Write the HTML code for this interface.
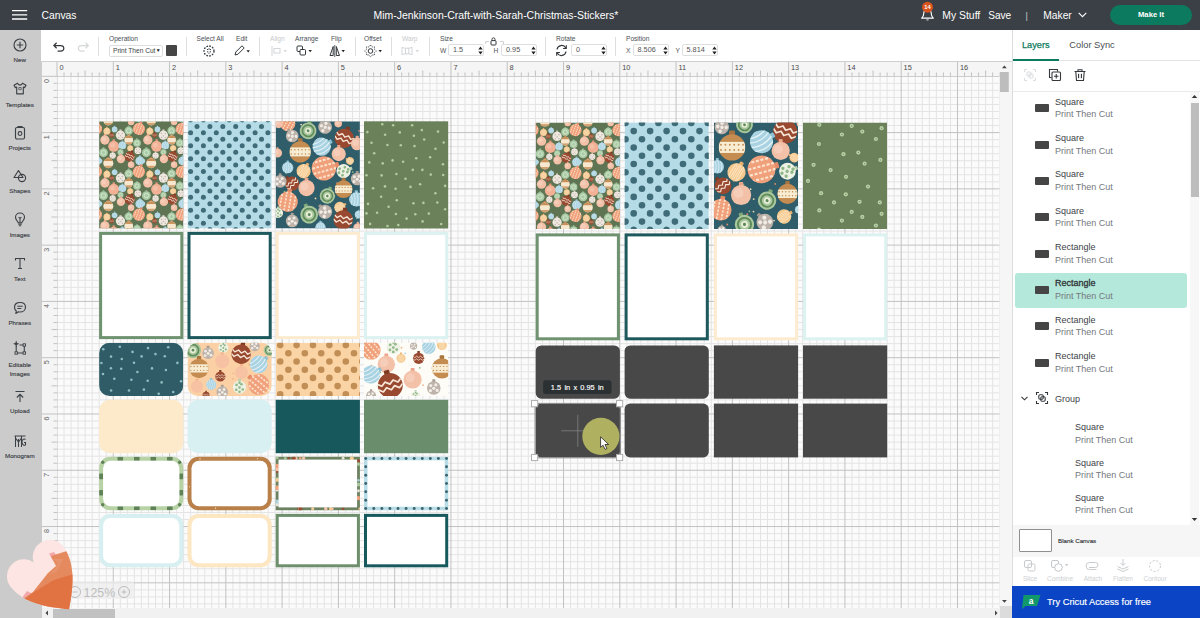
<!DOCTYPE html>
<html><head><meta charset="utf-8"><title>Canvas</title>
<style>
*{box-sizing:border-box;margin:0;padding:0}
html,body{width:1200px;height:618px;overflow:hidden;background:#fff;font-family:"Liberation Sans",sans-serif;}
body{position:relative}
.abs{position:absolute}
#hdr{left:0;top:0;width:1200px;height:30px;background:#3a4045;color:#fff}
#hdr span{position:absolute;white-space:nowrap;font-size:11px;line-height:30px;top:.7px}
#side{left:0;top:30px;width:41.5px;height:588px;background:#cbcbcb}
.sb{position:absolute;left:0;width:39.6px;text-align:center;font-size:6.2px;color:#3c4146;-webkit-text-stroke:.15px #3c4146}
.sb svg{display:block;margin:0 auto 3px}
#tool{left:41px;top:30px;width:971px;height:31.8px;background:#fff;border-bottom:1px solid #cfcfcf}
.tl{position:absolute;font-size:6.6px;color:#4a4f54;white-space:nowrap;top:35.3px;line-height:7px}
.tl.dim{color:#c6c8ca}
.sep{position:absolute;top:37px;width:1px;height:19px;background:#dedede}
.inp{position:absolute;top:44px;height:12px;border:1px solid #dedede;border-radius:2px;font-size:7.3px;line-height:10px;color:#555;padding-left:4px;background:#fff}
.lbl{position:absolute;top:46.8px;font-size:6.7px;color:#555;line-height:7px}
#panel{left:1011.5px;top:30px;width:188.5px;height:588px;background:#fff;border-left:1px solid #dcdcdc}
.ly{position:absolute;left:0;width:188px;font-size:9px;line-height:12.7px;white-space:nowrap}
.ly b{font-weight:normal;color:#3d4247;display:block}
.ly i{font-style:normal;color:#74797e;display:block}
.sw{position:absolute;left:1035px;width:14px;height:8px;background:#454545;border-radius:1px}
</style></head><body>
<svg class="abs" style="left:0;top:0" width="1200" height="618" viewBox="0 0 1200 618" font-family="Liberation Sans, sans-serif">
<rect x="41" y="62" width="971" height="556" fill="#fbfbfb"/>
<path d="M64.03 76V608M71.07 76V608M78.11 76V608M85.14 76V608M92.17 76V608M99.21 76V608M106.25 76V608M120.31 76V608M127.35 76V608M134.38 76V608M141.42 76V608M148.45 76V608M155.49 76V608M162.53 76V608M176.59 76V608M183.63 76V608M190.66 76V608M197.70 76V608M204.74 76V608M211.77 76V608M218.81 76V608M232.88 76V608M239.91 76V608M246.94 76V608M253.98 76V608M261.01 76V608M268.05 76V608M275.09 76V608M289.15 76V608M296.19 76V608M303.23 76V608M310.26 76V608M317.30 76V608M324.33 76V608M331.37 76V608M345.44 76V608M352.47 76V608M359.50 76V608M366.54 76V608M373.57 76V608M380.61 76V608M387.64 76V608M401.72 76V608M408.75 76V608M415.79 76V608M422.82 76V608M429.86 76V608M436.89 76V608M443.93 76V608M458.00 76V608M465.03 76V608M472.06 76V608M479.10 76V608M486.13 76V608M493.17 76V608M500.20 76V608M514.28 76V608M521.31 76V608M528.35 76V608M535.38 76V608M542.41 76V608M549.45 76V608M556.49 76V608M570.56 76V608M577.59 76V608M584.62 76V608M591.66 76V608M598.70 76V608M605.73 76V608M612.76 76V608M626.84 76V608M633.87 76V608M640.90 76V608M647.94 76V608M654.98 76V608M662.01 76V608M669.04 76V608M683.12 76V608M690.15 76V608M697.19 76V608M704.22 76V608M711.25 76V608M718.29 76V608M725.33 76V608M739.39 76V608M746.43 76V608M753.47 76V608M760.50 76V608M767.53 76V608M774.57 76V608M781.61 76V608M795.68 76V608M802.71 76V608M809.75 76V608M816.78 76V608M823.82 76V608M830.85 76V608M837.88 76V608M851.96 76V608M858.99 76V608M866.02 76V608M873.06 76V608M880.10 76V608M887.13 76V608M894.16 76V608M908.24 76V608M915.27 76V608M922.31 76V608M929.34 76V608M936.38 76V608M943.41 76V608M950.45 76V608M964.51 76V608M971.55 76V608M978.59 76V608M985.62 76V608M992.65 76V608M999.69 76V608M57 83.33H1000M57 90.37H1000M57 97.41H1000M57 104.44H1000M57 111.47H1000M57 118.51H1000M57 125.55H1000M57 139.62H1000M57 146.65H1000M57 153.69H1000M57 160.72H1000M57 167.75H1000M57 174.79H1000M57 181.82H1000M57 195.89H1000M57 202.93H1000M57 209.96H1000M57 217.00H1000M57 224.04H1000M57 231.07H1000M57 238.11H1000M57 252.18H1000M57 259.21H1000M57 266.25H1000M57 273.28H1000M57 280.31H1000M57 287.35H1000M57 294.38H1000M57 308.45H1000M57 315.49H1000M57 322.52H1000M57 329.56H1000M57 336.60H1000M57 343.63H1000M57 350.67H1000M57 364.74H1000M57 371.77H1000M57 378.81H1000M57 385.84H1000M57 392.88H1000M57 399.91H1000M57 406.94H1000M57 421.02H1000M57 428.05H1000M57 435.09H1000M57 442.12H1000M57 449.16H1000M57 456.19H1000M57 463.23H1000M57 477.30H1000M57 484.33H1000M57 491.37H1000M57 498.40H1000M57 505.44H1000M57 512.47H1000M57 519.50H1000M57 533.58H1000M57 540.61H1000M57 547.64H1000M57 554.68H1000M57 561.72H1000M57 568.75H1000M57 575.78H1000M57 589.86H1000M57 596.89H1000M57 603.92H1000" stroke="#e4e4e4" stroke-width="1" fill="none"/>
<path d="M57.00 76V608M113.28 76V608M169.56 76V608M225.84 76V608M282.12 76V608M338.40 76V608M394.68 76V608M450.96 76V608M507.24 76V608M563.52 76V608M619.80 76V608M676.08 76V608M732.36 76V608M788.64 76V608M844.92 76V608M901.20 76V608M957.48 76V608M57 76.30H1000M57 132.58H1000M57 188.86H1000M57 245.14H1000M57 301.42H1000M57 357.70H1000M57 413.98H1000M57 470.26H1000M57 526.54H1000M57 582.82H1000" stroke="#c2c2c2" stroke-width="1" fill="none"/>
<clipPath id="c1"><rect x="99.1" y="121.3" width="84.2" height="107.2" rx="0"/></clipPath><g clip-path="url(#c1)"><rect x="99.1" y="121.3" width="84.2" height="107.2" fill="#5f7453"/><g transform="translate(97.0 118.0) rotate(0)"><rect x="-0.97" y="-5.67" width="1.95" height="1.86" rx="0.35" fill="#8fc0d2"/><clipPath id="o1"><circle r="4.43"/></clipPath><circle r="4.43" fill="#a9d3e2"/><g clip-path="url(#o1)"><path d="M-5.58 -4.43Q-3.36 0 -5.58 4.43" fill="none" stroke="#e6f3f6" stroke-width="0.49"/><path d="M-3.72 -4.43Q-1.51 0 -3.72 4.43" fill="none" stroke="#e6f3f6" stroke-width="0.49"/><path d="M-1.86 -4.43Q0.35 0 -1.86 4.43" fill="none" stroke="#e6f3f6" stroke-width="0.49"/><path d="M0.00 -4.43Q2.21 0 0.00 4.43" fill="none" stroke="#e6f3f6" stroke-width="0.49"/><path d="M1.86 -4.43Q4.07 0 1.86 4.43" fill="none" stroke="#e6f3f6" stroke-width="0.49"/><path d="M3.72 -4.43Q5.93 0 3.72 4.43" fill="none" stroke="#e6f3f6" stroke-width="0.49"/><path d="M5.58 -4.43Q7.79 0 5.58 4.43" fill="none" stroke="#e6f3f6" stroke-width="0.49"/></g></g><g transform="translate(139.9 118.0) rotate(0)"><rect x="-0.97" y="-5.67" width="1.95" height="1.86" rx="0.35" fill="#8fc0d2"/><clipPath id="o2"><circle r="4.43"/></clipPath><circle r="4.43" fill="#a9d3e2"/><g clip-path="url(#o2)"><path d="M-5.58 -4.43Q-3.36 0 -5.58 4.43" fill="none" stroke="#e6f3f6" stroke-width="0.49"/><path d="M-3.72 -4.43Q-1.51 0 -3.72 4.43" fill="none" stroke="#e6f3f6" stroke-width="0.49"/><path d="M-1.86 -4.43Q0.35 0 -1.86 4.43" fill="none" stroke="#e6f3f6" stroke-width="0.49"/><path d="M0.00 -4.43Q2.21 0 0.00 4.43" fill="none" stroke="#e6f3f6" stroke-width="0.49"/><path d="M1.86 -4.43Q4.07 0 1.86 4.43" fill="none" stroke="#e6f3f6" stroke-width="0.49"/><path d="M3.72 -4.43Q5.93 0 3.72 4.43" fill="none" stroke="#e6f3f6" stroke-width="0.49"/><path d="M5.58 -4.43Q7.79 0 5.58 4.43" fill="none" stroke="#e6f3f6" stroke-width="0.49"/></g></g><g transform="translate(108.3 120.4) rotate(0)"><rect x="-1.10" y="-6.41" width="2.20" height="2.10" rx="0.40" fill="#b97b45"/><clipPath id="o3"><circle r="5.01"/></clipPath><circle r="5.01" fill="#f7e7cf"/><g clip-path="url(#o3)"><rect x="-5.01" y="-5.01" width="10.02" height="2.76" fill="#c98f58"/><rect x="-5.01" y="2.50" width="10.02" height="2.50" fill="#c98f58" opacity=".8"/></g></g><g transform="translate(131.1 121.9) rotate(0)"><rect x="-0.72" y="-4.18" width="1.44" height="1.37" rx="0.26" fill="#eaa58c"/><clipPath id="o4"><circle r="3.26"/></clipPath><circle r="3.26" fill="#f3c0a8"/><g clip-path="url(#o4)"><circle cx="-0.82" cy="-0.65" r="1.63" fill="#f8d5c4" opacity=".6"/></g></g><g transform="translate(182.8 118.0) rotate(0)"><rect x="-0.97" y="-5.67" width="1.95" height="1.86" rx="0.35" fill="#8fc0d2"/><clipPath id="o5"><circle r="4.43"/></clipPath><circle r="4.43" fill="#a9d3e2"/><g clip-path="url(#o5)"><path d="M-5.58 -4.43Q-3.36 0 -5.58 4.43" fill="none" stroke="#e6f3f6" stroke-width="0.49"/><path d="M-3.72 -4.43Q-1.51 0 -3.72 4.43" fill="none" stroke="#e6f3f6" stroke-width="0.49"/><path d="M-1.86 -4.43Q0.35 0 -1.86 4.43" fill="none" stroke="#e6f3f6" stroke-width="0.49"/><path d="M0.00 -4.43Q2.21 0 0.00 4.43" fill="none" stroke="#e6f3f6" stroke-width="0.49"/><path d="M1.86 -4.43Q4.07 0 1.86 4.43" fill="none" stroke="#e6f3f6" stroke-width="0.49"/><path d="M3.72 -4.43Q5.93 0 3.72 4.43" fill="none" stroke="#e6f3f6" stroke-width="0.49"/><path d="M5.58 -4.43Q7.79 0 5.58 4.43" fill="none" stroke="#e6f3f6" stroke-width="0.49"/></g></g><g transform="translate(151.2 120.4) rotate(0)"><rect x="-1.10" y="-6.41" width="2.20" height="2.10" rx="0.40" fill="#b97b45"/><clipPath id="o6"><circle r="5.01"/></clipPath><circle r="5.01" fill="#f7e7cf"/><g clip-path="url(#o6)"><rect x="-5.01" y="-5.01" width="10.02" height="2.76" fill="#c98f58"/><rect x="-5.01" y="2.50" width="10.02" height="2.50" fill="#c98f58" opacity=".8"/></g></g><g transform="translate(174.1 121.9) rotate(0)"><rect x="-0.72" y="-4.18" width="1.44" height="1.37" rx="0.26" fill="#eaa58c"/><clipPath id="o7"><circle r="3.26"/></clipPath><circle r="3.26" fill="#f3c0a8"/><g clip-path="url(#o7)"><circle cx="-0.82" cy="-0.65" r="1.63" fill="#f8d5c4" opacity=".6"/></g></g><g transform="translate(96.0 128.9) rotate(20)"><rect x="-1.33" y="-7.75" width="2.67" height="2.54" rx="0.48" fill="#e58d68"/><clipPath id="o8"><circle r="6.06"/></clipPath><circle r="6.06" fill="#f1a07c"/><g clip-path="url(#o8)"><path d="M-4.04 -6.06V6.06" stroke="#fbe3cc" stroke-width="0.97" stroke-dasharray="1.33 0.73"/><path d="M-1.35 -6.06V6.06" stroke="#fbe3cc" stroke-width="0.97" stroke-dasharray="1.33 0.73"/><path d="M1.35 -6.06V6.06" stroke="#fbe3cc" stroke-width="0.97" stroke-dasharray="1.33 0.73"/><path d="M4.04 -6.06V6.06" stroke="#fbe3cc" stroke-width="0.97" stroke-dasharray="1.33 0.73"/></g></g><g transform="translate(95.0 150.7) rotate(0)"><rect x="-0.74" y="-4.32" width="1.49" height="1.42" rx="0.27" fill="#c9bfb6"/><clipPath id="o9"><circle r="3.38"/></clipPath><circle r="3.38" fill="#efe8e0"/><g clip-path="url(#o9)"><circle cx="-1.35" cy="-1.18" r="0.57" fill="#c4b9b0"/><circle cx="1.35" cy="-1.18" r="0.57" fill="#c4b9b0"/><circle cx="0.00" cy="0.34" r="0.57" fill="#c4b9b0"/><circle cx="-1.35" cy="1.69" r="0.57" fill="#c4b9b0"/><circle cx="1.35" cy="1.69" r="0.57" fill="#c4b9b0"/></g></g><g transform="translate(97.0 160.9) rotate(0)"><rect x="-0.97" y="-5.67" width="1.95" height="1.86" rx="0.35" fill="#8fc0d2"/><clipPath id="o10"><circle r="4.43"/></clipPath><circle r="4.43" fill="#a9d3e2"/><g clip-path="url(#o10)"><path d="M-5.58 -4.43Q-3.36 0 -5.58 4.43" fill="none" stroke="#e6f3f6" stroke-width="0.49"/><path d="M-3.72 -4.43Q-1.51 0 -3.72 4.43" fill="none" stroke="#e6f3f6" stroke-width="0.49"/><path d="M-1.86 -4.43Q0.35 0 -1.86 4.43" fill="none" stroke="#e6f3f6" stroke-width="0.49"/><path d="M0.00 -4.43Q2.21 0 0.00 4.43" fill="none" stroke="#e6f3f6" stroke-width="0.49"/><path d="M1.86 -4.43Q4.07 0 1.86 4.43" fill="none" stroke="#e6f3f6" stroke-width="0.49"/><path d="M3.72 -4.43Q5.93 0 3.72 4.43" fill="none" stroke="#e6f3f6" stroke-width="0.49"/><path d="M5.58 -4.43Q7.79 0 5.58 4.43" fill="none" stroke="#e6f3f6" stroke-width="0.49"/></g></g><g transform="translate(106.9 131.3) rotate(0)"><rect x="-0.77" y="-4.47" width="1.54" height="1.47" rx="0.28" fill="#e9b070"/><clipPath id="o11"><circle r="3.50"/></clipPath><circle r="3.50" fill="#f6c98f"/><g clip-path="url(#o11)"><ellipse cx="-1.47" cy="0" rx="0.42" ry="2.97" fill="none" stroke="#fbe6c5" stroke-width="0.35"/><ellipse cx="0.00" cy="0" rx="0.42" ry="2.97" fill="none" stroke="#fbe6c5" stroke-width="0.35"/><ellipse cx="1.47" cy="0" rx="0.42" ry="2.97" fill="none" stroke="#fbe6c5" stroke-width="0.35"/></g></g><g transform="translate(114.6 129.4) rotate(0)"><rect x="-0.62" y="-3.58" width="1.23" height="1.17" rx="0.22" fill="#8fc0d2"/><clipPath id="o12"><circle r="2.80"/></clipPath><circle r="2.80" fill="#a9d3e2"/><g clip-path="url(#o12)"><path d="M-3.52 -2.80Q-2.13 0 -3.52 2.80" fill="none" stroke="#e6f3f6" stroke-width="0.31"/><path d="M-2.35 -2.80Q-0.95 0 -2.35 2.80" fill="none" stroke="#e6f3f6" stroke-width="0.31"/><path d="M-1.17 -2.80Q0.22 0 -1.17 2.80" fill="none" stroke="#e6f3f6" stroke-width="0.31"/><path d="M0.00 -2.80Q1.40 0 0.00 2.80" fill="none" stroke="#e6f3f6" stroke-width="0.31"/><path d="M1.17 -2.80Q2.57 0 1.17 2.80" fill="none" stroke="#e6f3f6" stroke-width="0.31"/><path d="M2.35 -2.80Q3.75 0 2.35 2.80" fill="none" stroke="#e6f3f6" stroke-width="0.31"/><path d="M3.52 -2.80Q4.92 0 3.52 2.80" fill="none" stroke="#e6f3f6" stroke-width="0.31"/></g></g><g transform="translate(120.5 135.2) rotate(0)"><rect x="-1.03" y="-5.97" width="2.05" height="1.96" rx="0.37" fill="#c9bfb6"/><clipPath id="o13"><circle r="4.66"/></clipPath><circle r="4.66" fill="#efe8e0"/><g clip-path="url(#o13)"><circle cx="-1.86" cy="-1.63" r="0.79" fill="#c4b9b0"/><circle cx="1.86" cy="-1.63" r="0.79" fill="#c4b9b0"/><circle cx="0.00" cy="0.47" r="0.79" fill="#c4b9b0"/><circle cx="-1.86" cy="2.33" r="0.79" fill="#c4b9b0"/><circle cx="1.86" cy="2.33" r="0.79" fill="#c4b9b0"/></g></g><g transform="translate(128.7 130.8) rotate(0)"><rect x="-0.92" y="-5.37" width="1.85" height="1.76" rx="0.34" fill="#86ad84"/><clipPath id="o14"><circle r="4.19"/></clipPath><circle r="4.19" fill="#a9cba6"/><g clip-path="url(#o14)"><circle r="2.10" fill="none" stroke="#d4e6cc" stroke-width="0.92"/></g></g><g transform="translate(138.9 128.9) rotate(20)"><rect x="-1.33" y="-7.75" width="2.67" height="2.54" rx="0.48" fill="#e58d68"/><clipPath id="o15"><circle r="6.06"/></clipPath><circle r="6.06" fill="#f1a07c"/><g clip-path="url(#o15)"><path d="M-4.04 -6.06V6.06" stroke="#fbe3cc" stroke-width="0.97" stroke-dasharray="1.33 0.73"/><path d="M-1.35 -6.06V6.06" stroke="#fbe3cc" stroke-width="0.97" stroke-dasharray="1.33 0.73"/><path d="M1.35 -6.06V6.06" stroke="#fbe3cc" stroke-width="0.97" stroke-dasharray="1.33 0.73"/><path d="M4.04 -6.06V6.06" stroke="#fbe3cc" stroke-width="0.97" stroke-dasharray="1.33 0.73"/></g></g><g transform="translate(104.9 140.0) rotate(0)"><rect x="-1.03" y="-5.97" width="2.05" height="1.96" rx="0.37" fill="#eaa58c"/><clipPath id="o16"><circle r="4.66"/></clipPath><circle r="4.66" fill="#f3c0a8"/><g clip-path="url(#o16)"><circle cx="-1.17" cy="-0.93" r="2.33" fill="#f8d5c4" opacity=".6"/></g></g><g transform="translate(111.7 135.2) rotate(0)"><rect x="-0.54" y="-3.13" width="1.08" height="1.03" rx="0.20" fill="#7d3a25"/><clipPath id="o17"><circle r="2.45"/></clipPath><circle r="2.45" fill="#98492f"/><g clip-path="url(#o17)"><path d="M-2.45 -0.93 L-1.63 -0.29 L-0.82 -0.93 L0.00 -0.29 L0.82 -0.93 L1.63 -0.29 L2.45 -0.93" fill="none" stroke="#f7e6d8" stroke-width="0.34" stroke-linejoin="round"/><path d="M-2.45 0.22 L-1.63 0.86 L-0.82 0.22 L0.00 0.86 L0.82 0.22 L1.63 0.86 L2.45 0.22" fill="none" stroke="#f7e6d8" stroke-width="0.34" stroke-linejoin="round"/></g></g><g transform="translate(128.7 140.0) rotate(0)"><rect x="-0.97" y="-5.67" width="1.95" height="1.86" rx="0.35" fill="#b97b45"/><clipPath id="o18"><circle r="4.43"/></clipPath><circle r="4.43" fill="#f7e7cf"/><g clip-path="url(#o18)"><rect x="-4.43" y="-4.43" width="8.85" height="2.43" fill="#c98f58"/><rect x="-4.43" y="2.21" width="8.85" height="2.21" fill="#c98f58" opacity=".8"/></g></g><g transform="translate(113.7 146.3) rotate(0)"><rect x="-1.20" y="-7.01" width="2.41" height="2.30" rx="0.44" fill="#e0957a"/><clipPath id="o19"><circle r="5.48"/></clipPath><circle r="5.48" fill="#f2b094"/><g clip-path="url(#o19)"><circle cx="-1.10" cy="-1.10" r="2.46" fill="#f8d0bc" opacity=".5"/></g></g><g transform="translate(122.4 145.4) rotate(0)"><rect x="-0.85" y="-4.92" width="1.69" height="1.61" rx="0.31" fill="#8fc0d2"/><clipPath id="o20"><circle r="3.84"/></clipPath><circle r="3.84" fill="#a9d3e2"/><g clip-path="url(#o20)"><path d="M-4.84 -3.84Q-2.92 0 -4.84 3.84" fill="none" stroke="#e6f3f6" stroke-width="0.42"/><path d="M-3.23 -3.84Q-1.31 0 -3.23 3.84" fill="none" stroke="#e6f3f6" stroke-width="0.42"/><path d="M-1.61 -3.84Q0.31 0 -1.61 3.84" fill="none" stroke="#e6f3f6" stroke-width="0.42"/><path d="M0.00 -3.84Q1.92 0 0.00 3.84" fill="none" stroke="#e6f3f6" stroke-width="0.42"/><path d="M1.61 -3.84Q3.54 0 1.61 3.84" fill="none" stroke="#e6f3f6" stroke-width="0.42"/><path d="M3.23 -3.84Q5.15 0 3.23 3.84" fill="none" stroke="#e6f3f6" stroke-width="0.42"/><path d="M4.84 -3.84Q6.77 0 4.84 3.84" fill="none" stroke="#e6f3f6" stroke-width="0.42"/></g></g><g transform="translate(137.0 143.0) rotate(0)"><rect x="-0.85" y="-4.92" width="1.69" height="1.61" rx="0.31" fill="#86ad84"/><clipPath id="o21"><circle r="3.84"/></clipPath><circle r="3.84" fill="#a9cba6"/><g clip-path="url(#o21)"><circle r="1.92" fill="none" stroke="#d4e6cc" stroke-width="0.85"/></g></g><g transform="translate(130.2 148.3) rotate(0)"><rect x="-0.67" y="-3.88" width="1.33" height="1.27" rx="0.24" fill="#e9b070"/><clipPath id="o22"><circle r="3.03"/></clipPath><circle r="3.03" fill="#f6c98f"/><g clip-path="url(#o22)"><ellipse cx="-1.27" cy="0" rx="0.36" ry="2.57" fill="none" stroke="#fbe6c5" stroke-width="0.30"/><ellipse cx="0.00" cy="0" rx="0.36" ry="2.57" fill="none" stroke="#fbe6c5" stroke-width="0.30"/><ellipse cx="1.27" cy="0" rx="0.36" ry="2.57" fill="none" stroke="#fbe6c5" stroke-width="0.30"/></g></g><g transform="translate(103.5 152.7) rotate(0)"><rect x="-0.97" y="-5.67" width="1.95" height="1.86" rx="0.35" fill="#86ad84"/><clipPath id="o23"><circle r="4.43"/></clipPath><circle r="4.43" fill="#a9cba6"/><g clip-path="url(#o23)"><circle r="2.21" fill="none" stroke="#d4e6cc" stroke-width="0.97"/></g></g><g transform="translate(112.7 155.6) rotate(0)"><rect x="-0.69" y="-4.03" width="1.38" height="1.32" rx="0.25" fill="#c9bfb6"/><clipPath id="o24"><circle r="3.15"/></clipPath><circle r="3.15" fill="#efe8e0"/><g clip-path="url(#o24)"><circle cx="-1.26" cy="-1.10" r="0.53" fill="#c4b9b0"/><circle cx="1.26" cy="-1.10" r="0.53" fill="#c4b9b0"/><circle cx="0.00" cy="0.31" r="0.53" fill="#c4b9b0"/><circle cx="-1.26" cy="1.57" r="0.53" fill="#c4b9b0"/><circle cx="1.26" cy="1.57" r="0.53" fill="#c4b9b0"/></g></g><g transform="translate(120.5 152.2) rotate(0)"><rect x="-0.67" y="-3.88" width="1.33" height="1.27" rx="0.24" fill="#86ad84"/><clipPath id="o25"><circle r="3.03"/></clipPath><circle r="3.03" fill="#a9cba6"/><g clip-path="url(#o25)"><circle r="1.51" fill="none" stroke="#d4e6cc" stroke-width="0.67"/></g></g><g transform="translate(137.9 150.7) rotate(0)"><rect x="-0.74" y="-4.32" width="1.49" height="1.42" rx="0.27" fill="#c9bfb6"/><clipPath id="o26"><circle r="3.38"/></clipPath><circle r="3.38" fill="#efe8e0"/><g clip-path="url(#o26)"><circle cx="-1.35" cy="-1.18" r="0.57" fill="#c4b9b0"/><circle cx="1.35" cy="-1.18" r="0.57" fill="#c4b9b0"/><circle cx="0.00" cy="0.34" r="0.57" fill="#c4b9b0"/><circle cx="-1.35" cy="1.69" r="0.57" fill="#c4b9b0"/><circle cx="1.35" cy="1.69" r="0.57" fill="#c4b9b0"/></g></g><g transform="translate(129.7 156.5) rotate(25)"><rect x="-1.10" y="-6.41" width="2.20" height="2.10" rx="0.40" fill="#7d3a25"/><clipPath id="o27"><circle r="5.01"/></clipPath><circle r="5.01" fill="#98492f"/><g clip-path="url(#o27)"><path d="M-5.01 -1.90 L-3.34 -0.60 L-1.67 -1.90 L0.00 -0.60 L1.67 -1.90 L3.34 -0.60 L5.01 -1.90" fill="none" stroke="#f7e6d8" stroke-width="0.70" stroke-linejoin="round"/><path d="M-5.01 0.45 L-3.34 1.75 L-1.67 0.45 L0.00 1.75 L1.67 0.45 L3.34 1.75 L5.01 0.45" fill="none" stroke="#f7e6d8" stroke-width="0.70" stroke-linejoin="round"/></g></g><g transform="translate(120.9 159.0) rotate(0)"><rect x="-0.92" y="-5.37" width="1.85" height="1.76" rx="0.34" fill="#eaa58c"/><clipPath id="o28"><circle r="4.19"/></clipPath><circle r="4.19" fill="#f3c0a8"/><g clip-path="url(#o28)"><circle cx="-1.05" cy="-0.84" r="2.10" fill="#f8d5c4" opacity=".6"/></g></g><g transform="translate(139.9 160.9) rotate(0)"><rect x="-0.97" y="-5.67" width="1.95" height="1.86" rx="0.35" fill="#8fc0d2"/><clipPath id="o29"><circle r="4.43"/></clipPath><circle r="4.43" fill="#a9d3e2"/><g clip-path="url(#o29)"><path d="M-5.58 -4.43Q-3.36 0 -5.58 4.43" fill="none" stroke="#e6f3f6" stroke-width="0.49"/><path d="M-3.72 -4.43Q-1.51 0 -3.72 4.43" fill="none" stroke="#e6f3f6" stroke-width="0.49"/><path d="M-1.86 -4.43Q0.35 0 -1.86 4.43" fill="none" stroke="#e6f3f6" stroke-width="0.49"/><path d="M0.00 -4.43Q2.21 0 0.00 4.43" fill="none" stroke="#e6f3f6" stroke-width="0.49"/><path d="M1.86 -4.43Q4.07 0 1.86 4.43" fill="none" stroke="#e6f3f6" stroke-width="0.49"/><path d="M3.72 -4.43Q5.93 0 3.72 4.43" fill="none" stroke="#e6f3f6" stroke-width="0.49"/><path d="M5.58 -4.43Q7.79 0 5.58 4.43" fill="none" stroke="#e6f3f6" stroke-width="0.49"/></g></g><g transform="translate(108.3 163.3) rotate(0)"><rect x="-1.10" y="-6.41" width="2.20" height="2.10" rx="0.40" fill="#b97b45"/><clipPath id="o30"><circle r="5.01"/></clipPath><circle r="5.01" fill="#f7e7cf"/><g clip-path="url(#o30)"><rect x="-5.01" y="-5.01" width="10.02" height="2.76" fill="#c98f58"/><rect x="-5.01" y="2.50" width="10.02" height="2.50" fill="#c98f58" opacity=".8"/></g></g><g transform="translate(100.1 160.9) rotate(0)"><rect x="-0.49" y="-2.83" width="0.97" height="0.93" rx="0.18" fill="#8fc0d2"/><clipPath id="o31"><circle r="2.21"/></clipPath><circle r="2.21" fill="#a9d3e2"/><g clip-path="url(#o31)"><path d="M-2.79 -2.21Q-1.68 0 -2.79 2.21" fill="none" stroke="#e6f3f6" stroke-width="0.24"/><path d="M-1.86 -2.21Q-0.75 0 -1.86 2.21" fill="none" stroke="#e6f3f6" stroke-width="0.24"/><path d="M-0.93 -2.21Q0.18 0 -0.93 2.21" fill="none" stroke="#e6f3f6" stroke-width="0.24"/><path d="M0.00 -2.21Q1.11 0 0.00 2.21" fill="none" stroke="#e6f3f6" stroke-width="0.24"/><path d="M0.93 -2.21Q2.04 0 0.93 2.21" fill="none" stroke="#e6f3f6" stroke-width="0.24"/><path d="M1.86 -2.21Q2.97 0 1.86 2.21" fill="none" stroke="#e6f3f6" stroke-width="0.24"/><path d="M2.79 -2.21Q3.90 0 2.79 2.21" fill="none" stroke="#e6f3f6" stroke-width="0.24"/></g></g><g transform="translate(131.1 164.8) rotate(0)"><rect x="-0.72" y="-4.18" width="1.44" height="1.37" rx="0.26" fill="#eaa58c"/><clipPath id="o32"><circle r="3.26"/></clipPath><circle r="3.26" fill="#f3c0a8"/><g clip-path="url(#o32)"><circle cx="-0.82" cy="-0.65" r="1.63" fill="#f8d5c4" opacity=".6"/></g></g><g transform="translate(149.8 131.3) rotate(0)"><rect x="-0.77" y="-4.47" width="1.54" height="1.47" rx="0.28" fill="#e9b070"/><clipPath id="o33"><circle r="3.50"/></clipPath><circle r="3.50" fill="#f6c98f"/><g clip-path="url(#o33)"><ellipse cx="-1.47" cy="0" rx="0.42" ry="2.97" fill="none" stroke="#fbe6c5" stroke-width="0.35"/><ellipse cx="0.00" cy="0" rx="0.42" ry="2.97" fill="none" stroke="#fbe6c5" stroke-width="0.35"/><ellipse cx="1.47" cy="0" rx="0.42" ry="2.97" fill="none" stroke="#fbe6c5" stroke-width="0.35"/></g></g><g transform="translate(157.5 129.4) rotate(0)"><rect x="-0.62" y="-3.58" width="1.23" height="1.17" rx="0.22" fill="#8fc0d2"/><clipPath id="o34"><circle r="2.80"/></clipPath><circle r="2.80" fill="#a9d3e2"/><g clip-path="url(#o34)"><path d="M-3.52 -2.80Q-2.13 0 -3.52 2.80" fill="none" stroke="#e6f3f6" stroke-width="0.31"/><path d="M-2.35 -2.80Q-0.95 0 -2.35 2.80" fill="none" stroke="#e6f3f6" stroke-width="0.31"/><path d="M-1.17 -2.80Q0.22 0 -1.17 2.80" fill="none" stroke="#e6f3f6" stroke-width="0.31"/><path d="M0.00 -2.80Q1.40 0 0.00 2.80" fill="none" stroke="#e6f3f6" stroke-width="0.31"/><path d="M1.17 -2.80Q2.57 0 1.17 2.80" fill="none" stroke="#e6f3f6" stroke-width="0.31"/><path d="M2.35 -2.80Q3.75 0 2.35 2.80" fill="none" stroke="#e6f3f6" stroke-width="0.31"/><path d="M3.52 -2.80Q4.92 0 3.52 2.80" fill="none" stroke="#e6f3f6" stroke-width="0.31"/></g></g><g transform="translate(163.4 135.2) rotate(0)"><rect x="-1.03" y="-5.97" width="2.05" height="1.96" rx="0.37" fill="#c9bfb6"/><clipPath id="o35"><circle r="4.66"/></clipPath><circle r="4.66" fill="#efe8e0"/><g clip-path="url(#o35)"><circle cx="-1.86" cy="-1.63" r="0.79" fill="#c4b9b0"/><circle cx="1.86" cy="-1.63" r="0.79" fill="#c4b9b0"/><circle cx="0.00" cy="0.47" r="0.79" fill="#c4b9b0"/><circle cx="-1.86" cy="2.33" r="0.79" fill="#c4b9b0"/><circle cx="1.86" cy="2.33" r="0.79" fill="#c4b9b0"/></g></g><g transform="translate(171.6 130.8) rotate(0)"><rect x="-0.92" y="-5.37" width="1.85" height="1.76" rx="0.34" fill="#86ad84"/><clipPath id="o36"><circle r="4.19"/></clipPath><circle r="4.19" fill="#a9cba6"/><g clip-path="url(#o36)"><circle r="2.10" fill="none" stroke="#d4e6cc" stroke-width="0.92"/></g></g><g transform="translate(181.8 128.9) rotate(20)"><rect x="-1.33" y="-7.75" width="2.67" height="2.54" rx="0.48" fill="#e58d68"/><clipPath id="o37"><circle r="6.06"/></clipPath><circle r="6.06" fill="#f1a07c"/><g clip-path="url(#o37)"><path d="M-4.04 -6.06V6.06" stroke="#fbe3cc" stroke-width="0.97" stroke-dasharray="1.33 0.73"/><path d="M-1.35 -6.06V6.06" stroke="#fbe3cc" stroke-width="0.97" stroke-dasharray="1.33 0.73"/><path d="M1.35 -6.06V6.06" stroke="#fbe3cc" stroke-width="0.97" stroke-dasharray="1.33 0.73"/><path d="M4.04 -6.06V6.06" stroke="#fbe3cc" stroke-width="0.97" stroke-dasharray="1.33 0.73"/></g></g><g transform="translate(147.8 140.0) rotate(0)"><rect x="-1.03" y="-5.97" width="2.05" height="1.96" rx="0.37" fill="#eaa58c"/><clipPath id="o38"><circle r="4.66"/></clipPath><circle r="4.66" fill="#f3c0a8"/><g clip-path="url(#o38)"><circle cx="-1.17" cy="-0.93" r="2.33" fill="#f8d5c4" opacity=".6"/></g></g><g transform="translate(154.6 135.2) rotate(0)"><rect x="-0.54" y="-3.13" width="1.08" height="1.03" rx="0.20" fill="#7d3a25"/><clipPath id="o39"><circle r="2.45"/></clipPath><circle r="2.45" fill="#98492f"/><g clip-path="url(#o39)"><path d="M-2.45 -0.93 L-1.63 -0.29 L-0.82 -0.93 L0.00 -0.29 L0.82 -0.93 L1.63 -0.29 L2.45 -0.93" fill="none" stroke="#f7e6d8" stroke-width="0.34" stroke-linejoin="round"/><path d="M-2.45 0.22 L-1.63 0.86 L-0.82 0.22 L0.00 0.86 L0.82 0.22 L1.63 0.86 L2.45 0.22" fill="none" stroke="#f7e6d8" stroke-width="0.34" stroke-linejoin="round"/></g></g><g transform="translate(171.6 140.0) rotate(0)"><rect x="-0.97" y="-5.67" width="1.95" height="1.86" rx="0.35" fill="#b97b45"/><clipPath id="o40"><circle r="4.43"/></clipPath><circle r="4.43" fill="#f7e7cf"/><g clip-path="url(#o40)"><rect x="-4.43" y="-4.43" width="8.85" height="2.43" fill="#c98f58"/><rect x="-4.43" y="2.21" width="8.85" height="2.21" fill="#c98f58" opacity=".8"/></g></g><g transform="translate(156.6 146.3) rotate(0)"><rect x="-1.20" y="-7.01" width="2.41" height="2.30" rx="0.44" fill="#e0957a"/><clipPath id="o41"><circle r="5.48"/></clipPath><circle r="5.48" fill="#f2b094"/><g clip-path="url(#o41)"><circle cx="-1.10" cy="-1.10" r="2.46" fill="#f8d0bc" opacity=".5"/></g></g><g transform="translate(165.3 145.4) rotate(0)"><rect x="-0.85" y="-4.92" width="1.69" height="1.61" rx="0.31" fill="#8fc0d2"/><clipPath id="o42"><circle r="3.84"/></clipPath><circle r="3.84" fill="#a9d3e2"/><g clip-path="url(#o42)"><path d="M-4.84 -3.84Q-2.92 0 -4.84 3.84" fill="none" stroke="#e6f3f6" stroke-width="0.42"/><path d="M-3.23 -3.84Q-1.31 0 -3.23 3.84" fill="none" stroke="#e6f3f6" stroke-width="0.42"/><path d="M-1.61 -3.84Q0.31 0 -1.61 3.84" fill="none" stroke="#e6f3f6" stroke-width="0.42"/><path d="M0.00 -3.84Q1.92 0 0.00 3.84" fill="none" stroke="#e6f3f6" stroke-width="0.42"/><path d="M1.61 -3.84Q3.54 0 1.61 3.84" fill="none" stroke="#e6f3f6" stroke-width="0.42"/><path d="M3.23 -3.84Q5.15 0 3.23 3.84" fill="none" stroke="#e6f3f6" stroke-width="0.42"/><path d="M4.84 -3.84Q6.77 0 4.84 3.84" fill="none" stroke="#e6f3f6" stroke-width="0.42"/></g></g><g transform="translate(179.9 143.0) rotate(0)"><rect x="-0.85" y="-4.92" width="1.69" height="1.61" rx="0.31" fill="#86ad84"/><clipPath id="o43"><circle r="3.84"/></clipPath><circle r="3.84" fill="#a9cba6"/><g clip-path="url(#o43)"><circle r="1.92" fill="none" stroke="#d4e6cc" stroke-width="0.85"/></g></g><g transform="translate(173.1 148.3) rotate(0)"><rect x="-0.67" y="-3.88" width="1.33" height="1.27" rx="0.24" fill="#e9b070"/><clipPath id="o44"><circle r="3.03"/></clipPath><circle r="3.03" fill="#f6c98f"/><g clip-path="url(#o44)"><ellipse cx="-1.27" cy="0" rx="0.36" ry="2.57" fill="none" stroke="#fbe6c5" stroke-width="0.30"/><ellipse cx="0.00" cy="0" rx="0.36" ry="2.57" fill="none" stroke="#fbe6c5" stroke-width="0.30"/><ellipse cx="1.27" cy="0" rx="0.36" ry="2.57" fill="none" stroke="#fbe6c5" stroke-width="0.30"/></g></g><g transform="translate(146.4 152.7) rotate(0)"><rect x="-0.97" y="-5.67" width="1.95" height="1.86" rx="0.35" fill="#86ad84"/><clipPath id="o45"><circle r="4.43"/></clipPath><circle r="4.43" fill="#a9cba6"/><g clip-path="url(#o45)"><circle r="2.21" fill="none" stroke="#d4e6cc" stroke-width="0.97"/></g></g><g transform="translate(155.6 155.6) rotate(0)"><rect x="-0.69" y="-4.03" width="1.38" height="1.32" rx="0.25" fill="#c9bfb6"/><clipPath id="o46"><circle r="3.15"/></clipPath><circle r="3.15" fill="#efe8e0"/><g clip-path="url(#o46)"><circle cx="-1.26" cy="-1.10" r="0.53" fill="#c4b9b0"/><circle cx="1.26" cy="-1.10" r="0.53" fill="#c4b9b0"/><circle cx="0.00" cy="0.31" r="0.53" fill="#c4b9b0"/><circle cx="-1.26" cy="1.57" r="0.53" fill="#c4b9b0"/><circle cx="1.26" cy="1.57" r="0.53" fill="#c4b9b0"/></g></g><g transform="translate(163.4 152.2) rotate(0)"><rect x="-0.67" y="-3.88" width="1.33" height="1.27" rx="0.24" fill="#86ad84"/><clipPath id="o47"><circle r="3.03"/></clipPath><circle r="3.03" fill="#a9cba6"/><g clip-path="url(#o47)"><circle r="1.51" fill="none" stroke="#d4e6cc" stroke-width="0.67"/></g></g><g transform="translate(180.8 150.7) rotate(0)"><rect x="-0.74" y="-4.32" width="1.49" height="1.42" rx="0.27" fill="#c9bfb6"/><clipPath id="o48"><circle r="3.38"/></clipPath><circle r="3.38" fill="#efe8e0"/><g clip-path="url(#o48)"><circle cx="-1.35" cy="-1.18" r="0.57" fill="#c4b9b0"/><circle cx="1.35" cy="-1.18" r="0.57" fill="#c4b9b0"/><circle cx="0.00" cy="0.34" r="0.57" fill="#c4b9b0"/><circle cx="-1.35" cy="1.69" r="0.57" fill="#c4b9b0"/><circle cx="1.35" cy="1.69" r="0.57" fill="#c4b9b0"/></g></g><g transform="translate(172.6 156.5) rotate(25)"><rect x="-1.10" y="-6.41" width="2.20" height="2.10" rx="0.40" fill="#7d3a25"/><clipPath id="o49"><circle r="5.01"/></clipPath><circle r="5.01" fill="#98492f"/><g clip-path="url(#o49)"><path d="M-5.01 -1.90 L-3.34 -0.60 L-1.67 -1.90 L0.00 -0.60 L1.67 -1.90 L3.34 -0.60 L5.01 -1.90" fill="none" stroke="#f7e6d8" stroke-width="0.70" stroke-linejoin="round"/><path d="M-5.01 0.45 L-3.34 1.75 L-1.67 0.45 L0.00 1.75 L1.67 0.45 L3.34 1.75 L5.01 0.45" fill="none" stroke="#f7e6d8" stroke-width="0.70" stroke-linejoin="round"/></g></g><g transform="translate(163.9 159.0) rotate(0)"><rect x="-0.92" y="-5.37" width="1.85" height="1.76" rx="0.34" fill="#eaa58c"/><clipPath id="o50"><circle r="4.19"/></clipPath><circle r="4.19" fill="#f3c0a8"/><g clip-path="url(#o50)"><circle cx="-1.05" cy="-0.84" r="2.10" fill="#f8d5c4" opacity=".6"/></g></g><g transform="translate(182.8 160.9) rotate(0)"><rect x="-0.97" y="-5.67" width="1.95" height="1.86" rx="0.35" fill="#8fc0d2"/><clipPath id="o51"><circle r="4.43"/></clipPath><circle r="4.43" fill="#a9d3e2"/><g clip-path="url(#o51)"><path d="M-5.58 -4.43Q-3.36 0 -5.58 4.43" fill="none" stroke="#e6f3f6" stroke-width="0.49"/><path d="M-3.72 -4.43Q-1.51 0 -3.72 4.43" fill="none" stroke="#e6f3f6" stroke-width="0.49"/><path d="M-1.86 -4.43Q0.35 0 -1.86 4.43" fill="none" stroke="#e6f3f6" stroke-width="0.49"/><path d="M0.00 -4.43Q2.21 0 0.00 4.43" fill="none" stroke="#e6f3f6" stroke-width="0.49"/><path d="M1.86 -4.43Q4.07 0 1.86 4.43" fill="none" stroke="#e6f3f6" stroke-width="0.49"/><path d="M3.72 -4.43Q5.93 0 3.72 4.43" fill="none" stroke="#e6f3f6" stroke-width="0.49"/><path d="M5.58 -4.43Q7.79 0 5.58 4.43" fill="none" stroke="#e6f3f6" stroke-width="0.49"/></g></g><g transform="translate(151.2 163.3) rotate(0)"><rect x="-1.10" y="-6.41" width="2.20" height="2.10" rx="0.40" fill="#b97b45"/><clipPath id="o52"><circle r="5.01"/></clipPath><circle r="5.01" fill="#f7e7cf"/><g clip-path="url(#o52)"><rect x="-5.01" y="-5.01" width="10.02" height="2.76" fill="#c98f58"/><rect x="-5.01" y="2.50" width="10.02" height="2.50" fill="#c98f58" opacity=".8"/></g></g><g transform="translate(143.0 160.9) rotate(0)"><rect x="-0.49" y="-2.83" width="0.97" height="0.93" rx="0.18" fill="#8fc0d2"/><clipPath id="o53"><circle r="2.21"/></clipPath><circle r="2.21" fill="#a9d3e2"/><g clip-path="url(#o53)"><path d="M-2.79 -2.21Q-1.68 0 -2.79 2.21" fill="none" stroke="#e6f3f6" stroke-width="0.24"/><path d="M-1.86 -2.21Q-0.75 0 -1.86 2.21" fill="none" stroke="#e6f3f6" stroke-width="0.24"/><path d="M-0.93 -2.21Q0.18 0 -0.93 2.21" fill="none" stroke="#e6f3f6" stroke-width="0.24"/><path d="M0.00 -2.21Q1.11 0 0.00 2.21" fill="none" stroke="#e6f3f6" stroke-width="0.24"/><path d="M0.93 -2.21Q2.04 0 0.93 2.21" fill="none" stroke="#e6f3f6" stroke-width="0.24"/><path d="M1.86 -2.21Q2.97 0 1.86 2.21" fill="none" stroke="#e6f3f6" stroke-width="0.24"/><path d="M2.79 -2.21Q3.90 0 2.79 2.21" fill="none" stroke="#e6f3f6" stroke-width="0.24"/></g></g><g transform="translate(174.1 164.8) rotate(0)"><rect x="-0.72" y="-4.18" width="1.44" height="1.37" rx="0.26" fill="#eaa58c"/><clipPath id="o54"><circle r="3.26"/></clipPath><circle r="3.26" fill="#f3c0a8"/><g clip-path="url(#o54)"><circle cx="-0.82" cy="-0.65" r="1.63" fill="#f8d5c4" opacity=".6"/></g></g><g transform="translate(185.9 160.9) rotate(0)"><rect x="-0.49" y="-2.83" width="0.97" height="0.93" rx="0.18" fill="#8fc0d2"/><clipPath id="o55"><circle r="2.21"/></clipPath><circle r="2.21" fill="#a9d3e2"/><g clip-path="url(#o55)"><path d="M-2.79 -2.21Q-1.68 0 -2.79 2.21" fill="none" stroke="#e6f3f6" stroke-width="0.24"/><path d="M-1.86 -2.21Q-0.75 0 -1.86 2.21" fill="none" stroke="#e6f3f6" stroke-width="0.24"/><path d="M-0.93 -2.21Q0.18 0 -0.93 2.21" fill="none" stroke="#e6f3f6" stroke-width="0.24"/><path d="M0.00 -2.21Q1.11 0 0.00 2.21" fill="none" stroke="#e6f3f6" stroke-width="0.24"/><path d="M0.93 -2.21Q2.04 0 0.93 2.21" fill="none" stroke="#e6f3f6" stroke-width="0.24"/><path d="M1.86 -2.21Q2.97 0 1.86 2.21" fill="none" stroke="#e6f3f6" stroke-width="0.24"/><path d="M2.79 -2.21Q3.90 0 2.79 2.21" fill="none" stroke="#e6f3f6" stroke-width="0.24"/></g></g><g transform="translate(96.0 171.8) rotate(20)"><rect x="-1.33" y="-7.75" width="2.67" height="2.54" rx="0.48" fill="#e58d68"/><clipPath id="o56"><circle r="6.06"/></clipPath><circle r="6.06" fill="#f1a07c"/><g clip-path="url(#o56)"><path d="M-4.04 -6.06V6.06" stroke="#fbe3cc" stroke-width="0.97" stroke-dasharray="1.33 0.73"/><path d="M-1.35 -6.06V6.06" stroke="#fbe3cc" stroke-width="0.97" stroke-dasharray="1.33 0.73"/><path d="M1.35 -6.06V6.06" stroke="#fbe3cc" stroke-width="0.97" stroke-dasharray="1.33 0.73"/><path d="M4.04 -6.06V6.06" stroke="#fbe3cc" stroke-width="0.97" stroke-dasharray="1.33 0.73"/></g></g><g transform="translate(95.0 193.6) rotate(0)"><rect x="-0.74" y="-4.32" width="1.49" height="1.42" rx="0.27" fill="#c9bfb6"/><clipPath id="o57"><circle r="3.38"/></clipPath><circle r="3.38" fill="#efe8e0"/><g clip-path="url(#o57)"><circle cx="-1.35" cy="-1.18" r="0.57" fill="#c4b9b0"/><circle cx="1.35" cy="-1.18" r="0.57" fill="#c4b9b0"/><circle cx="0.00" cy="0.34" r="0.57" fill="#c4b9b0"/><circle cx="-1.35" cy="1.69" r="0.57" fill="#c4b9b0"/><circle cx="1.35" cy="1.69" r="0.57" fill="#c4b9b0"/></g></g><g transform="translate(97.0 203.8) rotate(0)"><rect x="-0.97" y="-5.67" width="1.95" height="1.86" rx="0.35" fill="#8fc0d2"/><clipPath id="o58"><circle r="4.43"/></clipPath><circle r="4.43" fill="#a9d3e2"/><g clip-path="url(#o58)"><path d="M-5.58 -4.43Q-3.36 0 -5.58 4.43" fill="none" stroke="#e6f3f6" stroke-width="0.49"/><path d="M-3.72 -4.43Q-1.51 0 -3.72 4.43" fill="none" stroke="#e6f3f6" stroke-width="0.49"/><path d="M-1.86 -4.43Q0.35 0 -1.86 4.43" fill="none" stroke="#e6f3f6" stroke-width="0.49"/><path d="M0.00 -4.43Q2.21 0 0.00 4.43" fill="none" stroke="#e6f3f6" stroke-width="0.49"/><path d="M1.86 -4.43Q4.07 0 1.86 4.43" fill="none" stroke="#e6f3f6" stroke-width="0.49"/><path d="M3.72 -4.43Q5.93 0 3.72 4.43" fill="none" stroke="#e6f3f6" stroke-width="0.49"/><path d="M5.58 -4.43Q7.79 0 5.58 4.43" fill="none" stroke="#e6f3f6" stroke-width="0.49"/></g></g><g transform="translate(106.9 174.2) rotate(0)"><rect x="-0.77" y="-4.47" width="1.54" height="1.47" rx="0.28" fill="#e9b070"/><clipPath id="o59"><circle r="3.50"/></clipPath><circle r="3.50" fill="#f6c98f"/><g clip-path="url(#o59)"><ellipse cx="-1.47" cy="0" rx="0.42" ry="2.97" fill="none" stroke="#fbe6c5" stroke-width="0.35"/><ellipse cx="0.00" cy="0" rx="0.42" ry="2.97" fill="none" stroke="#fbe6c5" stroke-width="0.35"/><ellipse cx="1.47" cy="0" rx="0.42" ry="2.97" fill="none" stroke="#fbe6c5" stroke-width="0.35"/></g></g><g transform="translate(114.6 172.3) rotate(0)"><rect x="-0.62" y="-3.58" width="1.23" height="1.17" rx="0.22" fill="#8fc0d2"/><clipPath id="o60"><circle r="2.80"/></clipPath><circle r="2.80" fill="#a9d3e2"/><g clip-path="url(#o60)"><path d="M-3.52 -2.80Q-2.13 0 -3.52 2.80" fill="none" stroke="#e6f3f6" stroke-width="0.31"/><path d="M-2.35 -2.80Q-0.95 0 -2.35 2.80" fill="none" stroke="#e6f3f6" stroke-width="0.31"/><path d="M-1.17 -2.80Q0.22 0 -1.17 2.80" fill="none" stroke="#e6f3f6" stroke-width="0.31"/><path d="M0.00 -2.80Q1.40 0 0.00 2.80" fill="none" stroke="#e6f3f6" stroke-width="0.31"/><path d="M1.17 -2.80Q2.57 0 1.17 2.80" fill="none" stroke="#e6f3f6" stroke-width="0.31"/><path d="M2.35 -2.80Q3.75 0 2.35 2.80" fill="none" stroke="#e6f3f6" stroke-width="0.31"/><path d="M3.52 -2.80Q4.92 0 3.52 2.80" fill="none" stroke="#e6f3f6" stroke-width="0.31"/></g></g><g transform="translate(120.5 178.1) rotate(0)"><rect x="-1.03" y="-5.97" width="2.05" height="1.96" rx="0.37" fill="#c9bfb6"/><clipPath id="o61"><circle r="4.66"/></clipPath><circle r="4.66" fill="#efe8e0"/><g clip-path="url(#o61)"><circle cx="-1.86" cy="-1.63" r="0.79" fill="#c4b9b0"/><circle cx="1.86" cy="-1.63" r="0.79" fill="#c4b9b0"/><circle cx="0.00" cy="0.47" r="0.79" fill="#c4b9b0"/><circle cx="-1.86" cy="2.33" r="0.79" fill="#c4b9b0"/><circle cx="1.86" cy="2.33" r="0.79" fill="#c4b9b0"/></g></g><g transform="translate(128.7 173.7) rotate(0)"><rect x="-0.92" y="-5.37" width="1.85" height="1.76" rx="0.34" fill="#86ad84"/><clipPath id="o62"><circle r="4.19"/></clipPath><circle r="4.19" fill="#a9cba6"/><g clip-path="url(#o62)"><circle r="2.10" fill="none" stroke="#d4e6cc" stroke-width="0.92"/></g></g><g transform="translate(138.9 171.8) rotate(20)"><rect x="-1.33" y="-7.75" width="2.67" height="2.54" rx="0.48" fill="#e58d68"/><clipPath id="o63"><circle r="6.06"/></clipPath><circle r="6.06" fill="#f1a07c"/><g clip-path="url(#o63)"><path d="M-4.04 -6.06V6.06" stroke="#fbe3cc" stroke-width="0.97" stroke-dasharray="1.33 0.73"/><path d="M-1.35 -6.06V6.06" stroke="#fbe3cc" stroke-width="0.97" stroke-dasharray="1.33 0.73"/><path d="M1.35 -6.06V6.06" stroke="#fbe3cc" stroke-width="0.97" stroke-dasharray="1.33 0.73"/><path d="M4.04 -6.06V6.06" stroke="#fbe3cc" stroke-width="0.97" stroke-dasharray="1.33 0.73"/></g></g><g transform="translate(104.9 183.0) rotate(0)"><rect x="-1.03" y="-5.97" width="2.05" height="1.96" rx="0.37" fill="#eaa58c"/><clipPath id="o64"><circle r="4.66"/></clipPath><circle r="4.66" fill="#f3c0a8"/><g clip-path="url(#o64)"><circle cx="-1.17" cy="-0.93" r="2.33" fill="#f8d5c4" opacity=".6"/></g></g><g transform="translate(111.7 178.1) rotate(0)"><rect x="-0.54" y="-3.13" width="1.08" height="1.03" rx="0.20" fill="#7d3a25"/><clipPath id="o65"><circle r="2.45"/></clipPath><circle r="2.45" fill="#98492f"/><g clip-path="url(#o65)"><path d="M-2.45 -0.93 L-1.63 -0.29 L-0.82 -0.93 L0.00 -0.29 L0.82 -0.93 L1.63 -0.29 L2.45 -0.93" fill="none" stroke="#f7e6d8" stroke-width="0.34" stroke-linejoin="round"/><path d="M-2.45 0.22 L-1.63 0.86 L-0.82 0.22 L0.00 0.86 L0.82 0.22 L1.63 0.86 L2.45 0.22" fill="none" stroke="#f7e6d8" stroke-width="0.34" stroke-linejoin="round"/></g></g><g transform="translate(128.7 183.0) rotate(0)"><rect x="-0.97" y="-5.67" width="1.95" height="1.86" rx="0.35" fill="#b97b45"/><clipPath id="o66"><circle r="4.43"/></clipPath><circle r="4.43" fill="#f7e7cf"/><g clip-path="url(#o66)"><rect x="-4.43" y="-4.43" width="8.85" height="2.43" fill="#c98f58"/><rect x="-4.43" y="2.21" width="8.85" height="2.21" fill="#c98f58" opacity=".8"/></g></g><g transform="translate(113.7 189.3) rotate(0)"><rect x="-1.20" y="-7.01" width="2.41" height="2.30" rx="0.44" fill="#e0957a"/><clipPath id="o67"><circle r="5.48"/></clipPath><circle r="5.48" fill="#f2b094"/><g clip-path="url(#o67)"><circle cx="-1.10" cy="-1.10" r="2.46" fill="#f8d0bc" opacity=".5"/></g></g><g transform="translate(122.4 188.3) rotate(0)"><rect x="-0.85" y="-4.92" width="1.69" height="1.61" rx="0.31" fill="#8fc0d2"/><clipPath id="o68"><circle r="3.84"/></clipPath><circle r="3.84" fill="#a9d3e2"/><g clip-path="url(#o68)"><path d="M-4.84 -3.84Q-2.92 0 -4.84 3.84" fill="none" stroke="#e6f3f6" stroke-width="0.42"/><path d="M-3.23 -3.84Q-1.31 0 -3.23 3.84" fill="none" stroke="#e6f3f6" stroke-width="0.42"/><path d="M-1.61 -3.84Q0.31 0 -1.61 3.84" fill="none" stroke="#e6f3f6" stroke-width="0.42"/><path d="M0.00 -3.84Q1.92 0 0.00 3.84" fill="none" stroke="#e6f3f6" stroke-width="0.42"/><path d="M1.61 -3.84Q3.54 0 1.61 3.84" fill="none" stroke="#e6f3f6" stroke-width="0.42"/><path d="M3.23 -3.84Q5.15 0 3.23 3.84" fill="none" stroke="#e6f3f6" stroke-width="0.42"/><path d="M4.84 -3.84Q6.77 0 4.84 3.84" fill="none" stroke="#e6f3f6" stroke-width="0.42"/></g></g><g transform="translate(137.0 185.9) rotate(0)"><rect x="-0.85" y="-4.92" width="1.69" height="1.61" rx="0.31" fill="#86ad84"/><clipPath id="o69"><circle r="3.84"/></clipPath><circle r="3.84" fill="#a9cba6"/><g clip-path="url(#o69)"><circle r="1.92" fill="none" stroke="#d4e6cc" stroke-width="0.85"/></g></g><g transform="translate(130.2 191.2) rotate(0)"><rect x="-0.67" y="-3.88" width="1.33" height="1.27" rx="0.24" fill="#e9b070"/><clipPath id="o70"><circle r="3.03"/></clipPath><circle r="3.03" fill="#f6c98f"/><g clip-path="url(#o70)"><ellipse cx="-1.27" cy="0" rx="0.36" ry="2.57" fill="none" stroke="#fbe6c5" stroke-width="0.30"/><ellipse cx="0.00" cy="0" rx="0.36" ry="2.57" fill="none" stroke="#fbe6c5" stroke-width="0.30"/><ellipse cx="1.27" cy="0" rx="0.36" ry="2.57" fill="none" stroke="#fbe6c5" stroke-width="0.30"/></g></g><g transform="translate(103.5 195.6) rotate(0)"><rect x="-0.97" y="-5.67" width="1.95" height="1.86" rx="0.35" fill="#86ad84"/><clipPath id="o71"><circle r="4.43"/></clipPath><circle r="4.43" fill="#a9cba6"/><g clip-path="url(#o71)"><circle r="2.21" fill="none" stroke="#d4e6cc" stroke-width="0.97"/></g></g><g transform="translate(112.7 198.5) rotate(0)"><rect x="-0.69" y="-4.03" width="1.38" height="1.32" rx="0.25" fill="#c9bfb6"/><clipPath id="o72"><circle r="3.15"/></clipPath><circle r="3.15" fill="#efe8e0"/><g clip-path="url(#o72)"><circle cx="-1.26" cy="-1.10" r="0.53" fill="#c4b9b0"/><circle cx="1.26" cy="-1.10" r="0.53" fill="#c4b9b0"/><circle cx="0.00" cy="0.31" r="0.53" fill="#c4b9b0"/><circle cx="-1.26" cy="1.57" r="0.53" fill="#c4b9b0"/><circle cx="1.26" cy="1.57" r="0.53" fill="#c4b9b0"/></g></g><g transform="translate(120.5 195.1) rotate(0)"><rect x="-0.67" y="-3.88" width="1.33" height="1.27" rx="0.24" fill="#86ad84"/><clipPath id="o73"><circle r="3.03"/></clipPath><circle r="3.03" fill="#a9cba6"/><g clip-path="url(#o73)"><circle r="1.51" fill="none" stroke="#d4e6cc" stroke-width="0.67"/></g></g><g transform="translate(137.9 193.6) rotate(0)"><rect x="-0.74" y="-4.32" width="1.49" height="1.42" rx="0.27" fill="#c9bfb6"/><clipPath id="o74"><circle r="3.38"/></clipPath><circle r="3.38" fill="#efe8e0"/><g clip-path="url(#o74)"><circle cx="-1.35" cy="-1.18" r="0.57" fill="#c4b9b0"/><circle cx="1.35" cy="-1.18" r="0.57" fill="#c4b9b0"/><circle cx="0.00" cy="0.34" r="0.57" fill="#c4b9b0"/><circle cx="-1.35" cy="1.69" r="0.57" fill="#c4b9b0"/><circle cx="1.35" cy="1.69" r="0.57" fill="#c4b9b0"/></g></g><g transform="translate(129.7 199.5) rotate(25)"><rect x="-1.10" y="-6.41" width="2.20" height="2.10" rx="0.40" fill="#7d3a25"/><clipPath id="o75"><circle r="5.01"/></clipPath><circle r="5.01" fill="#98492f"/><g clip-path="url(#o75)"><path d="M-5.01 -1.90 L-3.34 -0.60 L-1.67 -1.90 L0.00 -0.60 L1.67 -1.90 L3.34 -0.60 L5.01 -1.90" fill="none" stroke="#f7e6d8" stroke-width="0.70" stroke-linejoin="round"/><path d="M-5.01 0.45 L-3.34 1.75 L-1.67 0.45 L0.00 1.75 L1.67 0.45 L3.34 1.75 L5.01 0.45" fill="none" stroke="#f7e6d8" stroke-width="0.70" stroke-linejoin="round"/></g></g><g transform="translate(120.9 201.9) rotate(0)"><rect x="-0.92" y="-5.37" width="1.85" height="1.76" rx="0.34" fill="#eaa58c"/><clipPath id="o76"><circle r="4.19"/></clipPath><circle r="4.19" fill="#f3c0a8"/><g clip-path="url(#o76)"><circle cx="-1.05" cy="-0.84" r="2.10" fill="#f8d5c4" opacity=".6"/></g></g><g transform="translate(139.9 203.8) rotate(0)"><rect x="-0.97" y="-5.67" width="1.95" height="1.86" rx="0.35" fill="#8fc0d2"/><clipPath id="o77"><circle r="4.43"/></clipPath><circle r="4.43" fill="#a9d3e2"/><g clip-path="url(#o77)"><path d="M-5.58 -4.43Q-3.36 0 -5.58 4.43" fill="none" stroke="#e6f3f6" stroke-width="0.49"/><path d="M-3.72 -4.43Q-1.51 0 -3.72 4.43" fill="none" stroke="#e6f3f6" stroke-width="0.49"/><path d="M-1.86 -4.43Q0.35 0 -1.86 4.43" fill="none" stroke="#e6f3f6" stroke-width="0.49"/><path d="M0.00 -4.43Q2.21 0 0.00 4.43" fill="none" stroke="#e6f3f6" stroke-width="0.49"/><path d="M1.86 -4.43Q4.07 0 1.86 4.43" fill="none" stroke="#e6f3f6" stroke-width="0.49"/><path d="M3.72 -4.43Q5.93 0 3.72 4.43" fill="none" stroke="#e6f3f6" stroke-width="0.49"/><path d="M5.58 -4.43Q7.79 0 5.58 4.43" fill="none" stroke="#e6f3f6" stroke-width="0.49"/></g></g><g transform="translate(108.3 206.3) rotate(0)"><rect x="-1.10" y="-6.41" width="2.20" height="2.10" rx="0.40" fill="#b97b45"/><clipPath id="o78"><circle r="5.01"/></clipPath><circle r="5.01" fill="#f7e7cf"/><g clip-path="url(#o78)"><rect x="-5.01" y="-5.01" width="10.02" height="2.76" fill="#c98f58"/><rect x="-5.01" y="2.50" width="10.02" height="2.50" fill="#c98f58" opacity=".8"/></g></g><g transform="translate(100.1 203.8) rotate(0)"><rect x="-0.49" y="-2.83" width="0.97" height="0.93" rx="0.18" fill="#8fc0d2"/><clipPath id="o79"><circle r="2.21"/></clipPath><circle r="2.21" fill="#a9d3e2"/><g clip-path="url(#o79)"><path d="M-2.79 -2.21Q-1.68 0 -2.79 2.21" fill="none" stroke="#e6f3f6" stroke-width="0.24"/><path d="M-1.86 -2.21Q-0.75 0 -1.86 2.21" fill="none" stroke="#e6f3f6" stroke-width="0.24"/><path d="M-0.93 -2.21Q0.18 0 -0.93 2.21" fill="none" stroke="#e6f3f6" stroke-width="0.24"/><path d="M0.00 -2.21Q1.11 0 0.00 2.21" fill="none" stroke="#e6f3f6" stroke-width="0.24"/><path d="M0.93 -2.21Q2.04 0 0.93 2.21" fill="none" stroke="#e6f3f6" stroke-width="0.24"/><path d="M1.86 -2.21Q2.97 0 1.86 2.21" fill="none" stroke="#e6f3f6" stroke-width="0.24"/><path d="M2.79 -2.21Q3.90 0 2.79 2.21" fill="none" stroke="#e6f3f6" stroke-width="0.24"/></g></g><g transform="translate(131.1 207.7) rotate(0)"><rect x="-0.72" y="-4.18" width="1.44" height="1.37" rx="0.26" fill="#eaa58c"/><clipPath id="o80"><circle r="3.26"/></clipPath><circle r="3.26" fill="#f3c0a8"/><g clip-path="url(#o80)"><circle cx="-0.82" cy="-0.65" r="1.63" fill="#f8d5c4" opacity=".6"/></g></g><g transform="translate(149.8 174.2) rotate(0)"><rect x="-0.77" y="-4.47" width="1.54" height="1.47" rx="0.28" fill="#e9b070"/><clipPath id="o81"><circle r="3.50"/></clipPath><circle r="3.50" fill="#f6c98f"/><g clip-path="url(#o81)"><ellipse cx="-1.47" cy="0" rx="0.42" ry="2.97" fill="none" stroke="#fbe6c5" stroke-width="0.35"/><ellipse cx="0.00" cy="0" rx="0.42" ry="2.97" fill="none" stroke="#fbe6c5" stroke-width="0.35"/><ellipse cx="1.47" cy="0" rx="0.42" ry="2.97" fill="none" stroke="#fbe6c5" stroke-width="0.35"/></g></g><g transform="translate(157.5 172.3) rotate(0)"><rect x="-0.62" y="-3.58" width="1.23" height="1.17" rx="0.22" fill="#8fc0d2"/><clipPath id="o82"><circle r="2.80"/></clipPath><circle r="2.80" fill="#a9d3e2"/><g clip-path="url(#o82)"><path d="M-3.52 -2.80Q-2.13 0 -3.52 2.80" fill="none" stroke="#e6f3f6" stroke-width="0.31"/><path d="M-2.35 -2.80Q-0.95 0 -2.35 2.80" fill="none" stroke="#e6f3f6" stroke-width="0.31"/><path d="M-1.17 -2.80Q0.22 0 -1.17 2.80" fill="none" stroke="#e6f3f6" stroke-width="0.31"/><path d="M0.00 -2.80Q1.40 0 0.00 2.80" fill="none" stroke="#e6f3f6" stroke-width="0.31"/><path d="M1.17 -2.80Q2.57 0 1.17 2.80" fill="none" stroke="#e6f3f6" stroke-width="0.31"/><path d="M2.35 -2.80Q3.75 0 2.35 2.80" fill="none" stroke="#e6f3f6" stroke-width="0.31"/><path d="M3.52 -2.80Q4.92 0 3.52 2.80" fill="none" stroke="#e6f3f6" stroke-width="0.31"/></g></g><g transform="translate(163.4 178.1) rotate(0)"><rect x="-1.03" y="-5.97" width="2.05" height="1.96" rx="0.37" fill="#c9bfb6"/><clipPath id="o83"><circle r="4.66"/></clipPath><circle r="4.66" fill="#efe8e0"/><g clip-path="url(#o83)"><circle cx="-1.86" cy="-1.63" r="0.79" fill="#c4b9b0"/><circle cx="1.86" cy="-1.63" r="0.79" fill="#c4b9b0"/><circle cx="0.00" cy="0.47" r="0.79" fill="#c4b9b0"/><circle cx="-1.86" cy="2.33" r="0.79" fill="#c4b9b0"/><circle cx="1.86" cy="2.33" r="0.79" fill="#c4b9b0"/></g></g><g transform="translate(171.6 173.7) rotate(0)"><rect x="-0.92" y="-5.37" width="1.85" height="1.76" rx="0.34" fill="#86ad84"/><clipPath id="o84"><circle r="4.19"/></clipPath><circle r="4.19" fill="#a9cba6"/><g clip-path="url(#o84)"><circle r="2.10" fill="none" stroke="#d4e6cc" stroke-width="0.92"/></g></g><g transform="translate(181.8 171.8) rotate(20)"><rect x="-1.33" y="-7.75" width="2.67" height="2.54" rx="0.48" fill="#e58d68"/><clipPath id="o85"><circle r="6.06"/></clipPath><circle r="6.06" fill="#f1a07c"/><g clip-path="url(#o85)"><path d="M-4.04 -6.06V6.06" stroke="#fbe3cc" stroke-width="0.97" stroke-dasharray="1.33 0.73"/><path d="M-1.35 -6.06V6.06" stroke="#fbe3cc" stroke-width="0.97" stroke-dasharray="1.33 0.73"/><path d="M1.35 -6.06V6.06" stroke="#fbe3cc" stroke-width="0.97" stroke-dasharray="1.33 0.73"/><path d="M4.04 -6.06V6.06" stroke="#fbe3cc" stroke-width="0.97" stroke-dasharray="1.33 0.73"/></g></g><g transform="translate(147.8 183.0) rotate(0)"><rect x="-1.03" y="-5.97" width="2.05" height="1.96" rx="0.37" fill="#eaa58c"/><clipPath id="o86"><circle r="4.66"/></clipPath><circle r="4.66" fill="#f3c0a8"/><g clip-path="url(#o86)"><circle cx="-1.17" cy="-0.93" r="2.33" fill="#f8d5c4" opacity=".6"/></g></g><g transform="translate(154.6 178.1) rotate(0)"><rect x="-0.54" y="-3.13" width="1.08" height="1.03" rx="0.20" fill="#7d3a25"/><clipPath id="o87"><circle r="2.45"/></clipPath><circle r="2.45" fill="#98492f"/><g clip-path="url(#o87)"><path d="M-2.45 -0.93 L-1.63 -0.29 L-0.82 -0.93 L0.00 -0.29 L0.82 -0.93 L1.63 -0.29 L2.45 -0.93" fill="none" stroke="#f7e6d8" stroke-width="0.34" stroke-linejoin="round"/><path d="M-2.45 0.22 L-1.63 0.86 L-0.82 0.22 L0.00 0.86 L0.82 0.22 L1.63 0.86 L2.45 0.22" fill="none" stroke="#f7e6d8" stroke-width="0.34" stroke-linejoin="round"/></g></g><g transform="translate(171.6 183.0) rotate(0)"><rect x="-0.97" y="-5.67" width="1.95" height="1.86" rx="0.35" fill="#b97b45"/><clipPath id="o88"><circle r="4.43"/></clipPath><circle r="4.43" fill="#f7e7cf"/><g clip-path="url(#o88)"><rect x="-4.43" y="-4.43" width="8.85" height="2.43" fill="#c98f58"/><rect x="-4.43" y="2.21" width="8.85" height="2.21" fill="#c98f58" opacity=".8"/></g></g><g transform="translate(156.6 189.3) rotate(0)"><rect x="-1.20" y="-7.01" width="2.41" height="2.30" rx="0.44" fill="#e0957a"/><clipPath id="o89"><circle r="5.48"/></clipPath><circle r="5.48" fill="#f2b094"/><g clip-path="url(#o89)"><circle cx="-1.10" cy="-1.10" r="2.46" fill="#f8d0bc" opacity=".5"/></g></g><g transform="translate(165.3 188.3) rotate(0)"><rect x="-0.85" y="-4.92" width="1.69" height="1.61" rx="0.31" fill="#8fc0d2"/><clipPath id="o90"><circle r="3.84"/></clipPath><circle r="3.84" fill="#a9d3e2"/><g clip-path="url(#o90)"><path d="M-4.84 -3.84Q-2.92 0 -4.84 3.84" fill="none" stroke="#e6f3f6" stroke-width="0.42"/><path d="M-3.23 -3.84Q-1.31 0 -3.23 3.84" fill="none" stroke="#e6f3f6" stroke-width="0.42"/><path d="M-1.61 -3.84Q0.31 0 -1.61 3.84" fill="none" stroke="#e6f3f6" stroke-width="0.42"/><path d="M0.00 -3.84Q1.92 0 0.00 3.84" fill="none" stroke="#e6f3f6" stroke-width="0.42"/><path d="M1.61 -3.84Q3.54 0 1.61 3.84" fill="none" stroke="#e6f3f6" stroke-width="0.42"/><path d="M3.23 -3.84Q5.15 0 3.23 3.84" fill="none" stroke="#e6f3f6" stroke-width="0.42"/><path d="M4.84 -3.84Q6.77 0 4.84 3.84" fill="none" stroke="#e6f3f6" stroke-width="0.42"/></g></g><g transform="translate(179.9 185.9) rotate(0)"><rect x="-0.85" y="-4.92" width="1.69" height="1.61" rx="0.31" fill="#86ad84"/><clipPath id="o91"><circle r="3.84"/></clipPath><circle r="3.84" fill="#a9cba6"/><g clip-path="url(#o91)"><circle r="1.92" fill="none" stroke="#d4e6cc" stroke-width="0.85"/></g></g><g transform="translate(173.1 191.2) rotate(0)"><rect x="-0.67" y="-3.88" width="1.33" height="1.27" rx="0.24" fill="#e9b070"/><clipPath id="o92"><circle r="3.03"/></clipPath><circle r="3.03" fill="#f6c98f"/><g clip-path="url(#o92)"><ellipse cx="-1.27" cy="0" rx="0.36" ry="2.57" fill="none" stroke="#fbe6c5" stroke-width="0.30"/><ellipse cx="0.00" cy="0" rx="0.36" ry="2.57" fill="none" stroke="#fbe6c5" stroke-width="0.30"/><ellipse cx="1.27" cy="0" rx="0.36" ry="2.57" fill="none" stroke="#fbe6c5" stroke-width="0.30"/></g></g><g transform="translate(146.4 195.6) rotate(0)"><rect x="-0.97" y="-5.67" width="1.95" height="1.86" rx="0.35" fill="#86ad84"/><clipPath id="o93"><circle r="4.43"/></clipPath><circle r="4.43" fill="#a9cba6"/><g clip-path="url(#o93)"><circle r="2.21" fill="none" stroke="#d4e6cc" stroke-width="0.97"/></g></g><g transform="translate(155.6 198.5) rotate(0)"><rect x="-0.69" y="-4.03" width="1.38" height="1.32" rx="0.25" fill="#c9bfb6"/><clipPath id="o94"><circle r="3.15"/></clipPath><circle r="3.15" fill="#efe8e0"/><g clip-path="url(#o94)"><circle cx="-1.26" cy="-1.10" r="0.53" fill="#c4b9b0"/><circle cx="1.26" cy="-1.10" r="0.53" fill="#c4b9b0"/><circle cx="0.00" cy="0.31" r="0.53" fill="#c4b9b0"/><circle cx="-1.26" cy="1.57" r="0.53" fill="#c4b9b0"/><circle cx="1.26" cy="1.57" r="0.53" fill="#c4b9b0"/></g></g><g transform="translate(163.4 195.1) rotate(0)"><rect x="-0.67" y="-3.88" width="1.33" height="1.27" rx="0.24" fill="#86ad84"/><clipPath id="o95"><circle r="3.03"/></clipPath><circle r="3.03" fill="#a9cba6"/><g clip-path="url(#o95)"><circle r="1.51" fill="none" stroke="#d4e6cc" stroke-width="0.67"/></g></g><g transform="translate(180.8 193.6) rotate(0)"><rect x="-0.74" y="-4.32" width="1.49" height="1.42" rx="0.27" fill="#c9bfb6"/><clipPath id="o96"><circle r="3.38"/></clipPath><circle r="3.38" fill="#efe8e0"/><g clip-path="url(#o96)"><circle cx="-1.35" cy="-1.18" r="0.57" fill="#c4b9b0"/><circle cx="1.35" cy="-1.18" r="0.57" fill="#c4b9b0"/><circle cx="0.00" cy="0.34" r="0.57" fill="#c4b9b0"/><circle cx="-1.35" cy="1.69" r="0.57" fill="#c4b9b0"/><circle cx="1.35" cy="1.69" r="0.57" fill="#c4b9b0"/></g></g><g transform="translate(172.6 199.5) rotate(25)"><rect x="-1.10" y="-6.41" width="2.20" height="2.10" rx="0.40" fill="#7d3a25"/><clipPath id="o97"><circle r="5.01"/></clipPath><circle r="5.01" fill="#98492f"/><g clip-path="url(#o97)"><path d="M-5.01 -1.90 L-3.34 -0.60 L-1.67 -1.90 L0.00 -0.60 L1.67 -1.90 L3.34 -0.60 L5.01 -1.90" fill="none" stroke="#f7e6d8" stroke-width="0.70" stroke-linejoin="round"/><path d="M-5.01 0.45 L-3.34 1.75 L-1.67 0.45 L0.00 1.75 L1.67 0.45 L3.34 1.75 L5.01 0.45" fill="none" stroke="#f7e6d8" stroke-width="0.70" stroke-linejoin="round"/></g></g><g transform="translate(163.9 201.9) rotate(0)"><rect x="-0.92" y="-5.37" width="1.85" height="1.76" rx="0.34" fill="#eaa58c"/><clipPath id="o98"><circle r="4.19"/></clipPath><circle r="4.19" fill="#f3c0a8"/><g clip-path="url(#o98)"><circle cx="-1.05" cy="-0.84" r="2.10" fill="#f8d5c4" opacity=".6"/></g></g><g transform="translate(182.8 203.8) rotate(0)"><rect x="-0.97" y="-5.67" width="1.95" height="1.86" rx="0.35" fill="#8fc0d2"/><clipPath id="o99"><circle r="4.43"/></clipPath><circle r="4.43" fill="#a9d3e2"/><g clip-path="url(#o99)"><path d="M-5.58 -4.43Q-3.36 0 -5.58 4.43" fill="none" stroke="#e6f3f6" stroke-width="0.49"/><path d="M-3.72 -4.43Q-1.51 0 -3.72 4.43" fill="none" stroke="#e6f3f6" stroke-width="0.49"/><path d="M-1.86 -4.43Q0.35 0 -1.86 4.43" fill="none" stroke="#e6f3f6" stroke-width="0.49"/><path d="M0.00 -4.43Q2.21 0 0.00 4.43" fill="none" stroke="#e6f3f6" stroke-width="0.49"/><path d="M1.86 -4.43Q4.07 0 1.86 4.43" fill="none" stroke="#e6f3f6" stroke-width="0.49"/><path d="M3.72 -4.43Q5.93 0 3.72 4.43" fill="none" stroke="#e6f3f6" stroke-width="0.49"/><path d="M5.58 -4.43Q7.79 0 5.58 4.43" fill="none" stroke="#e6f3f6" stroke-width="0.49"/></g></g><g transform="translate(151.2 206.3) rotate(0)"><rect x="-1.10" y="-6.41" width="2.20" height="2.10" rx="0.40" fill="#b97b45"/><clipPath id="o100"><circle r="5.01"/></clipPath><circle r="5.01" fill="#f7e7cf"/><g clip-path="url(#o100)"><rect x="-5.01" y="-5.01" width="10.02" height="2.76" fill="#c98f58"/><rect x="-5.01" y="2.50" width="10.02" height="2.50" fill="#c98f58" opacity=".8"/></g></g><g transform="translate(143.0 203.8) rotate(0)"><rect x="-0.49" y="-2.83" width="0.97" height="0.93" rx="0.18" fill="#8fc0d2"/><clipPath id="o101"><circle r="2.21"/></clipPath><circle r="2.21" fill="#a9d3e2"/><g clip-path="url(#o101)"><path d="M-2.79 -2.21Q-1.68 0 -2.79 2.21" fill="none" stroke="#e6f3f6" stroke-width="0.24"/><path d="M-1.86 -2.21Q-0.75 0 -1.86 2.21" fill="none" stroke="#e6f3f6" stroke-width="0.24"/><path d="M-0.93 -2.21Q0.18 0 -0.93 2.21" fill="none" stroke="#e6f3f6" stroke-width="0.24"/><path d="M0.00 -2.21Q1.11 0 0.00 2.21" fill="none" stroke="#e6f3f6" stroke-width="0.24"/><path d="M0.93 -2.21Q2.04 0 0.93 2.21" fill="none" stroke="#e6f3f6" stroke-width="0.24"/><path d="M1.86 -2.21Q2.97 0 1.86 2.21" fill="none" stroke="#e6f3f6" stroke-width="0.24"/><path d="M2.79 -2.21Q3.90 0 2.79 2.21" fill="none" stroke="#e6f3f6" stroke-width="0.24"/></g></g><g transform="translate(174.1 207.7) rotate(0)"><rect x="-0.72" y="-4.18" width="1.44" height="1.37" rx="0.26" fill="#eaa58c"/><clipPath id="o102"><circle r="3.26"/></clipPath><circle r="3.26" fill="#f3c0a8"/><g clip-path="url(#o102)"><circle cx="-0.82" cy="-0.65" r="1.63" fill="#f8d5c4" opacity=".6"/></g></g><g transform="translate(185.9 203.8) rotate(0)"><rect x="-0.49" y="-2.83" width="0.97" height="0.93" rx="0.18" fill="#8fc0d2"/><clipPath id="o103"><circle r="2.21"/></clipPath><circle r="2.21" fill="#a9d3e2"/><g clip-path="url(#o103)"><path d="M-2.79 -2.21Q-1.68 0 -2.79 2.21" fill="none" stroke="#e6f3f6" stroke-width="0.24"/><path d="M-1.86 -2.21Q-0.75 0 -1.86 2.21" fill="none" stroke="#e6f3f6" stroke-width="0.24"/><path d="M-0.93 -2.21Q0.18 0 -0.93 2.21" fill="none" stroke="#e6f3f6" stroke-width="0.24"/><path d="M0.00 -2.21Q1.11 0 0.00 2.21" fill="none" stroke="#e6f3f6" stroke-width="0.24"/><path d="M0.93 -2.21Q2.04 0 0.93 2.21" fill="none" stroke="#e6f3f6" stroke-width="0.24"/><path d="M1.86 -2.21Q2.97 0 1.86 2.21" fill="none" stroke="#e6f3f6" stroke-width="0.24"/><path d="M2.79 -2.21Q3.90 0 2.79 2.21" fill="none" stroke="#e6f3f6" stroke-width="0.24"/></g></g><g transform="translate(96.0 214.7) rotate(20)"><rect x="-1.33" y="-7.75" width="2.67" height="2.54" rx="0.48" fill="#e58d68"/><clipPath id="o104"><circle r="6.06"/></clipPath><circle r="6.06" fill="#f1a07c"/><g clip-path="url(#o104)"><path d="M-4.04 -6.06V6.06" stroke="#fbe3cc" stroke-width="0.97" stroke-dasharray="1.33 0.73"/><path d="M-1.35 -6.06V6.06" stroke="#fbe3cc" stroke-width="0.97" stroke-dasharray="1.33 0.73"/><path d="M1.35 -6.06V6.06" stroke="#fbe3cc" stroke-width="0.97" stroke-dasharray="1.33 0.73"/><path d="M4.04 -6.06V6.06" stroke="#fbe3cc" stroke-width="0.97" stroke-dasharray="1.33 0.73"/></g></g><g transform="translate(106.9 217.1) rotate(0)"><rect x="-0.77" y="-4.47" width="1.54" height="1.47" rx="0.28" fill="#e9b070"/><clipPath id="o105"><circle r="3.50"/></clipPath><circle r="3.50" fill="#f6c98f"/><g clip-path="url(#o105)"><ellipse cx="-1.47" cy="0" rx="0.42" ry="2.97" fill="none" stroke="#fbe6c5" stroke-width="0.35"/><ellipse cx="0.00" cy="0" rx="0.42" ry="2.97" fill="none" stroke="#fbe6c5" stroke-width="0.35"/><ellipse cx="1.47" cy="0" rx="0.42" ry="2.97" fill="none" stroke="#fbe6c5" stroke-width="0.35"/></g></g><g transform="translate(114.6 215.2) rotate(0)"><rect x="-0.62" y="-3.58" width="1.23" height="1.17" rx="0.22" fill="#8fc0d2"/><clipPath id="o106"><circle r="2.80"/></clipPath><circle r="2.80" fill="#a9d3e2"/><g clip-path="url(#o106)"><path d="M-3.52 -2.80Q-2.13 0 -3.52 2.80" fill="none" stroke="#e6f3f6" stroke-width="0.31"/><path d="M-2.35 -2.80Q-0.95 0 -2.35 2.80" fill="none" stroke="#e6f3f6" stroke-width="0.31"/><path d="M-1.17 -2.80Q0.22 0 -1.17 2.80" fill="none" stroke="#e6f3f6" stroke-width="0.31"/><path d="M0.00 -2.80Q1.40 0 0.00 2.80" fill="none" stroke="#e6f3f6" stroke-width="0.31"/><path d="M1.17 -2.80Q2.57 0 1.17 2.80" fill="none" stroke="#e6f3f6" stroke-width="0.31"/><path d="M2.35 -2.80Q3.75 0 2.35 2.80" fill="none" stroke="#e6f3f6" stroke-width="0.31"/><path d="M3.52 -2.80Q4.92 0 3.52 2.80" fill="none" stroke="#e6f3f6" stroke-width="0.31"/></g></g><g transform="translate(120.5 221.0) rotate(0)"><rect x="-1.03" y="-5.97" width="2.05" height="1.96" rx="0.37" fill="#c9bfb6"/><clipPath id="o107"><circle r="4.66"/></clipPath><circle r="4.66" fill="#efe8e0"/><g clip-path="url(#o107)"><circle cx="-1.86" cy="-1.63" r="0.79" fill="#c4b9b0"/><circle cx="1.86" cy="-1.63" r="0.79" fill="#c4b9b0"/><circle cx="0.00" cy="0.47" r="0.79" fill="#c4b9b0"/><circle cx="-1.86" cy="2.33" r="0.79" fill="#c4b9b0"/><circle cx="1.86" cy="2.33" r="0.79" fill="#c4b9b0"/></g></g><g transform="translate(128.7 216.6) rotate(0)"><rect x="-0.92" y="-5.37" width="1.85" height="1.76" rx="0.34" fill="#86ad84"/><clipPath id="o108"><circle r="4.19"/></clipPath><circle r="4.19" fill="#a9cba6"/><g clip-path="url(#o108)"><circle r="2.10" fill="none" stroke="#d4e6cc" stroke-width="0.92"/></g></g><g transform="translate(138.9 214.7) rotate(20)"><rect x="-1.33" y="-7.75" width="2.67" height="2.54" rx="0.48" fill="#e58d68"/><clipPath id="o109"><circle r="6.06"/></clipPath><circle r="6.06" fill="#f1a07c"/><g clip-path="url(#o109)"><path d="M-4.04 -6.06V6.06" stroke="#fbe3cc" stroke-width="0.97" stroke-dasharray="1.33 0.73"/><path d="M-1.35 -6.06V6.06" stroke="#fbe3cc" stroke-width="0.97" stroke-dasharray="1.33 0.73"/><path d="M1.35 -6.06V6.06" stroke="#fbe3cc" stroke-width="0.97" stroke-dasharray="1.33 0.73"/><path d="M4.04 -6.06V6.06" stroke="#fbe3cc" stroke-width="0.97" stroke-dasharray="1.33 0.73"/></g></g><g transform="translate(104.9 225.9) rotate(0)"><rect x="-1.03" y="-5.97" width="2.05" height="1.96" rx="0.37" fill="#eaa58c"/><clipPath id="o110"><circle r="4.66"/></clipPath><circle r="4.66" fill="#f3c0a8"/><g clip-path="url(#o110)"><circle cx="-1.17" cy="-0.93" r="2.33" fill="#f8d5c4" opacity=".6"/></g></g><g transform="translate(111.7 221.0) rotate(0)"><rect x="-0.54" y="-3.13" width="1.08" height="1.03" rx="0.20" fill="#7d3a25"/><clipPath id="o111"><circle r="2.45"/></clipPath><circle r="2.45" fill="#98492f"/><g clip-path="url(#o111)"><path d="M-2.45 -0.93 L-1.63 -0.29 L-0.82 -0.93 L0.00 -0.29 L0.82 -0.93 L1.63 -0.29 L2.45 -0.93" fill="none" stroke="#f7e6d8" stroke-width="0.34" stroke-linejoin="round"/><path d="M-2.45 0.22 L-1.63 0.86 L-0.82 0.22 L0.00 0.86 L0.82 0.22 L1.63 0.86 L2.45 0.22" fill="none" stroke="#f7e6d8" stroke-width="0.34" stroke-linejoin="round"/></g></g><g transform="translate(128.7 225.9) rotate(0)"><rect x="-0.97" y="-5.67" width="1.95" height="1.86" rx="0.35" fill="#b97b45"/><clipPath id="o112"><circle r="4.43"/></clipPath><circle r="4.43" fill="#f7e7cf"/><g clip-path="url(#o112)"><rect x="-4.43" y="-4.43" width="8.85" height="2.43" fill="#c98f58"/><rect x="-4.43" y="2.21" width="8.85" height="2.21" fill="#c98f58" opacity=".8"/></g></g><g transform="translate(113.7 232.2) rotate(0)"><rect x="-1.20" y="-7.01" width="2.41" height="2.30" rx="0.44" fill="#e0957a"/><clipPath id="o113"><circle r="5.48"/></clipPath><circle r="5.48" fill="#f2b094"/><g clip-path="url(#o113)"><circle cx="-1.10" cy="-1.10" r="2.46" fill="#f8d0bc" opacity=".5"/></g></g><g transform="translate(122.4 231.2) rotate(0)"><rect x="-0.85" y="-4.92" width="1.69" height="1.61" rx="0.31" fill="#8fc0d2"/><clipPath id="o114"><circle r="3.84"/></clipPath><circle r="3.84" fill="#a9d3e2"/><g clip-path="url(#o114)"><path d="M-4.84 -3.84Q-2.92 0 -4.84 3.84" fill="none" stroke="#e6f3f6" stroke-width="0.42"/><path d="M-3.23 -3.84Q-1.31 0 -3.23 3.84" fill="none" stroke="#e6f3f6" stroke-width="0.42"/><path d="M-1.61 -3.84Q0.31 0 -1.61 3.84" fill="none" stroke="#e6f3f6" stroke-width="0.42"/><path d="M0.00 -3.84Q1.92 0 0.00 3.84" fill="none" stroke="#e6f3f6" stroke-width="0.42"/><path d="M1.61 -3.84Q3.54 0 1.61 3.84" fill="none" stroke="#e6f3f6" stroke-width="0.42"/><path d="M3.23 -3.84Q5.15 0 3.23 3.84" fill="none" stroke="#e6f3f6" stroke-width="0.42"/><path d="M4.84 -3.84Q6.77 0 4.84 3.84" fill="none" stroke="#e6f3f6" stroke-width="0.42"/></g></g><g transform="translate(137.0 228.8) rotate(0)"><rect x="-0.85" y="-4.92" width="1.69" height="1.61" rx="0.31" fill="#86ad84"/><clipPath id="o115"><circle r="3.84"/></clipPath><circle r="3.84" fill="#a9cba6"/><g clip-path="url(#o115)"><circle r="1.92" fill="none" stroke="#d4e6cc" stroke-width="0.85"/></g></g><g transform="translate(149.8 217.1) rotate(0)"><rect x="-0.77" y="-4.47" width="1.54" height="1.47" rx="0.28" fill="#e9b070"/><clipPath id="o116"><circle r="3.50"/></clipPath><circle r="3.50" fill="#f6c98f"/><g clip-path="url(#o116)"><ellipse cx="-1.47" cy="0" rx="0.42" ry="2.97" fill="none" stroke="#fbe6c5" stroke-width="0.35"/><ellipse cx="0.00" cy="0" rx="0.42" ry="2.97" fill="none" stroke="#fbe6c5" stroke-width="0.35"/><ellipse cx="1.47" cy="0" rx="0.42" ry="2.97" fill="none" stroke="#fbe6c5" stroke-width="0.35"/></g></g><g transform="translate(157.5 215.2) rotate(0)"><rect x="-0.62" y="-3.58" width="1.23" height="1.17" rx="0.22" fill="#8fc0d2"/><clipPath id="o117"><circle r="2.80"/></clipPath><circle r="2.80" fill="#a9d3e2"/><g clip-path="url(#o117)"><path d="M-3.52 -2.80Q-2.13 0 -3.52 2.80" fill="none" stroke="#e6f3f6" stroke-width="0.31"/><path d="M-2.35 -2.80Q-0.95 0 -2.35 2.80" fill="none" stroke="#e6f3f6" stroke-width="0.31"/><path d="M-1.17 -2.80Q0.22 0 -1.17 2.80" fill="none" stroke="#e6f3f6" stroke-width="0.31"/><path d="M0.00 -2.80Q1.40 0 0.00 2.80" fill="none" stroke="#e6f3f6" stroke-width="0.31"/><path d="M1.17 -2.80Q2.57 0 1.17 2.80" fill="none" stroke="#e6f3f6" stroke-width="0.31"/><path d="M2.35 -2.80Q3.75 0 2.35 2.80" fill="none" stroke="#e6f3f6" stroke-width="0.31"/><path d="M3.52 -2.80Q4.92 0 3.52 2.80" fill="none" stroke="#e6f3f6" stroke-width="0.31"/></g></g><g transform="translate(163.4 221.0) rotate(0)"><rect x="-1.03" y="-5.97" width="2.05" height="1.96" rx="0.37" fill="#c9bfb6"/><clipPath id="o118"><circle r="4.66"/></clipPath><circle r="4.66" fill="#efe8e0"/><g clip-path="url(#o118)"><circle cx="-1.86" cy="-1.63" r="0.79" fill="#c4b9b0"/><circle cx="1.86" cy="-1.63" r="0.79" fill="#c4b9b0"/><circle cx="0.00" cy="0.47" r="0.79" fill="#c4b9b0"/><circle cx="-1.86" cy="2.33" r="0.79" fill="#c4b9b0"/><circle cx="1.86" cy="2.33" r="0.79" fill="#c4b9b0"/></g></g><g transform="translate(171.6 216.6) rotate(0)"><rect x="-0.92" y="-5.37" width="1.85" height="1.76" rx="0.34" fill="#86ad84"/><clipPath id="o119"><circle r="4.19"/></clipPath><circle r="4.19" fill="#a9cba6"/><g clip-path="url(#o119)"><circle r="2.10" fill="none" stroke="#d4e6cc" stroke-width="0.92"/></g></g><g transform="translate(181.8 214.7) rotate(20)"><rect x="-1.33" y="-7.75" width="2.67" height="2.54" rx="0.48" fill="#e58d68"/><clipPath id="o120"><circle r="6.06"/></clipPath><circle r="6.06" fill="#f1a07c"/><g clip-path="url(#o120)"><path d="M-4.04 -6.06V6.06" stroke="#fbe3cc" stroke-width="0.97" stroke-dasharray="1.33 0.73"/><path d="M-1.35 -6.06V6.06" stroke="#fbe3cc" stroke-width="0.97" stroke-dasharray="1.33 0.73"/><path d="M1.35 -6.06V6.06" stroke="#fbe3cc" stroke-width="0.97" stroke-dasharray="1.33 0.73"/><path d="M4.04 -6.06V6.06" stroke="#fbe3cc" stroke-width="0.97" stroke-dasharray="1.33 0.73"/></g></g><g transform="translate(147.8 225.9) rotate(0)"><rect x="-1.03" y="-5.97" width="2.05" height="1.96" rx="0.37" fill="#eaa58c"/><clipPath id="o121"><circle r="4.66"/></clipPath><circle r="4.66" fill="#f3c0a8"/><g clip-path="url(#o121)"><circle cx="-1.17" cy="-0.93" r="2.33" fill="#f8d5c4" opacity=".6"/></g></g><g transform="translate(154.6 221.0) rotate(0)"><rect x="-0.54" y="-3.13" width="1.08" height="1.03" rx="0.20" fill="#7d3a25"/><clipPath id="o122"><circle r="2.45"/></clipPath><circle r="2.45" fill="#98492f"/><g clip-path="url(#o122)"><path d="M-2.45 -0.93 L-1.63 -0.29 L-0.82 -0.93 L0.00 -0.29 L0.82 -0.93 L1.63 -0.29 L2.45 -0.93" fill="none" stroke="#f7e6d8" stroke-width="0.34" stroke-linejoin="round"/><path d="M-2.45 0.22 L-1.63 0.86 L-0.82 0.22 L0.00 0.86 L0.82 0.22 L1.63 0.86 L2.45 0.22" fill="none" stroke="#f7e6d8" stroke-width="0.34" stroke-linejoin="round"/></g></g><g transform="translate(171.6 225.9) rotate(0)"><rect x="-0.97" y="-5.67" width="1.95" height="1.86" rx="0.35" fill="#b97b45"/><clipPath id="o123"><circle r="4.43"/></clipPath><circle r="4.43" fill="#f7e7cf"/><g clip-path="url(#o123)"><rect x="-4.43" y="-4.43" width="8.85" height="2.43" fill="#c98f58"/><rect x="-4.43" y="2.21" width="8.85" height="2.21" fill="#c98f58" opacity=".8"/></g></g><g transform="translate(156.6 232.2) rotate(0)"><rect x="-1.20" y="-7.01" width="2.41" height="2.30" rx="0.44" fill="#e0957a"/><clipPath id="o124"><circle r="5.48"/></clipPath><circle r="5.48" fill="#f2b094"/><g clip-path="url(#o124)"><circle cx="-1.10" cy="-1.10" r="2.46" fill="#f8d0bc" opacity=".5"/></g></g><g transform="translate(165.3 231.2) rotate(0)"><rect x="-0.85" y="-4.92" width="1.69" height="1.61" rx="0.31" fill="#8fc0d2"/><clipPath id="o125"><circle r="3.84"/></clipPath><circle r="3.84" fill="#a9d3e2"/><g clip-path="url(#o125)"><path d="M-4.84 -3.84Q-2.92 0 -4.84 3.84" fill="none" stroke="#e6f3f6" stroke-width="0.42"/><path d="M-3.23 -3.84Q-1.31 0 -3.23 3.84" fill="none" stroke="#e6f3f6" stroke-width="0.42"/><path d="M-1.61 -3.84Q0.31 0 -1.61 3.84" fill="none" stroke="#e6f3f6" stroke-width="0.42"/><path d="M0.00 -3.84Q1.92 0 0.00 3.84" fill="none" stroke="#e6f3f6" stroke-width="0.42"/><path d="M1.61 -3.84Q3.54 0 1.61 3.84" fill="none" stroke="#e6f3f6" stroke-width="0.42"/><path d="M3.23 -3.84Q5.15 0 3.23 3.84" fill="none" stroke="#e6f3f6" stroke-width="0.42"/><path d="M4.84 -3.84Q6.77 0 4.84 3.84" fill="none" stroke="#e6f3f6" stroke-width="0.42"/></g></g><g transform="translate(179.9 228.8) rotate(0)"><rect x="-0.85" y="-4.92" width="1.69" height="1.61" rx="0.31" fill="#86ad84"/><clipPath id="o126"><circle r="3.84"/></clipPath><circle r="3.84" fill="#a9cba6"/><g clip-path="url(#o126)"><circle r="1.92" fill="none" stroke="#d4e6cc" stroke-width="0.85"/></g></g></g>
<clipPath id="c2"><rect x="187.5" y="121.3" width="84.2" height="107.2" rx="0"/></clipPath><g clip-path="url(#c2)"><rect x="187.5" y="121.3" width="84.2" height="107.2" fill="#b5dce6"/><g fill="#3f6c78"><circle cx="197.0" cy="126.4" r="2.5"/><circle cx="209.9" cy="126.4" r="2.5"/><circle cx="222.8" cy="126.4" r="2.5"/><circle cx="235.7" cy="126.4" r="2.5"/><circle cx="248.6" cy="126.4" r="2.5"/><circle cx="261.5" cy="126.4" r="2.5"/><circle cx="197.0" cy="139.3" r="2.5"/><circle cx="209.9" cy="139.3" r="2.5"/><circle cx="222.8" cy="139.3" r="2.5"/><circle cx="235.7" cy="139.3" r="2.5"/><circle cx="248.6" cy="139.3" r="2.5"/><circle cx="261.5" cy="139.3" r="2.5"/><circle cx="197.0" cy="152.2" r="2.5"/><circle cx="209.9" cy="152.2" r="2.5"/><circle cx="222.8" cy="152.2" r="2.5"/><circle cx="235.7" cy="152.2" r="2.5"/><circle cx="248.6" cy="152.2" r="2.5"/><circle cx="261.5" cy="152.2" r="2.5"/><circle cx="197.0" cy="165.1" r="2.5"/><circle cx="209.9" cy="165.1" r="2.5"/><circle cx="222.8" cy="165.1" r="2.5"/><circle cx="235.7" cy="165.1" r="2.5"/><circle cx="248.6" cy="165.1" r="2.5"/><circle cx="261.5" cy="165.1" r="2.5"/><circle cx="197.0" cy="178.0" r="2.5"/><circle cx="209.9" cy="178.0" r="2.5"/><circle cx="222.8" cy="178.0" r="2.5"/><circle cx="235.7" cy="178.0" r="2.5"/><circle cx="248.6" cy="178.0" r="2.5"/><circle cx="261.5" cy="178.0" r="2.5"/><circle cx="197.0" cy="190.9" r="2.5"/><circle cx="209.9" cy="190.9" r="2.5"/><circle cx="222.8" cy="190.9" r="2.5"/><circle cx="235.7" cy="190.9" r="2.5"/><circle cx="248.6" cy="190.9" r="2.5"/><circle cx="261.5" cy="190.9" r="2.5"/><circle cx="197.0" cy="203.8" r="2.5"/><circle cx="209.9" cy="203.8" r="2.5"/><circle cx="222.8" cy="203.8" r="2.5"/><circle cx="235.7" cy="203.8" r="2.5"/><circle cx="248.6" cy="203.8" r="2.5"/><circle cx="261.5" cy="203.8" r="2.5"/><circle cx="197.0" cy="216.7" r="2.5"/><circle cx="209.9" cy="216.7" r="2.5"/><circle cx="222.8" cy="216.7" r="2.5"/><circle cx="235.7" cy="216.7" r="2.5"/><circle cx="248.6" cy="216.7" r="2.5"/><circle cx="261.5" cy="216.7" r="2.5"/><circle cx="197.0" cy="229.6" r="2.5"/><circle cx="209.9" cy="229.6" r="2.5"/><circle cx="222.8" cy="229.6" r="2.5"/><circle cx="235.7" cy="229.6" r="2.5"/><circle cx="248.6" cy="229.6" r="2.5"/><circle cx="261.5" cy="229.6" r="2.5"/><circle cx="190.6" cy="119.9" r="2.5"/><circle cx="203.4" cy="119.9" r="2.5"/><circle cx="216.3" cy="119.9" r="2.5"/><circle cx="229.2" cy="119.9" r="2.5"/><circle cx="242.2" cy="119.9" r="2.5"/><circle cx="255.1" cy="119.9" r="2.5"/><circle cx="267.9" cy="119.9" r="2.5"/><circle cx="190.6" cy="132.8" r="2.5"/><circle cx="203.4" cy="132.8" r="2.5"/><circle cx="216.3" cy="132.8" r="2.5"/><circle cx="229.2" cy="132.8" r="2.5"/><circle cx="242.2" cy="132.8" r="2.5"/><circle cx="255.1" cy="132.8" r="2.5"/><circle cx="267.9" cy="132.8" r="2.5"/><circle cx="190.6" cy="145.8" r="2.5"/><circle cx="203.4" cy="145.8" r="2.5"/><circle cx="216.3" cy="145.8" r="2.5"/><circle cx="229.2" cy="145.8" r="2.5"/><circle cx="242.2" cy="145.8" r="2.5"/><circle cx="255.1" cy="145.8" r="2.5"/><circle cx="267.9" cy="145.8" r="2.5"/><circle cx="190.6" cy="158.7" r="2.5"/><circle cx="203.4" cy="158.7" r="2.5"/><circle cx="216.3" cy="158.7" r="2.5"/><circle cx="229.2" cy="158.7" r="2.5"/><circle cx="242.2" cy="158.7" r="2.5"/><circle cx="255.1" cy="158.7" r="2.5"/><circle cx="267.9" cy="158.7" r="2.5"/><circle cx="190.6" cy="171.6" r="2.5"/><circle cx="203.4" cy="171.6" r="2.5"/><circle cx="216.3" cy="171.6" r="2.5"/><circle cx="229.2" cy="171.6" r="2.5"/><circle cx="242.2" cy="171.6" r="2.5"/><circle cx="255.1" cy="171.6" r="2.5"/><circle cx="267.9" cy="171.6" r="2.5"/><circle cx="190.6" cy="184.4" r="2.5"/><circle cx="203.4" cy="184.4" r="2.5"/><circle cx="216.3" cy="184.4" r="2.5"/><circle cx="229.2" cy="184.4" r="2.5"/><circle cx="242.2" cy="184.4" r="2.5"/><circle cx="255.1" cy="184.4" r="2.5"/><circle cx="267.9" cy="184.4" r="2.5"/><circle cx="190.6" cy="197.3" r="2.5"/><circle cx="203.4" cy="197.3" r="2.5"/><circle cx="216.3" cy="197.3" r="2.5"/><circle cx="229.2" cy="197.3" r="2.5"/><circle cx="242.2" cy="197.3" r="2.5"/><circle cx="255.1" cy="197.3" r="2.5"/><circle cx="267.9" cy="197.3" r="2.5"/><circle cx="190.6" cy="210.2" r="2.5"/><circle cx="203.4" cy="210.2" r="2.5"/><circle cx="216.3" cy="210.2" r="2.5"/><circle cx="229.2" cy="210.2" r="2.5"/><circle cx="242.2" cy="210.2" r="2.5"/><circle cx="255.1" cy="210.2" r="2.5"/><circle cx="267.9" cy="210.2" r="2.5"/><circle cx="190.6" cy="223.2" r="2.5"/><circle cx="203.4" cy="223.2" r="2.5"/><circle cx="216.3" cy="223.2" r="2.5"/><circle cx="229.2" cy="223.2" r="2.5"/><circle cx="242.2" cy="223.2" r="2.5"/><circle cx="255.1" cy="223.2" r="2.5"/><circle cx="267.9" cy="223.2" r="2.5"/></g></g>
<clipPath id="c3"><rect x="275.7" y="121.3" width="84.2" height="107.2" rx="0"/></clipPath><g clip-path="url(#c3)"><rect x="275.7" y="121.3" width="84.2" height="107.2" fill="#2f5d69"/><circle cx="295.7" cy="179.6" r="0.90" fill="#f6d9b0"/><circle cx="352.8" cy="172.1" r="0.90" fill="#8fb787"/><circle cx="281.2" cy="122.7" r="0.90" fill="#f6d9b0"/><circle cx="297.5" cy="146.4" r="0.90" fill="#8fb787"/><circle cx="315.3" cy="211.0" r="0.90" fill="#f6d9b0"/><circle cx="309.1" cy="213.6" r="0.90" fill="#e58d68"/><circle cx="329.2" cy="214.4" r="0.90" fill="#8fb787"/><circle cx="308.5" cy="122.9" r="0.90" fill="#e58d68"/><circle cx="289.1" cy="223.9" r="0.90" fill="#e58d68"/><circle cx="301.1" cy="124.6" r="0.90" fill="#f6d9b0"/><circle cx="315.5" cy="198.4" r="0.90" fill="#f6d9b0"/><circle cx="335.8" cy="220.0" r="0.90" fill="#f6d9b0"/><circle cx="337.0" cy="183.1" r="0.90" fill="#e58d68"/><circle cx="349.7" cy="131.7" r="0.90" fill="#e58d68"/><circle cx="317.4" cy="149.0" r="0.90" fill="#8fb787"/><circle cx="312.4" cy="188.5" r="0.90" fill="#f6d9b0"/><circle cx="311.2" cy="210.6" r="0.90" fill="#8fb787"/><circle cx="305.2" cy="184.0" r="0.90" fill="#8fb787"/><circle cx="295.3" cy="157.4" r="0.90" fill="#e58d68"/><circle cx="347.8" cy="227.5" r="0.90" fill="#8fb787"/><circle cx="334.3" cy="196.2" r="0.90" fill="#f6d9b0"/><circle cx="356.9" cy="218.3" r="0.90" fill="#8fb787"/><circle cx="284.5" cy="191.6" r="0.90" fill="#8fb787"/><circle cx="345.7" cy="182.8" r="0.90" fill="#f6d9b0"/><circle cx="286.2" cy="173.0" r="0.90" fill="#8fb787"/><circle cx="359.0" cy="130.8" r="0.90" fill="#e58d68"/><g transform="translate(287.7 123.6) rotate(30)"><rect x="-1.67" y="-9.74" width="3.35" height="3.20" rx="0.61" fill="#e58d68"/><clipPath id="o127"><circle r="7.61"/></clipPath><circle r="7.61" fill="#f1a07c"/><g clip-path="url(#o127)"><path d="M-5.07 -7.61V7.61" stroke="#fbe3cc" stroke-width="1.22" stroke-dasharray="1.67 0.91"/><path d="M-1.69 -7.61V7.61" stroke="#fbe3cc" stroke-width="1.22" stroke-dasharray="1.67 0.91"/><path d="M1.69 -7.61V7.61" stroke="#fbe3cc" stroke-width="1.22" stroke-dasharray="1.67 0.91"/><path d="M5.07 -7.61V7.61" stroke="#fbe3cc" stroke-width="1.22" stroke-dasharray="1.67 0.91"/></g></g><g transform="translate(308.1 130.8) rotate(10)"><rect x="-1.84" y="-10.71" width="3.68" height="3.52" rx="0.67" fill="#7fa878"/><clipPath id="o128"><circle r="8.37"/></clipPath><circle r="8.37" fill="#a9c79c"/><g clip-path="url(#o128)"><circle r="5.69" fill="none" stroke="#5f8a5c" stroke-width="1.67"/><circle r="3.01" fill="#e9efd9"/><circle r="1.42" fill="#5f8a5c"/></g></g><g transform="translate(325.1 127.0) rotate(-20)"><rect x="-1.51" y="-8.77" width="3.01" height="2.88" rx="0.55" fill="#a59b92"/><clipPath id="o129"><circle r="6.85"/></clipPath><circle r="6.85" fill="#bdb3aa"/><g clip-path="url(#o129)"><circle cx="-3.08" cy="-2.40" r="1.64" fill="#f1ece6"/><circle cx="2.05" cy="-3.08" r="1.64" fill="#f1ece6"/><circle cx="0.00" cy="0.34" r="1.64" fill="#f1ece6"/><circle cx="-3.42" cy="2.74" r="1.64" fill="#f1ece6"/><circle cx="3.42" cy="2.40" r="1.64" fill="#f1ece6"/></g></g><g transform="translate(338.2 123.6) rotate(0)"><rect x="-0.84" y="-4.87" width="1.67" height="1.60" rx="0.30" fill="#eaa58c"/><clipPath id="o130"><circle r="3.80"/></clipPath><circle r="3.80" fill="#f3c0a8"/><g clip-path="url(#o130)"><circle cx="-0.95" cy="-0.76" r="1.90" fill="#f8d5c4" opacity=".6"/></g></g><g transform="translate(344.3 138.3) rotate(20)"><rect x="-2.12" y="-12.34" width="4.24" height="4.05" rx="0.77" fill="#7d3a25"/><clipPath id="o131"><circle r="9.64"/></clipPath><circle r="9.64" fill="#98492f"/><g clip-path="url(#o131)"><path d="M-9.64 -3.66 L-6.43 -1.16 L-3.21 -3.66 L0.00 -1.16 L3.21 -3.66 L6.43 -1.16 L9.64 -3.66" fill="none" stroke="#f7e6d8" stroke-width="1.35" stroke-linejoin="round"/><path d="M-9.64 0.87 L-6.43 3.37 L-3.21 0.87 L0.00 3.37 L3.21 0.87 L6.43 3.37 L9.64 0.87" fill="none" stroke="#f7e6d8" stroke-width="1.35" stroke-linejoin="round"/></g></g><g transform="translate(292.2 136.0) rotate(-30)"><rect x="-1.39" y="-8.12" width="2.79" height="2.66" rx="0.51" fill="#a59b92"/><clipPath id="o132"><circle r="6.34"/></clipPath><circle r="6.34" fill="#bdb3aa"/><g clip-path="url(#o132)"><circle cx="-2.85" cy="-2.22" r="1.52" fill="#f1ece6"/><circle cx="1.90" cy="-2.85" r="1.52" fill="#f1ece6"/><circle cx="0.00" cy="0.32" r="1.52" fill="#f1ece6"/><circle cx="-3.17" cy="2.54" r="1.52" fill="#f1ece6"/><circle cx="3.17" cy="2.22" r="1.52" fill="#f1ece6"/></g></g><g transform="translate(300.2 151.9) rotate(0)"><rect x="-2.34" y="-13.63" width="4.69" height="4.47" rx="0.85" fill="#a87440"/><clipPath id="o133"><circle r="10.65"/></clipPath><circle r="10.65" fill="#c48c50"/><g clip-path="url(#o133)"><rect x="-10.65" y="-4.47" width="21.30" height="8.95" fill="#f8ecd2"/><circle cx="-8.88" cy="-2.13" r="0.75" fill="#c48c50"/><circle cx="-8.88" cy="2.13" r="0.75" fill="#c48c50"/><circle cx="-5.33" cy="-2.13" r="0.75" fill="#c48c50"/><circle cx="-5.33" cy="2.13" r="0.75" fill="#c48c50"/><circle cx="-1.78" cy="-2.13" r="0.75" fill="#c48c50"/><circle cx="-1.78" cy="2.13" r="0.75" fill="#c48c50"/><circle cx="1.78" cy="-2.13" r="0.75" fill="#c48c50"/><circle cx="1.78" cy="2.13" r="0.75" fill="#c48c50"/><circle cx="5.33" cy="-2.13" r="0.75" fill="#c48c50"/><circle cx="5.33" cy="2.13" r="0.75" fill="#c48c50"/><circle cx="8.88" cy="-2.13" r="0.75" fill="#c48c50"/><circle cx="8.88" cy="2.13" r="0.75" fill="#c48c50"/></g></g><g transform="translate(321.7 146.7) rotate(60)"><rect x="-2.01" y="-11.69" width="4.02" height="3.83" rx="0.73" fill="#8fc0d2"/><clipPath id="o134"><circle r="9.13"/></clipPath><circle r="9.13" fill="#a9d3e2"/><g clip-path="url(#o134)"><path d="M-11.50 -9.13Q-6.94 0 -11.50 9.13" fill="none" stroke="#e6f3f6" stroke-width="1.00"/><path d="M-7.67 -9.13Q-3.10 0 -7.67 9.13" fill="none" stroke="#e6f3f6" stroke-width="1.00"/><path d="M-3.83 -9.13Q0.73 0 -3.83 9.13" fill="none" stroke="#e6f3f6" stroke-width="1.00"/><path d="M0.00 -9.13Q4.57 0 0.00 9.13" fill="none" stroke="#e6f3f6" stroke-width="1.00"/><path d="M3.83 -9.13Q8.40 0 3.83 9.13" fill="none" stroke="#e6f3f6" stroke-width="1.00"/><path d="M7.67 -9.13Q12.23 0 7.67 9.13" fill="none" stroke="#e6f3f6" stroke-width="1.00"/><path d="M11.50 -9.13Q16.07 0 11.50 9.13" fill="none" stroke="#e6f3f6" stroke-width="1.00"/></g></g><g transform="translate(338.7 154.1) rotate(0)"><rect x="-1.56" y="-9.09" width="3.12" height="2.98" rx="0.57" fill="#eaa58c"/><clipPath id="o135"><circle r="7.10"/></clipPath><circle r="7.10" fill="#f3c0a8"/><g clip-path="url(#o135)"><circle cx="-1.78" cy="-1.42" r="3.55" fill="#f8d5c4" opacity=".6"/></g></g><g transform="translate(357.2 143.9) rotate(0)"><rect x="-1.39" y="-8.12" width="2.79" height="2.66" rx="0.51" fill="#eaa58c"/><clipPath id="o136"><circle r="6.34"/></clipPath><circle r="6.34" fill="#f3c0a8"/><g clip-path="url(#o136)"><circle cx="-1.59" cy="-1.27" r="3.17" fill="#f8d5c4" opacity=".6"/></g></g><g transform="translate(350.0 160.9) rotate(-60)"><rect x="-0.84" y="-4.87" width="1.67" height="1.60" rx="0.30" fill="#e9b070"/><clipPath id="o137"><circle r="3.80"/></clipPath><circle r="3.80" fill="#f6c98f"/><g clip-path="url(#o137)"><ellipse cx="-1.60" cy="0" rx="0.46" ry="3.23" fill="none" stroke="#fbe6c5" stroke-width="0.38"/><ellipse cx="0.00" cy="0" rx="0.46" ry="3.23" fill="none" stroke="#fbe6c5" stroke-width="0.38"/><ellipse cx="1.60" cy="0" rx="0.46" ry="3.23" fill="none" stroke="#fbe6c5" stroke-width="0.38"/></g></g><g transform="translate(323.9 168.4) rotate(75)"><rect x="-2.68" y="-15.58" width="5.36" height="5.11" rx="0.97" fill="#e58d68"/><clipPath id="o138"><circle r="12.17"/></clipPath><circle r="12.17" fill="#f1a07c"/><g clip-path="url(#o138)"><path d="M-8.12 -12.17V12.17" stroke="#fbe3cc" stroke-width="1.95" stroke-dasharray="2.68 1.46"/><path d="M-2.71 -12.17V12.17" stroke="#fbe3cc" stroke-width="1.95" stroke-dasharray="2.68 1.46"/><path d="M2.71 -12.17V12.17" stroke="#fbe3cc" stroke-width="1.95" stroke-dasharray="2.68 1.46"/><path d="M8.12 -12.17V12.17" stroke="#fbe3cc" stroke-width="1.95" stroke-dasharray="2.68 1.46"/></g></g><g transform="translate(303.6 171.1) rotate(30)"><rect x="-1.56" y="-9.09" width="3.12" height="2.98" rx="0.57" fill="#e9b070"/><clipPath id="o139"><circle r="7.10"/></clipPath><circle r="7.10" fill="#f6c98f"/><g clip-path="url(#o139)"><ellipse cx="-2.98" cy="0" rx="0.85" ry="6.04" fill="none" stroke="#fbe6c5" stroke-width="0.71"/><ellipse cx="0.00" cy="0" rx="0.85" ry="6.04" fill="none" stroke="#fbe6c5" stroke-width="0.71"/><ellipse cx="2.98" cy="0" rx="0.85" ry="6.04" fill="none" stroke="#fbe6c5" stroke-width="0.71"/></g></g><g transform="translate(287.7 167.7) rotate(0)"><rect x="-1.23" y="-7.14" width="2.46" height="2.34" rx="0.45" fill="#8fc0d2"/><clipPath id="o140"><circle r="5.58"/></clipPath><circle r="5.58" fill="#a9d3e2"/><g clip-path="url(#o140)"><path d="M-7.03 -5.58Q-4.24 0 -7.03 5.58" fill="none" stroke="#e6f3f6" stroke-width="0.61"/><path d="M-4.69 -5.58Q-1.90 0 -4.69 5.58" fill="none" stroke="#e6f3f6" stroke-width="0.61"/><path d="M-2.34 -5.58Q0.45 0 -2.34 5.58" fill="none" stroke="#e6f3f6" stroke-width="0.61"/><path d="M0.00 -5.58Q2.79 0 0.00 5.58" fill="none" stroke="#e6f3f6" stroke-width="0.61"/><path d="M2.34 -5.58Q5.13 0 2.34 5.58" fill="none" stroke="#e6f3f6" stroke-width="0.61"/><path d="M4.69 -5.58Q7.48 0 4.69 5.58" fill="none" stroke="#e6f3f6" stroke-width="0.61"/><path d="M7.03 -5.58Q9.82 0 7.03 5.58" fill="none" stroke="#e6f3f6" stroke-width="0.61"/></g></g><g transform="translate(343.6 171.1) rotate(70)"><rect x="-1.56" y="-9.09" width="3.12" height="2.98" rx="0.57" fill="#b8cfae"/><clipPath id="o141"><circle r="7.10"/></clipPath><circle r="7.10" fill="#eef2e4"/><g clip-path="url(#o141)"><circle cx="-3.20" cy="-2.49" r="1.42" fill="#8fb787"/><circle cx="2.13" cy="-3.20" r="1.42" fill="#8fb787"/><circle cx="0.00" cy="0.36" r="1.42" fill="#8fb787"/><circle cx="-3.55" cy="2.84" r="1.42" fill="#8fb787"/><circle cx="3.55" cy="2.49" r="1.42" fill="#8fb787"/><circle cx="0.00" cy="-4.97" r="1.42" fill="#8fb787"/><circle cx="0.00" cy="4.97" r="1.42" fill="#8fb787"/></g></g><g transform="translate(357.2 179.0) rotate(0)"><rect x="-1.39" y="-8.12" width="2.79" height="2.66" rx="0.51" fill="#a59b92"/><clipPath id="o142"><circle r="6.34"/></clipPath><circle r="6.34" fill="#bdb3aa"/><g clip-path="url(#o142)"><circle cx="-2.85" cy="-2.22" r="1.52" fill="#f1ece6"/><circle cx="1.90" cy="-2.85" r="1.52" fill="#f1ece6"/><circle cx="0.00" cy="0.32" r="1.52" fill="#f1ece6"/><circle cx="-3.17" cy="2.54" r="1.52" fill="#f1ece6"/><circle cx="3.17" cy="2.22" r="1.52" fill="#f1ece6"/></g></g><g transform="translate(292.2 183.6) rotate(-40)"><rect x="-1.56" y="-9.09" width="3.12" height="2.98" rx="0.57" fill="#7d3a25"/><clipPath id="o143"><circle r="7.10"/></clipPath><circle r="7.10" fill="#98492f"/><g clip-path="url(#o143)"><path d="M-7.10 -2.70 L-4.73 -0.85 L-2.37 -2.70 L0.00 -0.85 L2.37 -2.70 L4.73 -0.85 L7.10 -2.70" fill="none" stroke="#f7e6d8" stroke-width="0.99" stroke-linejoin="round"/><path d="M-7.10 0.64 L-4.73 2.49 L-2.37 0.64 L0.00 2.49 L2.37 0.64 L4.73 2.49 L7.10 0.64" fill="none" stroke="#f7e6d8" stroke-width="0.99" stroke-linejoin="round"/></g></g><g transform="translate(306.5 188.1) rotate(0)"><rect x="-1.79" y="-10.39" width="3.57" height="3.41" rx="0.65" fill="#eaa58c"/><clipPath id="o144"><circle r="8.12"/></clipPath><circle r="8.12" fill="#f3c0a8"/><g clip-path="url(#o144)"><circle cx="-2.03" cy="-1.62" r="4.06" fill="#f8d5c4" opacity=".6"/></g></g><g transform="translate(280.2 181.3) rotate(0)"><rect x="-1.39" y="-8.12" width="2.79" height="2.66" rx="0.51" fill="#a59b92"/><clipPath id="o145"><circle r="6.34"/></clipPath><circle r="6.34" fill="#bdb3aa"/><g clip-path="url(#o145)"><circle cx="-2.85" cy="-2.22" r="1.52" fill="#f1ece6"/><circle cx="1.90" cy="-2.85" r="1.52" fill="#f1ece6"/><circle cx="0.00" cy="0.32" r="1.52" fill="#f1ece6"/><circle cx="-3.17" cy="2.54" r="1.52" fill="#f1ece6"/><circle cx="3.17" cy="2.22" r="1.52" fill="#f1ece6"/></g></g><g transform="translate(343.6 189.2) rotate(0)"><rect x="-1.95" y="-11.36" width="3.91" height="3.73" rx="0.71" fill="#a87440"/><clipPath id="o146"><circle r="8.88"/></clipPath><circle r="8.88" fill="#c48c50"/><g clip-path="url(#o146)"><rect x="-8.88" y="-3.73" width="17.75" height="7.46" fill="#f8ecd2"/><circle cx="-7.40" cy="-1.78" r="0.62" fill="#c48c50"/><circle cx="-7.40" cy="1.78" r="0.62" fill="#c48c50"/><circle cx="-4.44" cy="-1.78" r="0.62" fill="#c48c50"/><circle cx="-4.44" cy="1.78" r="0.62" fill="#c48c50"/><circle cx="-1.48" cy="-1.78" r="0.62" fill="#c48c50"/><circle cx="-1.48" cy="1.78" r="0.62" fill="#c48c50"/><circle cx="1.48" cy="-1.78" r="0.62" fill="#c48c50"/><circle cx="1.48" cy="1.78" r="0.62" fill="#c48c50"/><circle cx="4.44" cy="-1.78" r="0.62" fill="#c48c50"/><circle cx="4.44" cy="1.78" r="0.62" fill="#c48c50"/><circle cx="7.40" cy="-1.78" r="0.62" fill="#c48c50"/><circle cx="7.40" cy="1.78" r="0.62" fill="#c48c50"/></g></g><g transform="translate(327.3 196.0) rotate(20)"><rect x="-1.67" y="-9.74" width="3.35" height="3.20" rx="0.61" fill="#7fa878"/><clipPath id="o147"><circle r="7.61"/></clipPath><circle r="7.61" fill="#a9c79c"/><g clip-path="url(#o147)"><circle r="5.17" fill="none" stroke="#5f8a5c" stroke-width="1.52"/><circle r="2.74" fill="#e9efd9"/><circle r="1.29" fill="#5f8a5c"/></g></g><g transform="translate(287.7 201.7) rotate(10)"><rect x="-2.23" y="-12.99" width="4.46" height="4.26" rx="0.81" fill="#e58d68"/><clipPath id="o148"><circle r="10.14"/></clipPath><circle r="10.14" fill="#f1a07c"/><g clip-path="url(#o148)"><path d="M-6.76 -10.14V10.14" stroke="#fbe3cc" stroke-width="1.62" stroke-dasharray="2.23 1.22"/><path d="M-2.25 -10.14V10.14" stroke="#fbe3cc" stroke-width="1.62" stroke-dasharray="2.23 1.22"/><path d="M2.25 -10.14V10.14" stroke="#fbe3cc" stroke-width="1.62" stroke-dasharray="2.23 1.22"/><path d="M6.76 -10.14V10.14" stroke="#fbe3cc" stroke-width="1.62" stroke-dasharray="2.23 1.22"/></g></g><g transform="translate(356.3 199.4) rotate(0)"><rect x="-1.56" y="-9.09" width="3.12" height="2.98" rx="0.57" fill="#8fc0d2"/><clipPath id="o149"><circle r="7.10"/></clipPath><circle r="7.10" fill="#a9d3e2"/><g clip-path="url(#o149)"><path d="M-8.95 -7.10Q-5.40 0 -8.95 7.10" fill="none" stroke="#e6f3f6" stroke-width="0.78"/><path d="M-5.97 -7.10Q-2.41 0 -5.97 7.10" fill="none" stroke="#e6f3f6" stroke-width="0.78"/><path d="M-2.98 -7.10Q0.57 0 -2.98 7.10" fill="none" stroke="#e6f3f6" stroke-width="0.78"/><path d="M0.00 -7.10Q3.55 0 0.00 7.10" fill="none" stroke="#e6f3f6" stroke-width="0.78"/><path d="M2.98 -7.10Q6.53 0 2.98 7.10" fill="none" stroke="#e6f3f6" stroke-width="0.78"/><path d="M5.97 -7.10Q9.52 0 5.97 7.10" fill="none" stroke="#e6f3f6" stroke-width="0.78"/><path d="M8.95 -7.10Q12.50 0 8.95 7.10" fill="none" stroke="#e6f3f6" stroke-width="0.78"/></g></g><g transform="translate(339.8 207.4) rotate(60)"><rect x="-1.23" y="-7.14" width="2.46" height="2.34" rx="0.45" fill="#e9b070"/><clipPath id="o150"><circle r="5.58"/></clipPath><circle r="5.58" fill="#f6c98f"/><g clip-path="url(#o150)"><ellipse cx="-2.34" cy="0" rx="0.67" ry="4.74" fill="none" stroke="#fbe6c5" stroke-width="0.56"/><ellipse cx="0.00" cy="0" rx="0.67" ry="4.74" fill="none" stroke="#fbe6c5" stroke-width="0.56"/><ellipse cx="2.34" cy="0" rx="0.67" ry="4.74" fill="none" stroke="#fbe6c5" stroke-width="0.56"/></g></g><g transform="translate(309.2 214.6) rotate(-20)"><rect x="-1.95" y="-11.36" width="3.91" height="3.73" rx="0.71" fill="#7fa878"/><clipPath id="o151"><circle r="8.88"/></clipPath><circle r="8.88" fill="#a9c79c"/><g clip-path="url(#o151)"><circle r="6.04" fill="none" stroke="#5f8a5c" stroke-width="1.78"/><circle r="3.20" fill="#e9efd9"/><circle r="1.51" fill="#5f8a5c"/></g></g><g transform="translate(325.1 211.9) rotate(-40)"><rect x="-1.56" y="-9.09" width="3.12" height="2.98" rx="0.57" fill="#a59b92"/><clipPath id="o152"><circle r="7.10"/></clipPath><circle r="7.10" fill="#bdb3aa"/><g clip-path="url(#o152)"><circle cx="-3.20" cy="-2.49" r="1.70" fill="#f1ece6"/><circle cx="2.13" cy="-3.20" r="1.70" fill="#f1ece6"/><circle cx="0.00" cy="0.36" r="1.70" fill="#f1ece6"/><circle cx="-3.55" cy="2.84" r="1.70" fill="#f1ece6"/><circle cx="3.55" cy="2.49" r="1.70" fill="#f1ece6"/></g></g><g transform="translate(343.2 219.8) rotate(10)"><rect x="-2.12" y="-12.34" width="4.24" height="4.05" rx="0.77" fill="#7d3a25"/><clipPath id="o153"><circle r="9.64"/></clipPath><circle r="9.64" fill="#98492f"/><g clip-path="url(#o153)"><path d="M-9.64 -3.66 L-6.43 -1.16 L-3.21 -3.66 L0.00 -1.16 L3.21 -3.66 L6.43 -1.16 L9.64 -3.66" fill="none" stroke="#f7e6d8" stroke-width="1.35" stroke-linejoin="round"/><path d="M-9.64 0.87 L-6.43 3.37 L-3.21 0.87 L0.00 3.37 L3.21 0.87 L6.43 3.37 L9.64 0.87" fill="none" stroke="#f7e6d8" stroke-width="1.35" stroke-linejoin="round"/></g></g><g transform="translate(292.2 220.9) rotate(0)"><rect x="-1.39" y="-8.12" width="2.79" height="2.66" rx="0.51" fill="#a59b92"/><clipPath id="o154"><circle r="6.34"/></clipPath><circle r="6.34" fill="#bdb3aa"/><g clip-path="url(#o154)"><circle cx="-2.85" cy="-2.22" r="1.52" fill="#f1ece6"/><circle cx="1.90" cy="-2.85" r="1.52" fill="#f1ece6"/><circle cx="0.00" cy="0.32" r="1.52" fill="#f1ece6"/><circle cx="-3.17" cy="2.54" r="1.52" fill="#f1ece6"/><circle cx="3.17" cy="2.22" r="1.52" fill="#f1ece6"/></g></g><g transform="translate(278.0 213.0) rotate(0)"><rect x="-1.12" y="-6.49" width="2.23" height="2.13" rx="0.41" fill="#b8cfae"/><clipPath id="o155"><circle r="5.07"/></clipPath><circle r="5.07" fill="#eef2e4"/><g clip-path="url(#o155)"><circle cx="-2.28" cy="-1.78" r="1.01" fill="#8fb787"/><circle cx="1.52" cy="-2.28" r="1.01" fill="#8fb787"/><circle cx="0.00" cy="0.25" r="1.01" fill="#8fb787"/><circle cx="-2.54" cy="2.03" r="1.01" fill="#8fb787"/><circle cx="2.54" cy="1.78" r="1.01" fill="#8fb787"/><circle cx="0.00" cy="-3.55" r="1.01" fill="#8fb787"/><circle cx="0.00" cy="3.55" r="1.01" fill="#8fb787"/></g></g><g transform="translate(320.5 227.3) rotate(0)"><rect x="-1.12" y="-6.49" width="2.23" height="2.13" rx="0.41" fill="#8fc0d2"/><clipPath id="o156"><circle r="5.07"/></clipPath><circle r="5.07" fill="#a9d3e2"/><g clip-path="url(#o156)"><path d="M-6.39 -5.07Q-3.86 0 -6.39 5.07" fill="none" stroke="#e6f3f6" stroke-width="0.56"/><path d="M-4.26 -5.07Q-1.72 0 -4.26 5.07" fill="none" stroke="#e6f3f6" stroke-width="0.56"/><path d="M-2.13 -5.07Q0.41 0 -2.13 5.07" fill="none" stroke="#e6f3f6" stroke-width="0.56"/><path d="M0.00 -5.07Q2.54 0 0.00 5.07" fill="none" stroke="#e6f3f6" stroke-width="0.56"/><path d="M2.13 -5.07Q4.67 0 2.13 5.07" fill="none" stroke="#e6f3f6" stroke-width="0.56"/><path d="M4.26 -5.07Q6.80 0 4.26 5.07" fill="none" stroke="#e6f3f6" stroke-width="0.56"/><path d="M6.39 -5.07Q8.93 0 6.39 5.07" fill="none" stroke="#e6f3f6" stroke-width="0.56"/></g></g><g transform="translate(358.6 214.6) rotate(0)"><rect x="-0.84" y="-4.87" width="1.67" height="1.60" rx="0.30" fill="#8fc0d2"/><clipPath id="o157"><circle r="3.80"/></clipPath><circle r="3.80" fill="#a9d3e2"/><g clip-path="url(#o157)"><path d="M-4.79 -3.80Q-2.89 0 -4.79 3.80" fill="none" stroke="#e6f3f6" stroke-width="0.42"/><path d="M-3.20 -3.80Q-1.29 0 -3.20 3.80" fill="none" stroke="#e6f3f6" stroke-width="0.42"/><path d="M-1.60 -3.80Q0.30 0 -1.60 3.80" fill="none" stroke="#e6f3f6" stroke-width="0.42"/><path d="M0.00 -3.80Q1.90 0 0.00 3.80" fill="none" stroke="#e6f3f6" stroke-width="0.42"/><path d="M1.60 -3.80Q3.50 0 1.60 3.80" fill="none" stroke="#e6f3f6" stroke-width="0.42"/><path d="M3.20 -3.80Q5.10 0 3.20 3.80" fill="none" stroke="#e6f3f6" stroke-width="0.42"/><path d="M4.79 -3.80Q6.70 0 4.79 3.80" fill="none" stroke="#e6f3f6" stroke-width="0.42"/></g></g><g transform="translate(278.6 123.6) rotate(0)"><rect x="-1.00" y="-5.84" width="2.01" height="1.92" rx="0.37" fill="#eaa58c"/><clipPath id="o158"><circle r="4.57"/></clipPath><circle r="4.57" fill="#f3c0a8"/><g clip-path="url(#o158)"><circle cx="-1.14" cy="-0.91" r="2.28" fill="#f8d5c4" opacity=".6"/></g></g><g transform="translate(277.5 153.0) rotate(0)"><rect x="-1.00" y="-5.84" width="2.01" height="1.92" rx="0.37" fill="#eaa58c"/><clipPath id="o159"><circle r="4.57"/></clipPath><circle r="4.57" fill="#f3c0a8"/><g clip-path="url(#o159)"><circle cx="-1.14" cy="-0.91" r="2.28" fill="#f8d5c4" opacity=".6"/></g></g><g transform="translate(357.9 227.7) rotate(0)"><rect x="-1.00" y="-5.84" width="2.01" height="1.92" rx="0.37" fill="#eaa58c"/><clipPath id="o160"><circle r="4.57"/></clipPath><circle r="4.57" fill="#f3c0a8"/><g clip-path="url(#o160)"><circle cx="-1.14" cy="-0.91" r="2.28" fill="#f8d5c4" opacity=".6"/></g></g></g>
<rect x="364.0" y="121.3" width="84.2" height="107.2" rx="0" fill="#6b8159"/>
<circle cx="403.1" cy="161.8" r="1.3" fill="#b2cba1"/>
<circle cx="377.1" cy="212.7" r="1.3" fill="#b2cba1"/>
<circle cx="366.5" cy="175.2" r="1.3" fill="#b2cba1"/>
<circle cx="438.0" cy="131.6" r="1.3" fill="#b2cba1"/>
<circle cx="410.5" cy="186.9" r="1.3" fill="#b2cba1"/>
<circle cx="369.3" cy="162.4" r="1.3" fill="#b2cba1"/>
<circle cx="422.4" cy="169.9" r="1.3" fill="#b2cba1"/>
<circle cx="424.2" cy="139.5" r="1.3" fill="#b2cba1"/>
<circle cx="385.1" cy="134.7" r="1.3" fill="#b2cba1"/>
<circle cx="406.6" cy="218.6" r="1.3" fill="#b2cba1"/>
<circle cx="413.4" cy="203.2" r="1.3" fill="#b2cba1"/>
<circle cx="396.8" cy="200.3" r="1.3" fill="#b2cba1"/>
<circle cx="374.2" cy="153.3" r="1.3" fill="#b2cba1"/>
<circle cx="399.8" cy="132.4" r="1.3" fill="#b2cba1"/>
<circle cx="387.4" cy="145.0" r="1.3" fill="#b2cba1"/>
<circle cx="388.6" cy="206.8" r="1.3" fill="#b2cba1"/>
<circle cx="396.4" cy="174.0" r="1.3" fill="#b2cba1"/>
<circle cx="413.9" cy="135.8" r="1.3" fill="#b2cba1"/>
<circle cx="382.3" cy="124.2" r="1.3" fill="#b2cba1"/>
<circle cx="367.4" cy="132.1" r="1.3" fill="#b2cba1"/>
<circle cx="387.5" cy="226.0" r="1.3" fill="#b2cba1"/>
<circle cx="422.6" cy="221.4" r="1.3" fill="#b2cba1"/>
<circle cx="385.0" cy="186.4" r="1.3" fill="#b2cba1"/>
<circle cx="420.1" cy="184.2" r="1.3" fill="#b2cba1"/>
<circle cx="412.8" cy="169.9" r="1.3" fill="#b2cba1"/>
<circle cx="398.3" cy="225.1" r="1.3" fill="#b2cba1"/>
<circle cx="412.1" cy="125.2" r="1.3" fill="#b2cba1"/>
<circle cx="430.1" cy="157.2" r="1.3" fill="#b2cba1"/>
<circle cx="400.8" cy="145.3" r="1.3" fill="#b2cba1"/>
<circle cx="373.1" cy="188.3" r="1.3" fill="#b2cba1"/>
<circle cx="368.0" cy="203.9" r="1.3" fill="#b2cba1"/>
<circle cx="430.8" cy="174.6" r="1.3" fill="#b2cba1"/>
<circle cx="370.1" cy="223.9" r="1.3" fill="#b2cba1"/>
<circle cx="445.1" cy="185.9" r="1.3" fill="#b2cba1"/>
<circle cx="382.7" cy="163.4" r="1.3" fill="#b2cba1"/>
<circle cx="421.8" cy="130.1" r="1.3" fill="#b2cba1"/>
<circle cx="423.4" cy="202.9" r="1.3" fill="#b2cba1"/>
<circle cx="395.9" cy="214.0" r="1.3" fill="#b2cba1"/>
<circle cx="371.5" cy="142.8" r="1.3" fill="#b2cba1"/>
<circle cx="445.1" cy="209.2" r="1.3" fill="#b2cba1"/>
<circle cx="441.2" cy="224.0" r="1.3" fill="#b2cba1"/>
<circle cx="395.6" cy="188.8" r="1.3" fill="#b2cba1"/>
<circle cx="414.5" cy="146.1" r="1.3" fill="#b2cba1"/>
<circle cx="381.1" cy="196.7" r="1.3" fill="#b2cba1"/>
<circle cx="416.2" cy="158.2" r="1.3" fill="#b2cba1"/>
<circle cx="435.4" cy="193.2" r="1.3" fill="#b2cba1"/>
<circle cx="437.3" cy="202.5" r="1.3" fill="#b2cba1"/>
<circle cx="443.7" cy="142.5" r="1.3" fill="#b2cba1"/>
<circle cx="443.0" cy="164.3" r="1.3" fill="#b2cba1"/>
<circle cx="366.5" cy="213.4" r="1.3" fill="#b2cba1"/>
<circle cx="405.5" cy="178.8" r="1.3" fill="#b2cba1"/>
<circle cx="428.8" cy="213.6" r="1.3" fill="#b2cba1"/>
<circle cx="393.1" cy="125.2" r="1.3" fill="#b2cba1"/>
<circle cx="443.2" cy="175.0" r="1.3" fill="#b2cba1"/>
<circle cx="435.5" cy="148.8" r="1.3" fill="#b2cba1"/>
<circle cx="392.6" cy="160.4" r="1.3" fill="#b2cba1"/>
<circle cx="415.3" cy="214.3" r="1.3" fill="#b2cba1"/>
<circle cx="381.6" cy="175.4" r="1.3" fill="#b2cba1"/>
<rect x="99.1" y="231.9" width="84.2" height="107.2" rx="0" fill="#6f9270"/><rect x="102.1" y="234.9" width="78.2" height="101.2" rx="0" fill="#fff"/>
<rect x="187.5" y="231.9" width="84.2" height="107.2" rx="0" fill="#1d585d"/><rect x="190.5" y="234.9" width="78.2" height="101.2" rx="0" fill="#fff"/>
<rect x="275.7" y="231.9" width="84.2" height="107.2" rx="0" fill="#fdebcf"/><rect x="278.7" y="234.9" width="78.2" height="101.2" rx="0" fill="#fff"/>
<rect x="364.0" y="231.9" width="84.2" height="107.2" rx="0" fill="#dcf2f1"/><rect x="367.0" y="234.9" width="78.2" height="101.2" rx="0" fill="#fff"/>
<clipPath id="c5"><rect x="99.1" y="342.7" width="84.2" height="53.4" rx="10.5"/></clipPath><g clip-path="url(#c5)"><rect x="99.1" y="342.7" width="84.2" height="53.4" rx="0" fill="#2f5c66"/>
<circle cx="114.3" cy="378.8" r="1.3" fill="#8fbcc0"/>
<circle cx="152.0" cy="368.4" r="1.3" fill="#8fbcc0"/>
<circle cx="165.9" cy="370.0" r="1.3" fill="#8fbcc0"/>
<circle cx="141.6" cy="356.4" r="1.3" fill="#8fbcc0"/>
<circle cx="101.4" cy="363.0" r="1.3" fill="#8fbcc0"/>
<circle cx="148.0" cy="348.1" r="1.3" fill="#8fbcc0"/>
<circle cx="164.8" cy="356.2" r="1.3" fill="#8fbcc0"/>
<circle cx="119.8" cy="346.8" r="1.3" fill="#8fbcc0"/>
<circle cx="181.1" cy="381.2" r="1.3" fill="#8fbcc0"/>
<circle cx="177.4" cy="362.9" r="1.3" fill="#8fbcc0"/>
<circle cx="111.1" cy="390.5" r="1.3" fill="#8fbcc0"/>
<circle cx="137.4" cy="372.0" r="1.3" fill="#8fbcc0"/>
<circle cx="161.6" cy="382.4" r="1.3" fill="#8fbcc0"/>
<circle cx="147.7" cy="380.8" r="1.3" fill="#8fbcc0"/>
<circle cx="110.9" cy="368.2" r="1.3" fill="#8fbcc0"/>
<circle cx="134.0" cy="362.7" r="1.3" fill="#8fbcc0"/>
<circle cx="103.3" cy="349.3" r="1.3" fill="#8fbcc0"/>
<circle cx="158.7" cy="393.7" r="1.3" fill="#8fbcc0"/>
<circle cx="129.0" cy="390.5" r="1.3" fill="#8fbcc0"/>
<circle cx="173.2" cy="392.0" r="1.3" fill="#8fbcc0"/>
<circle cx="168.2" cy="347.3" r="1.3" fill="#8fbcc0"/>
<circle cx="121.8" cy="359.0" r="1.3" fill="#8fbcc0"/>
<circle cx="103.0" cy="374.0" r="1.3" fill="#8fbcc0"/>
<circle cx="131.4" cy="379.8" r="1.3" fill="#8fbcc0"/>
<circle cx="180.4" cy="345.0" r="1.3" fill="#8fbcc0"/>
<circle cx="132.5" cy="351.9" r="1.3" fill="#8fbcc0"/>
<circle cx="155.5" cy="354.1" r="1.3" fill="#8fbcc0"/>
<circle cx="143.9" cy="389.6" r="1.3" fill="#8fbcc0"/>
<circle cx="111.0" cy="356.6" r="1.3" fill="#8fbcc0"/>
<circle cx="121.2" cy="368.7" r="1.3" fill="#8fbcc0"/></g>
<clipPath id="c6"><rect x="187.5" y="342.7" width="84.2" height="53.4" rx="10.5"/></clipPath><g clip-path="url(#c6)"><rect x="187.5" y="342.7" width="84.2" height="53.4" fill="#fbd0a4"/><circle cx="239.9" cy="382.3" r="0.90" fill="#f3b48e"/><circle cx="258.3" cy="384.1" r="0.90" fill="#f3b48e"/><circle cx="242.1" cy="390.8" r="0.90" fill="#f3b48e"/><circle cx="218.8" cy="389.1" r="0.90" fill="#fff2e0"/><circle cx="233.3" cy="373.3" r="0.90" fill="#f3b48e"/><circle cx="249.1" cy="364.5" r="0.90" fill="#f3b48e"/><circle cx="264.7" cy="383.6" r="0.90" fill="#f3b48e"/><circle cx="251.7" cy="346.5" r="0.90" fill="#fff2e0"/><circle cx="198.2" cy="342.8" r="0.90" fill="#f3b48e"/><circle cx="205.1" cy="354.2" r="0.90" fill="#f3b48e"/><circle cx="261.0" cy="358.1" r="0.90" fill="#f3b48e"/><circle cx="232.9" cy="378.9" r="0.90" fill="#f3b48e"/><circle cx="202.8" cy="394.4" r="0.90" fill="#f3b48e"/><circle cx="268.9" cy="390.4" r="0.90" fill="#fff2e0"/><g transform="translate(193.0 350.2) rotate(0)"><rect x="-1.79" y="-10.42" width="3.58" height="3.42" rx="0.65" fill="#7fa878"/><clipPath id="o161"><circle r="8.14"/></clipPath><circle r="8.14" fill="#a9c79c"/><g clip-path="url(#o161)"><circle r="5.54" fill="none" stroke="#5f8a5c" stroke-width="1.63"/><circle r="2.93" fill="#e9efd9"/><circle r="1.38" fill="#5f8a5c"/></g></g><g transform="translate(208.1 353.2) rotate(0)"><rect x="-1.28" y="-7.45" width="2.56" height="2.44" rx="0.47" fill="#a59b92"/><clipPath id="o162"><circle r="5.82"/></clipPath><circle r="5.82" fill="#bdb3aa"/><g clip-path="url(#o162)"><circle cx="-2.62" cy="-2.04" r="1.40" fill="#f1ece6"/><circle cx="1.75" cy="-2.62" r="1.40" fill="#f1ece6"/><circle cx="0.00" cy="0.29" r="1.40" fill="#f1ece6"/><circle cx="-2.91" cy="2.33" r="1.40" fill="#f1ece6"/><circle cx="2.91" cy="2.04" r="1.40" fill="#f1ece6"/></g></g><g transform="translate(223.3 347.6) rotate(0)"><rect x="-1.13" y="-6.55" width="2.25" height="2.15" rx="0.41" fill="#b8cfae"/><clipPath id="o163"><circle r="5.12"/></clipPath><circle r="5.12" fill="#eef2e4"/><g clip-path="url(#o163)"><circle cx="-2.30" cy="-1.79" r="1.02" fill="#8fb787"/><circle cx="1.54" cy="-2.30" r="1.02" fill="#8fb787"/><circle cx="0.00" cy="0.26" r="1.02" fill="#8fb787"/><circle cx="-2.56" cy="2.05" r="1.02" fill="#8fb787"/><circle cx="2.56" cy="1.79" r="1.02" fill="#8fb787"/><circle cx="0.00" cy="-3.58" r="1.02" fill="#8fb787"/><circle cx="0.00" cy="3.58" r="1.02" fill="#8fb787"/></g></g><g transform="translate(241.1 354.2) rotate(10)"><rect x="-2.15" y="-12.51" width="4.30" height="4.10" rx="0.78" fill="#7d3a25"/><clipPath id="o164"><circle r="9.77"/></clipPath><circle r="9.77" fill="#98492f"/><g clip-path="url(#o164)"><path d="M-9.77 -3.71 L-6.52 -1.17 L-3.26 -3.71 L0.00 -1.17 L3.26 -3.71 L6.52 -1.17 L9.77 -3.71" fill="none" stroke="#f7e6d8" stroke-width="1.37" stroke-linejoin="round"/><path d="M-9.77 0.88 L-6.52 3.42 L-3.26 0.88 L0.00 3.42 L3.26 0.88 L6.52 3.42 L9.77 0.88" fill="none" stroke="#f7e6d8" stroke-width="1.37" stroke-linejoin="round"/></g></g><g transform="translate(254.7 346.1) rotate(0)"><rect x="-1.13" y="-6.55" width="2.25" height="2.15" rx="0.41" fill="#a59b92"/><clipPath id="o165"><circle r="5.12"/></clipPath><circle r="5.12" fill="#bdb3aa"/><g clip-path="url(#o165)"><circle cx="-2.30" cy="-1.79" r="1.23" fill="#f1ece6"/><circle cx="1.54" cy="-2.30" r="1.23" fill="#f1ece6"/><circle cx="0.00" cy="0.26" r="1.23" fill="#f1ece6"/><circle cx="-2.56" cy="2.05" r="1.23" fill="#f1ece6"/><circle cx="2.56" cy="1.79" r="1.23" fill="#f1ece6"/></g></g><g transform="translate(269.5 350.2) rotate(0)"><rect x="-1.28" y="-7.45" width="2.56" height="2.44" rx="0.47" fill="#7fa878"/><clipPath id="o166"><circle r="5.82"/></clipPath><circle r="5.82" fill="#a9c79c"/><g clip-path="url(#o166)"><circle r="3.96" fill="none" stroke="#5f8a5c" stroke-width="1.16"/><circle r="2.09" fill="#e9efd9"/><circle r="0.99" fill="#5f8a5c"/></g></g><g transform="translate(199.0 368.4) rotate(0)"><rect x="-2.15" y="-12.51" width="4.30" height="4.10" rx="0.78" fill="#a87440"/><clipPath id="o167"><circle r="9.77"/></clipPath><circle r="9.77" fill="#c48c50"/><g clip-path="url(#o167)"><rect x="-9.77" y="-4.10" width="19.55" height="8.21" fill="#f8ecd2"/><circle cx="-8.14" cy="-1.95" r="0.68" fill="#c48c50"/><circle cx="-8.14" cy="1.95" r="0.68" fill="#c48c50"/><circle cx="-4.89" cy="-1.95" r="0.68" fill="#c48c50"/><circle cx="-4.89" cy="1.95" r="0.68" fill="#c48c50"/><circle cx="-1.63" cy="-1.95" r="0.68" fill="#c48c50"/><circle cx="-1.63" cy="1.95" r="0.68" fill="#c48c50"/><circle cx="1.63" cy="-1.95" r="0.68" fill="#c48c50"/><circle cx="1.63" cy="1.95" r="0.68" fill="#c48c50"/><circle cx="4.89" cy="-1.95" r="0.68" fill="#c48c50"/><circle cx="4.89" cy="1.95" r="0.68" fill="#c48c50"/><circle cx="8.14" cy="-1.95" r="0.68" fill="#c48c50"/><circle cx="8.14" cy="1.95" r="0.68" fill="#c48c50"/></g></g><g transform="translate(258.7 364.4) rotate(50)"><rect x="-1.95" y="-11.32" width="3.89" height="3.71" rx="0.71" fill="#8fc0d2"/><clipPath id="o168"><circle r="8.84"/></clipPath><circle r="8.84" fill="#a9d3e2"/><g clip-path="url(#o168)"><path d="M-11.14 -8.84Q-6.72 0 -11.14 8.84" fill="none" stroke="#e6f3f6" stroke-width="0.97"/><path d="M-7.43 -8.84Q-3.01 0 -7.43 8.84" fill="none" stroke="#e6f3f6" stroke-width="0.97"/><path d="M-3.71 -8.84Q0.71 0 -3.71 8.84" fill="none" stroke="#e6f3f6" stroke-width="0.97"/><path d="M0.00 -8.84Q4.42 0 0.00 8.84" fill="none" stroke="#e6f3f6" stroke-width="0.97"/><path d="M3.71 -8.84Q8.14 0 3.71 8.84" fill="none" stroke="#e6f3f6" stroke-width="0.97"/><path d="M7.43 -8.84Q11.85 0 7.43 8.84" fill="none" stroke="#e6f3f6" stroke-width="0.97"/><path d="M11.14 -8.84Q15.56 0 11.14 8.84" fill="none" stroke="#e6f3f6" stroke-width="0.97"/></g></g><g transform="translate(220.3 376.5) rotate(0)"><rect x="-1.13" y="-6.55" width="2.25" height="2.15" rx="0.41" fill="#7d3a25"/><clipPath id="o169"><circle r="5.12"/></clipPath><circle r="5.12" fill="#98492f"/><g clip-path="url(#o169)"><path d="M-5.12 -1.95 L-3.41 -0.61 L-1.71 -1.95 L0.00 -0.61 L1.71 -1.95 L3.41 -0.61 L5.12 -1.95" fill="none" stroke="#f7e6d8" stroke-width="0.72" stroke-linejoin="round"/><path d="M-5.12 0.46 L-3.41 1.79 L-1.71 0.46 L0.00 1.79 L1.71 0.46 L3.41 1.79 L5.12 0.46" fill="none" stroke="#f7e6d8" stroke-width="0.72" stroke-linejoin="round"/></g></g><g transform="translate(258.7 384.6) rotate(-50)"><rect x="-2.30" y="-13.40" width="4.61" height="4.40" rx="0.84" fill="#e58d68"/><clipPath id="o170"><circle r="10.47"/></clipPath><circle r="10.47" fill="#f1a07c"/><g clip-path="url(#o170)"><path d="M-6.98 -10.47V10.47" stroke="#fbe3cc" stroke-width="1.68" stroke-dasharray="2.30 1.26"/><path d="M-2.33 -10.47V10.47" stroke="#fbe3cc" stroke-width="1.68" stroke-dasharray="2.30 1.26"/><path d="M2.33 -10.47V10.47" stroke="#fbe3cc" stroke-width="1.68" stroke-dasharray="2.30 1.26"/><path d="M6.98 -10.47V10.47" stroke="#fbe3cc" stroke-width="1.68" stroke-dasharray="2.30 1.26"/></g></g><g transform="translate(239.5 387.2) rotate(0)"><rect x="-1.43" y="-8.34" width="2.87" height="2.74" rx="0.52" fill="#b8cfae"/><clipPath id="o171"><circle r="6.52"/></clipPath><circle r="6.52" fill="#eef2e4"/><g clip-path="url(#o171)"><circle cx="-2.93" cy="-2.28" r="1.30" fill="#8fb787"/><circle cx="1.95" cy="-2.93" r="1.30" fill="#8fb787"/><circle cx="0.00" cy="0.33" r="1.30" fill="#8fb787"/><circle cx="-3.26" cy="2.61" r="1.30" fill="#8fb787"/><circle cx="3.26" cy="2.28" r="1.30" fill="#8fb787"/><circle cx="0.00" cy="-4.56" r="1.30" fill="#8fb787"/><circle cx="0.00" cy="4.56" r="1.30" fill="#8fb787"/></g></g><g transform="translate(211.2 384.6) rotate(0)"><rect x="-1.13" y="-6.55" width="2.25" height="2.15" rx="0.41" fill="#8fc0d2"/><clipPath id="o172"><circle r="5.12"/></clipPath><circle r="5.12" fill="#a9d3e2"/><g clip-path="url(#o172)"><path d="M-6.45 -5.12Q-3.89 0 -6.45 5.12" fill="none" stroke="#e6f3f6" stroke-width="0.56"/><path d="M-4.30 -5.12Q-1.74 0 -4.30 5.12" fill="none" stroke="#e6f3f6" stroke-width="0.56"/><path d="M-2.15 -5.12Q0.41 0 -2.15 5.12" fill="none" stroke="#e6f3f6" stroke-width="0.56"/><path d="M0.00 -5.12Q2.56 0 0.00 5.12" fill="none" stroke="#e6f3f6" stroke-width="0.56"/><path d="M2.15 -5.12Q4.71 0 2.15 5.12" fill="none" stroke="#e6f3f6" stroke-width="0.56"/><path d="M4.30 -5.12Q6.86 0 4.30 5.12" fill="none" stroke="#e6f3f6" stroke-width="0.56"/><path d="M6.45 -5.12Q9.01 0 6.45 5.12" fill="none" stroke="#e6f3f6" stroke-width="0.56"/></g></g><g transform="translate(222.3 392.1) rotate(0)"><rect x="-1.28" y="-7.45" width="2.56" height="2.44" rx="0.47" fill="#a59b92"/><clipPath id="o173"><circle r="5.82"/></clipPath><circle r="5.82" fill="#bdb3aa"/><g clip-path="url(#o173)"><circle cx="-2.62" cy="-2.04" r="1.40" fill="#f1ece6"/><circle cx="1.75" cy="-2.62" r="1.40" fill="#f1ece6"/><circle cx="0.00" cy="0.29" r="1.40" fill="#f1ece6"/><circle cx="-2.91" cy="2.33" r="1.40" fill="#f1ece6"/><circle cx="2.91" cy="2.04" r="1.40" fill="#f1ece6"/></g></g><g transform="translate(206.1 395.3) rotate(0)"><rect x="-0.77" y="-4.47" width="1.54" height="1.47" rx="0.28" fill="#7d3a25"/><clipPath id="o174"><circle r="3.49"/></clipPath><circle r="3.49" fill="#98492f"/><g clip-path="url(#o174)"><path d="M-3.49 -1.33 L-2.33 -0.42 L-1.16 -1.33 L0.00 -0.42 L1.16 -1.33 L2.33 -0.42 L3.49 -1.33" fill="none" stroke="#f7e6d8" stroke-width="0.49" stroke-linejoin="round"/><path d="M-3.49 0.31 L-2.33 1.22 L-1.16 0.31 L0.00 1.22 L1.16 0.31 L2.33 1.22 L3.49 0.31" fill="none" stroke="#f7e6d8" stroke-width="0.49" stroke-linejoin="round"/></g></g><g transform="translate(222.3 361.3) rotate(0)"><rect x="-1.54" y="-8.94" width="3.07" height="2.93" rx="0.56" fill="#f2b590"/><clipPath id="o175"><circle r="6.98"/></clipPath><circle r="6.98" fill="#f7c2a3"/><g clip-path="url(#o175)"></g></g><g transform="translate(241.5 372.4) rotate(0)"><rect x="-1.43" y="-8.34" width="2.87" height="2.74" rx="0.52" fill="#f2b590"/><clipPath id="o176"><circle r="6.52"/></clipPath><circle r="6.52" fill="#f7c2a3"/><g clip-path="url(#o176)"></g></g><g transform="translate(197.0 386.6) rotate(0)"><rect x="-1.33" y="-7.74" width="2.66" height="2.54" rx="0.48" fill="#f2b590"/><clipPath id="o177"><circle r="6.05"/></clipPath><circle r="6.05" fill="#f7c2a3"/><g clip-path="url(#o177)"></g></g></g>
<clipPath id="c7"><rect x="275.7" y="342.7" width="84.2" height="53.4" rx="0"/></clipPath><g clip-path="url(#c7)"><rect x="275.7" y="342.7" width="84.2" height="53.4" fill="#fbd4a6"/><g fill="#c18e55"><circle cx="280.2" cy="345.1" r="3.3"/><circle cx="296.6" cy="345.1" r="3.3"/><circle cx="313.0" cy="345.1" r="3.3"/><circle cx="329.4" cy="345.1" r="3.3"/><circle cx="345.8" cy="345.1" r="3.3"/><circle cx="362.2" cy="345.1" r="3.3"/><circle cx="280.2" cy="361.5" r="3.3"/><circle cx="296.6" cy="361.5" r="3.3"/><circle cx="313.0" cy="361.5" r="3.3"/><circle cx="329.4" cy="361.5" r="3.3"/><circle cx="345.8" cy="361.5" r="3.3"/><circle cx="362.2" cy="361.5" r="3.3"/><circle cx="280.2" cy="377.9" r="3.3"/><circle cx="296.6" cy="377.9" r="3.3"/><circle cx="313.0" cy="377.9" r="3.3"/><circle cx="329.4" cy="377.9" r="3.3"/><circle cx="345.8" cy="377.9" r="3.3"/><circle cx="362.2" cy="377.9" r="3.3"/><circle cx="280.2" cy="394.3" r="3.3"/><circle cx="296.6" cy="394.3" r="3.3"/><circle cx="313.0" cy="394.3" r="3.3"/><circle cx="329.4" cy="394.3" r="3.3"/><circle cx="345.8" cy="394.3" r="3.3"/><circle cx="362.2" cy="394.3" r="3.3"/><circle cx="288.4" cy="353.3" r="3.3"/><circle cx="304.8" cy="353.3" r="3.3"/><circle cx="321.2" cy="353.3" r="3.3"/><circle cx="337.6" cy="353.3" r="3.3"/><circle cx="354.0" cy="353.3" r="3.3"/><circle cx="288.4" cy="369.7" r="3.3"/><circle cx="304.8" cy="369.7" r="3.3"/><circle cx="321.2" cy="369.7" r="3.3"/><circle cx="337.6" cy="369.7" r="3.3"/><circle cx="354.0" cy="369.7" r="3.3"/><circle cx="288.4" cy="386.1" r="3.3"/><circle cx="304.8" cy="386.1" r="3.3"/><circle cx="321.2" cy="386.1" r="3.3"/><circle cx="337.6" cy="386.1" r="3.3"/><circle cx="354.0" cy="386.1" r="3.3"/></g></g>
<clipPath id="c8"><rect x="364.0" y="342.7" width="84.2" height="53.4" rx="0"/></clipPath><g clip-path="url(#c8)"><rect x="364.0" y="342.7" width="84.2" height="53.4" fill="#fefcf7"/><circle cx="430.8" cy="386.6" r="0.90" fill="#a9d3e2"/><circle cx="428.2" cy="344.7" r="0.90" fill="#f3b48e"/><circle cx="419.8" cy="367.8" r="0.90" fill="#8fb787"/><circle cx="395.4" cy="383.8" r="0.90" fill="#a9d3e2"/><circle cx="405.2" cy="353.3" r="0.90" fill="#a9d3e2"/><circle cx="440.7" cy="371.5" r="0.90" fill="#f3b48e"/><circle cx="380.2" cy="372.3" r="0.90" fill="#8fb787"/><circle cx="386.4" cy="385.6" r="0.90" fill="#8fb787"/><circle cx="371.4" cy="365.4" r="0.90" fill="#f3b48e"/><circle cx="394.5" cy="364.6" r="0.90" fill="#a9d3e2"/><circle cx="401.5" cy="347.7" r="0.90" fill="#f3b48e"/><circle cx="423.0" cy="385.2" r="0.90" fill="#f3b48e"/><g transform="translate(371.1 350.2) rotate(-40)"><rect x="-2.09" y="-12.18" width="4.19" height="4.00" rx="0.76" fill="#e58d68"/><clipPath id="o178"><circle r="9.52"/></clipPath><circle r="9.52" fill="#f1a07c"/><g clip-path="url(#o178)"><path d="M-6.35 -9.52V9.52" stroke="#fbe3cc" stroke-width="1.52" stroke-dasharray="2.09 1.14"/><path d="M-2.12 -9.52V9.52" stroke="#fbe3cc" stroke-width="1.52" stroke-dasharray="2.09 1.14"/><path d="M2.12 -9.52V9.52" stroke="#fbe3cc" stroke-width="1.52" stroke-dasharray="2.09 1.14"/><path d="M6.35 -9.52V9.52" stroke="#fbe3cc" stroke-width="1.52" stroke-dasharray="2.09 1.14"/></g></g><g transform="translate(393.3 347.2) rotate(0)"><rect x="-1.50" y="-8.70" width="2.99" height="2.86" rx="0.54" fill="#b8cfae"/><clipPath id="o179"><circle r="6.80"/></clipPath><circle r="6.80" fill="#eef2e4"/><g clip-path="url(#o179)"><circle cx="-3.06" cy="-2.38" r="1.36" fill="#8fb787"/><circle cx="2.04" cy="-3.06" r="1.36" fill="#8fb787"/><circle cx="0.00" cy="0.34" r="1.36" fill="#8fb787"/><circle cx="-3.40" cy="2.72" r="1.36" fill="#8fb787"/><circle cx="3.40" cy="2.38" r="1.36" fill="#8fb787"/><circle cx="0.00" cy="-4.76" r="1.36" fill="#8fb787"/><circle cx="0.00" cy="4.76" r="1.36" fill="#8fb787"/></g></g><g transform="translate(428.8 347.2) rotate(40)"><rect x="-1.50" y="-8.70" width="2.99" height="2.86" rx="0.54" fill="#8fc0d2"/><clipPath id="o180"><circle r="6.80"/></clipPath><circle r="6.80" fill="#a9d3e2"/><g clip-path="url(#o180)"><path d="M-8.57 -6.80Q-5.17 0 -8.57 6.80" fill="none" stroke="#e6f3f6" stroke-width="0.75"/><path d="M-5.71 -6.80Q-2.31 0 -5.71 6.80" fill="none" stroke="#e6f3f6" stroke-width="0.75"/><path d="M-2.86 -6.80Q0.54 0 -2.86 6.80" fill="none" stroke="#e6f3f6" stroke-width="0.75"/><path d="M0.00 -6.80Q3.40 0 0.00 6.80" fill="none" stroke="#e6f3f6" stroke-width="0.75"/><path d="M2.86 -6.80Q6.25 0 2.86 6.80" fill="none" stroke="#e6f3f6" stroke-width="0.75"/><path d="M5.71 -6.80Q9.11 0 5.71 6.80" fill="none" stroke="#e6f3f6" stroke-width="0.75"/><path d="M8.57 -6.80Q11.97 0 8.57 6.80" fill="none" stroke="#e6f3f6" stroke-width="0.75"/></g></g><g transform="translate(386.3 364.4) rotate(0)"><rect x="-1.89" y="-11.02" width="3.79" height="3.62" rx="0.69" fill="#eaa58c"/><clipPath id="o181"><circle r="8.61"/></clipPath><circle r="8.61" fill="#f3c0a8"/><g clip-path="url(#o181)"><circle cx="-2.15" cy="-1.72" r="4.31" fill="#f8d5c4" opacity=".6"/></g></g><g transform="translate(401.0 358.3) rotate(0)"><rect x="-1.00" y="-5.80" width="1.99" height="1.90" rx="0.36" fill="#e9b070"/><clipPath id="o182"><circle r="4.53"/></clipPath><circle r="4.53" fill="#f6c98f"/><g clip-path="url(#o182)"><ellipse cx="-1.90" cy="0" rx="0.54" ry="3.85" fill="none" stroke="#fbe6c5" stroke-width="0.45"/><ellipse cx="0.00" cy="0" rx="0.54" ry="3.85" fill="none" stroke="#fbe6c5" stroke-width="0.45"/><ellipse cx="1.90" cy="0" rx="0.54" ry="3.85" fill="none" stroke="#fbe6c5" stroke-width="0.45"/></g></g><g transform="translate(418.6 358.3) rotate(0)"><rect x="-1.25" y="-7.25" width="2.49" height="2.38" rx="0.45" fill="#7d3a25"/><clipPath id="o183"><circle r="5.67"/></clipPath><circle r="5.67" fill="#98492f"/><g clip-path="url(#o183)"><path d="M-5.67 -2.15 L-3.78 -0.68 L-1.89 -2.15 L-0.00 -0.68 L1.89 -2.15 L3.78 -0.68 L5.67 -2.15" fill="none" stroke="#f7e6d8" stroke-width="0.79" stroke-linejoin="round"/><path d="M-5.67 0.51 L-3.78 1.98 L-1.89 0.51 L-0.00 1.98 L1.89 0.51 L3.78 1.98 L5.67 0.51" fill="none" stroke="#f7e6d8" stroke-width="0.79" stroke-linejoin="round"/></g></g><g transform="translate(441.9 368.4) rotate(0)"><rect x="-2.24" y="-13.05" width="4.49" height="4.28" rx="0.82" fill="#a87440"/><clipPath id="o184"><circle r="10.20"/></clipPath><circle r="10.20" fill="#c48c50"/><g clip-path="url(#o184)"><rect x="-10.20" y="-4.28" width="20.40" height="8.57" fill="#f8ecd2"/><circle cx="-8.50" cy="-2.04" r="0.71" fill="#c48c50"/><circle cx="-8.50" cy="2.04" r="0.71" fill="#c48c50"/><circle cx="-5.10" cy="-2.04" r="0.71" fill="#c48c50"/><circle cx="-5.10" cy="2.04" r="0.71" fill="#c48c50"/><circle cx="-1.70" cy="-2.04" r="0.71" fill="#c48c50"/><circle cx="-1.70" cy="2.04" r="0.71" fill="#c48c50"/><circle cx="1.70" cy="-2.04" r="0.71" fill="#c48c50"/><circle cx="1.70" cy="2.04" r="0.71" fill="#c48c50"/><circle cx="5.10" cy="-2.04" r="0.71" fill="#c48c50"/><circle cx="5.10" cy="2.04" r="0.71" fill="#c48c50"/><circle cx="8.50" cy="-2.04" r="0.71" fill="#c48c50"/><circle cx="8.50" cy="2.04" r="0.71" fill="#c48c50"/></g></g><g transform="translate(371.1 374.5) rotate(60)"><rect x="-1.99" y="-11.60" width="3.99" height="3.81" rx="0.73" fill="#8fc0d2"/><clipPath id="o185"><circle r="9.07"/></clipPath><circle r="9.07" fill="#a9d3e2"/><g clip-path="url(#o185)"><path d="M-11.42 -9.07Q-6.89 0 -11.42 9.07" fill="none" stroke="#e6f3f6" stroke-width="1.00"/><path d="M-7.61 -9.07Q-3.08 0 -7.61 9.07" fill="none" stroke="#e6f3f6" stroke-width="1.00"/><path d="M-3.81 -9.07Q0.73 0 -3.81 9.07" fill="none" stroke="#e6f3f6" stroke-width="1.00"/><path d="M0.00 -9.07Q4.53 0 0.00 9.07" fill="none" stroke="#e6f3f6" stroke-width="1.00"/><path d="M3.81 -9.07Q8.34 0 3.81 9.07" fill="none" stroke="#e6f3f6" stroke-width="1.00"/><path d="M7.61 -9.07Q12.15 0 7.61 9.07" fill="none" stroke="#e6f3f6" stroke-width="1.00"/><path d="M11.42 -9.07Q15.95 0 11.42 9.07" fill="none" stroke="#e6f3f6" stroke-width="1.00"/></g></g><g transform="translate(390.3 385.6) rotate(-15)"><rect x="-2.74" y="-15.95" width="5.48" height="5.24" rx="1.00" fill="#7d3a25"/><clipPath id="o186"><circle r="12.46"/></clipPath><circle r="12.46" fill="#98492f"/><g clip-path="url(#o186)"><path d="M-12.46 -4.74 L-8.31 -1.50 L-4.15 -4.74 L0.00 -1.50 L4.15 -4.74 L8.31 -1.50 L12.46 -4.74" fill="none" stroke="#f7e6d8" stroke-width="1.75" stroke-linejoin="round"/><path d="M-12.46 1.12 L-8.31 4.36 L-4.15 1.12 L0.00 4.36 L4.15 1.12 L8.31 4.36 L12.46 1.12" fill="none" stroke="#f7e6d8" stroke-width="1.75" stroke-linejoin="round"/></g></g><g transform="translate(412.6 379.5) rotate(0)"><rect x="-1.99" y="-11.60" width="3.99" height="3.81" rx="0.73" fill="#eaa58c"/><clipPath id="o187"><circle r="9.07"/></clipPath><circle r="9.07" fill="#f3c0a8"/><g clip-path="url(#o187)"><circle cx="-2.27" cy="-1.81" r="4.53" fill="#f8d5c4" opacity=".6"/></g></g><g transform="translate(433.8 388.0) rotate(0)"><rect x="-1.50" y="-8.70" width="2.99" height="2.86" rx="0.54" fill="#a59b92"/><clipPath id="o188"><circle r="6.80"/></clipPath><circle r="6.80" fill="#bdb3aa"/><g clip-path="url(#o188)"><circle cx="-3.06" cy="-2.38" r="1.63" fill="#f1ece6"/><circle cx="2.04" cy="-3.06" r="1.63" fill="#f1ece6"/><circle cx="0.00" cy="0.34" r="1.63" fill="#f1ece6"/><circle cx="-3.40" cy="2.72" r="1.63" fill="#f1ece6"/><circle cx="3.40" cy="2.38" r="1.63" fill="#f1ece6"/></g></g><g transform="translate(441.9 345.1) rotate(0)"><rect x="-1.10" y="-6.38" width="2.19" height="2.09" rx="0.40" fill="#e9b070"/><clipPath id="o189"><circle r="4.99"/></clipPath><circle r="4.99" fill="#f6c98f"/><g clip-path="url(#o189)"><ellipse cx="-2.09" cy="0" rx="0.60" ry="4.24" fill="none" stroke="#fbe6c5" stroke-width="0.50"/><ellipse cx="0.00" cy="0" rx="0.60" ry="4.24" fill="none" stroke="#fbe6c5" stroke-width="0.50"/><ellipse cx="2.09" cy="0" rx="0.60" ry="4.24" fill="none" stroke="#fbe6c5" stroke-width="0.50"/></g></g><g transform="translate(413.6 346.1) rotate(0)"><rect x="-0.80" y="-4.64" width="1.60" height="1.52" rx="0.29" fill="#a59b92"/><clipPath id="o190"><circle r="3.63"/></clipPath><circle r="3.63" fill="#bdb3aa"/><g clip-path="url(#o190)"><circle cx="-1.63" cy="-1.27" r="0.87" fill="#f1ece6"/><circle cx="1.09" cy="-1.63" r="0.87" fill="#f1ece6"/><circle cx="0.00" cy="0.18" r="0.87" fill="#f1ece6"/><circle cx="-1.81" cy="1.45" r="0.87" fill="#f1ece6"/><circle cx="1.81" cy="1.27" r="0.87" fill="#f1ece6"/></g></g><g transform="translate(371.1 395.7) rotate(0)"><rect x="-1.10" y="-6.38" width="2.19" height="2.09" rx="0.40" fill="#a59b92"/><clipPath id="o191"><circle r="4.99"/></clipPath><circle r="4.99" fill="#bdb3aa"/><g clip-path="url(#o191)"><circle cx="-2.24" cy="-1.75" r="1.20" fill="#f1ece6"/><circle cx="1.50" cy="-2.24" r="1.20" fill="#f1ece6"/><circle cx="0.00" cy="0.25" r="1.20" fill="#f1ece6"/><circle cx="-2.49" cy="1.99" r="1.20" fill="#f1ece6"/><circle cx="2.49" cy="1.75" r="1.20" fill="#f1ece6"/></g></g><g transform="translate(415.6 395.7) rotate(0)"><rect x="-1.00" y="-5.80" width="1.99" height="1.90" rx="0.36" fill="#b8cfae"/><clipPath id="o192"><circle r="4.53"/></clipPath><circle r="4.53" fill="#eef2e4"/><g clip-path="url(#o192)"><circle cx="-2.04" cy="-1.59" r="0.91" fill="#8fb787"/><circle cx="1.36" cy="-2.04" r="0.91" fill="#8fb787"/><circle cx="0.00" cy="0.23" r="0.91" fill="#8fb787"/><circle cx="-2.27" cy="1.81" r="0.91" fill="#8fb787"/><circle cx="2.27" cy="1.59" r="0.91" fill="#8fb787"/><circle cx="0.00" cy="-3.17" r="0.91" fill="#8fb787"/><circle cx="0.00" cy="3.17" r="0.91" fill="#8fb787"/></g></g></g>
<rect x="99.1" y="399.8" width="84.2" height="53.4" rx="10.5" fill="#fdeacb"/>
<rect x="187.5" y="399.8" width="84.2" height="53.4" rx="10.5" fill="#d9f0f3"/>
<rect x="275.7" y="399.8" width="84.2" height="53.4" fill="#17585d"/>
<rect x="364.0" y="399.8" width="84.2" height="53.4" fill="#6a8e6c"/>
<rect x="99.1" y="456.8" width="84.2" height="53.4" rx="11" fill="#b7d3a6"/>
<clipPath id="c9"><rect x="99.1" y="456.8" width="84.2" height="53.4" rx="11"/></clipPath><g clip-path="url(#c9)"><g fill="#5f8258"><rect x="117.5" y="456.8" width="5.6" height="4" rx=".8"/><rect x="117.5" y="506.2" width="5.6" height="4" rx=".8"/><rect x="134.0" y="456.8" width="5.6" height="4" rx=".8"/><rect x="134.0" y="506.2" width="5.6" height="4" rx=".8"/><rect x="150.5" y="456.8" width="5.6" height="4" rx=".8"/><rect x="150.5" y="506.2" width="5.6" height="4" rx=".8"/><rect x="167.0" y="456.8" width="5.6" height="4" rx=".8"/><rect x="167.0" y="506.2" width="5.6" height="4" rx=".8"/><rect x="99.1" y="473.6" width="4" height="5.6" rx=".8"/><rect x="179.3" y="473.6" width="4" height="5.6" rx=".8"/><rect x="99.1" y="489.9" width="4" height="5.6" rx=".8"/><rect x="179.3" y="489.9" width="4" height="5.6" rx=".8"/><circle cx="102.7" cy="462.2" r="1.7"/><circle cx="179.7" cy="462.2" r="1.7"/><circle cx="102.7" cy="504.8" r="1.7"/><circle cx="179.7" cy="504.8" r="1.7"/></g></g>
<rect x="103.1" y="460.8" width="76.2" height="45.4" rx="7.5" fill="#fff"/>
<rect x="187.5" y="456.8" width="84.2" height="53.4" rx="11" fill="#b9804a"/><rect x="191.5" y="460.8" width="76.2" height="45.4" rx="7.5" fill="#fff"/>
<g fill="#f6d9b0"><circle cx="200.0" cy="458.8" r=".7"/><circle cx="257.5" cy="458.6" r=".7"/><circle cx="215.5" cy="508.2" r=".7"/><circle cx="189.5" cy="486.8" r=".6"/></g>
<rect x="275.7" y="456.8" width="84.2" height="53.4" fill="#6b8160"/>
<clipPath id="c10"><rect x="275.7" y="456.8" width="84.2" height="53.4" rx="0"/></clipPath><g clip-path="url(#c10)"><circle cx="295.6" cy="458.2" r="1.9" fill="#f3c0a8"/><circle cx="288.7" cy="458.2" r="1.2" fill="#98492f"/><circle cx="343.1" cy="458.2" r="1.4" fill="#e9e2d8"/><circle cx="299.0" cy="508.8" r="2.0" fill="#98492f"/><circle cx="293.8" cy="458.2" r="2.0" fill="#98492f"/><circle cx="343.1" cy="508.8" r="1.4" fill="#98492f"/><circle cx="277.1" cy="490.3" r="1.3" fill="#e9e2d8"/><circle cx="332.3" cy="508.8" r="1.4" fill="#f3c0a8"/><circle cx="277.1" cy="471.8" r="1.2" fill="#98492f"/><circle cx="277.1" cy="487.4" r="2.0" fill="#f6c98f"/><circle cx="277.1" cy="478.9" r="1.6" fill="#a9c79c"/><circle cx="277.1" cy="469.3" r="2.0" fill="#f3c0a8"/><circle cx="358.5" cy="461.1" r="1.8" fill="#98492f"/><circle cx="358.5" cy="484.5" r="1.9" fill="#a9c79c"/><circle cx="359.7" cy="508.8" r="1.3" fill="#f6c98f"/><circle cx="358.5" cy="490.7" r="1.5" fill="#e9e2d8"/><circle cx="277.1" cy="480.1" r="1.8" fill="#f6c98f"/><circle cx="351.8" cy="458.2" r="2.0" fill="#f6c98f"/><circle cx="299.1" cy="508.8" r="1.3" fill="#a9c79c"/><circle cx="300.2" cy="458.2" r="1.2" fill="#f1a07c"/><circle cx="277.1" cy="504.6" r="1.9" fill="#e9e2d8"/><circle cx="277.1" cy="457.8" r="1.5" fill="#a9c79c"/><circle cx="358.5" cy="498.2" r="2.1" fill="#f1a07c"/><circle cx="300.4" cy="508.8" r="2.1" fill="#98492f"/><circle cx="358.5" cy="464.1" r="1.8" fill="#a9c79c"/><circle cx="303.6" cy="458.2" r="1.6" fill="#f3c0a8"/><circle cx="277.1" cy="465.9" r="2.2" fill="#f1a07c"/><circle cx="312.7" cy="508.8" r="1.6" fill="#f6c98f"/><circle cx="285.3" cy="458.2" r="1.3" fill="#a9c79c"/><circle cx="325.8" cy="508.8" r="1.8" fill="#f3c0a8"/><circle cx="277.1" cy="487.9" r="2.2" fill="#f1a07c"/><circle cx="277.1" cy="501.4" r="2.0" fill="#a9d3e2"/><circle cx="330.6" cy="508.8" r="1.7" fill="#f6c98f"/><circle cx="358.5" cy="480.2" r="1.2" fill="#a9d3e2"/></g>
<rect x="278.5" y="459.6" width="78.60000000000001" height="47.8" fill="#fff"/>
<rect x="364.0" y="456.8" width="84.2" height="53.4" rx="0" fill="#b8dde7"/><rect x="367.5" y="460.3" width="77.2" height="46.4" rx="0" fill="#fff"/>
<clipPath id="c11"><rect x="364.0" y="456.8" width="84.2" height="53.4" rx="0"/></clipPath><g clip-path="url(#c11)"><g fill="#3a6470"><circle cx="365.7" cy="458.5" r="1.45"/><circle cx="365.7" cy="508.5" r="1.45"/><circle cx="373.8" cy="458.5" r="1.45"/><circle cx="373.8" cy="508.5" r="1.45"/><circle cx="381.9" cy="458.5" r="1.45"/><circle cx="381.9" cy="508.5" r="1.45"/><circle cx="389.9" cy="458.5" r="1.45"/><circle cx="389.9" cy="508.5" r="1.45"/><circle cx="398.0" cy="458.5" r="1.45"/><circle cx="398.0" cy="508.5" r="1.45"/><circle cx="406.1" cy="458.5" r="1.45"/><circle cx="406.1" cy="508.5" r="1.45"/><circle cx="414.2" cy="458.5" r="1.45"/><circle cx="414.2" cy="508.5" r="1.45"/><circle cx="422.3" cy="458.5" r="1.45"/><circle cx="422.3" cy="508.5" r="1.45"/><circle cx="430.3" cy="458.5" r="1.45"/><circle cx="430.3" cy="508.5" r="1.45"/><circle cx="438.4" cy="458.5" r="1.45"/><circle cx="438.4" cy="508.5" r="1.45"/><circle cx="446.5" cy="458.5" r="1.45"/><circle cx="446.5" cy="508.5" r="1.45"/><circle cx="365.7" cy="466.8" r="1.45"/><circle cx="446.5" cy="466.8" r="1.45"/><circle cx="365.7" cy="475.2" r="1.45"/><circle cx="446.5" cy="475.2" r="1.45"/><circle cx="365.7" cy="483.5" r="1.45"/><circle cx="446.5" cy="483.5" r="1.45"/><circle cx="365.7" cy="491.8" r="1.45"/><circle cx="446.5" cy="491.8" r="1.45"/><circle cx="365.7" cy="500.2" r="1.45"/><circle cx="446.5" cy="500.2" r="1.45"/></g></g>
<rect x="99.1" y="513.9" width="84.2" height="53.4" rx="11" fill="#d7eff0"/><rect x="103.1" y="517.9" width="76.2" height="45.4" rx="7.5" fill="#fff"/>
<rect x="187.5" y="513.9" width="84.2" height="53.4" rx="11" fill="#fde6c2"/><rect x="191.5" y="517.9" width="76.2" height="45.4" rx="7.5" fill="#fff"/>
<rect x="275.7" y="513.9" width="84.2" height="53.4" rx="0" fill="#6d8f6c"/><rect x="278.7" y="516.9" width="78.2" height="47.4" rx="0" fill="#fff"/>
<rect x="364.0" y="513.9" width="84.2" height="53.4" rx="0" fill="#175a5e"/><rect x="367.0" y="516.9" width="78.2" height="47.4" rx="0" fill="#fff"/>
<clipPath id="d1"><rect x="535.7" y="122.5" width="84.2" height="106.5" rx="0"/></clipPath><g clip-path="url(#d1)"><rect x="535.7" y="122.5" width="84.2" height="106.5" fill="#5f7453"/><g transform="translate(533.6 119.2) rotate(0)"><rect x="-0.97" y="-5.67" width="1.95" height="1.86" rx="0.35" fill="#8fc0d2"/><clipPath id="o193"><circle r="4.43"/></clipPath><circle r="4.43" fill="#a9d3e2"/><g clip-path="url(#o193)"><path d="M-5.58 -4.43Q-3.36 0 -5.58 4.43" fill="none" stroke="#e6f3f6" stroke-width="0.49"/><path d="M-3.72 -4.43Q-1.51 0 -3.72 4.43" fill="none" stroke="#e6f3f6" stroke-width="0.49"/><path d="M-1.86 -4.43Q0.35 0 -1.86 4.43" fill="none" stroke="#e6f3f6" stroke-width="0.49"/><path d="M0.00 -4.43Q2.21 0 0.00 4.43" fill="none" stroke="#e6f3f6" stroke-width="0.49"/><path d="M1.86 -4.43Q4.07 0 1.86 4.43" fill="none" stroke="#e6f3f6" stroke-width="0.49"/><path d="M3.72 -4.43Q5.93 0 3.72 4.43" fill="none" stroke="#e6f3f6" stroke-width="0.49"/><path d="M5.58 -4.43Q7.79 0 5.58 4.43" fill="none" stroke="#e6f3f6" stroke-width="0.49"/></g></g><g transform="translate(576.5 119.2) rotate(0)"><rect x="-0.97" y="-5.67" width="1.95" height="1.86" rx="0.35" fill="#8fc0d2"/><clipPath id="o194"><circle r="4.43"/></clipPath><circle r="4.43" fill="#a9d3e2"/><g clip-path="url(#o194)"><path d="M-5.58 -4.43Q-3.36 0 -5.58 4.43" fill="none" stroke="#e6f3f6" stroke-width="0.49"/><path d="M-3.72 -4.43Q-1.51 0 -3.72 4.43" fill="none" stroke="#e6f3f6" stroke-width="0.49"/><path d="M-1.86 -4.43Q0.35 0 -1.86 4.43" fill="none" stroke="#e6f3f6" stroke-width="0.49"/><path d="M0.00 -4.43Q2.21 0 0.00 4.43" fill="none" stroke="#e6f3f6" stroke-width="0.49"/><path d="M1.86 -4.43Q4.07 0 1.86 4.43" fill="none" stroke="#e6f3f6" stroke-width="0.49"/><path d="M3.72 -4.43Q5.93 0 3.72 4.43" fill="none" stroke="#e6f3f6" stroke-width="0.49"/><path d="M5.58 -4.43Q7.79 0 5.58 4.43" fill="none" stroke="#e6f3f6" stroke-width="0.49"/></g></g><g transform="translate(544.9 121.6) rotate(0)"><rect x="-1.10" y="-6.41" width="2.20" height="2.10" rx="0.40" fill="#b97b45"/><clipPath id="o195"><circle r="5.01"/></clipPath><circle r="5.01" fill="#f7e7cf"/><g clip-path="url(#o195)"><rect x="-5.01" y="-5.01" width="10.02" height="2.76" fill="#c98f58"/><rect x="-5.01" y="2.50" width="10.02" height="2.50" fill="#c98f58" opacity=".8"/></g></g><g transform="translate(567.7 123.1) rotate(0)"><rect x="-0.72" y="-4.18" width="1.44" height="1.37" rx="0.26" fill="#eaa58c"/><clipPath id="o196"><circle r="3.26"/></clipPath><circle r="3.26" fill="#f3c0a8"/><g clip-path="url(#o196)"><circle cx="-0.82" cy="-0.65" r="1.63" fill="#f8d5c4" opacity=".6"/></g></g><g transform="translate(619.4 119.2) rotate(0)"><rect x="-0.97" y="-5.67" width="1.95" height="1.86" rx="0.35" fill="#8fc0d2"/><clipPath id="o197"><circle r="4.43"/></clipPath><circle r="4.43" fill="#a9d3e2"/><g clip-path="url(#o197)"><path d="M-5.58 -4.43Q-3.36 0 -5.58 4.43" fill="none" stroke="#e6f3f6" stroke-width="0.49"/><path d="M-3.72 -4.43Q-1.51 0 -3.72 4.43" fill="none" stroke="#e6f3f6" stroke-width="0.49"/><path d="M-1.86 -4.43Q0.35 0 -1.86 4.43" fill="none" stroke="#e6f3f6" stroke-width="0.49"/><path d="M0.00 -4.43Q2.21 0 0.00 4.43" fill="none" stroke="#e6f3f6" stroke-width="0.49"/><path d="M1.86 -4.43Q4.07 0 1.86 4.43" fill="none" stroke="#e6f3f6" stroke-width="0.49"/><path d="M3.72 -4.43Q5.93 0 3.72 4.43" fill="none" stroke="#e6f3f6" stroke-width="0.49"/><path d="M5.58 -4.43Q7.79 0 5.58 4.43" fill="none" stroke="#e6f3f6" stroke-width="0.49"/></g></g><g transform="translate(587.8 121.6) rotate(0)"><rect x="-1.10" y="-6.41" width="2.20" height="2.10" rx="0.40" fill="#b97b45"/><clipPath id="o198"><circle r="5.01"/></clipPath><circle r="5.01" fill="#f7e7cf"/><g clip-path="url(#o198)"><rect x="-5.01" y="-5.01" width="10.02" height="2.76" fill="#c98f58"/><rect x="-5.01" y="2.50" width="10.02" height="2.50" fill="#c98f58" opacity=".8"/></g></g><g transform="translate(610.7 123.1) rotate(0)"><rect x="-0.72" y="-4.18" width="1.44" height="1.37" rx="0.26" fill="#eaa58c"/><clipPath id="o199"><circle r="3.26"/></clipPath><circle r="3.26" fill="#f3c0a8"/><g clip-path="url(#o199)"><circle cx="-0.82" cy="-0.65" r="1.63" fill="#f8d5c4" opacity=".6"/></g></g><g transform="translate(532.6 130.1) rotate(20)"><rect x="-1.33" y="-7.75" width="2.67" height="2.54" rx="0.48" fill="#e58d68"/><clipPath id="o200"><circle r="6.06"/></clipPath><circle r="6.06" fill="#f1a07c"/><g clip-path="url(#o200)"><path d="M-4.04 -6.06V6.06" stroke="#fbe3cc" stroke-width="0.97" stroke-dasharray="1.33 0.73"/><path d="M-1.35 -6.06V6.06" stroke="#fbe3cc" stroke-width="0.97" stroke-dasharray="1.33 0.73"/><path d="M1.35 -6.06V6.06" stroke="#fbe3cc" stroke-width="0.97" stroke-dasharray="1.33 0.73"/><path d="M4.04 -6.06V6.06" stroke="#fbe3cc" stroke-width="0.97" stroke-dasharray="1.33 0.73"/></g></g><g transform="translate(531.6 151.9) rotate(0)"><rect x="-0.74" y="-4.32" width="1.49" height="1.42" rx="0.27" fill="#c9bfb6"/><clipPath id="o201"><circle r="3.38"/></clipPath><circle r="3.38" fill="#efe8e0"/><g clip-path="url(#o201)"><circle cx="-1.35" cy="-1.18" r="0.57" fill="#c4b9b0"/><circle cx="1.35" cy="-1.18" r="0.57" fill="#c4b9b0"/><circle cx="0.00" cy="0.34" r="0.57" fill="#c4b9b0"/><circle cx="-1.35" cy="1.69" r="0.57" fill="#c4b9b0"/><circle cx="1.35" cy="1.69" r="0.57" fill="#c4b9b0"/></g></g><g transform="translate(533.6 162.1) rotate(0)"><rect x="-0.97" y="-5.67" width="1.95" height="1.86" rx="0.35" fill="#8fc0d2"/><clipPath id="o202"><circle r="4.43"/></clipPath><circle r="4.43" fill="#a9d3e2"/><g clip-path="url(#o202)"><path d="M-5.58 -4.43Q-3.36 0 -5.58 4.43" fill="none" stroke="#e6f3f6" stroke-width="0.49"/><path d="M-3.72 -4.43Q-1.51 0 -3.72 4.43" fill="none" stroke="#e6f3f6" stroke-width="0.49"/><path d="M-1.86 -4.43Q0.35 0 -1.86 4.43" fill="none" stroke="#e6f3f6" stroke-width="0.49"/><path d="M0.00 -4.43Q2.21 0 0.00 4.43" fill="none" stroke="#e6f3f6" stroke-width="0.49"/><path d="M1.86 -4.43Q4.07 0 1.86 4.43" fill="none" stroke="#e6f3f6" stroke-width="0.49"/><path d="M3.72 -4.43Q5.93 0 3.72 4.43" fill="none" stroke="#e6f3f6" stroke-width="0.49"/><path d="M5.58 -4.43Q7.79 0 5.58 4.43" fill="none" stroke="#e6f3f6" stroke-width="0.49"/></g></g><g transform="translate(543.5 132.5) rotate(0)"><rect x="-0.77" y="-4.47" width="1.54" height="1.47" rx="0.28" fill="#e9b070"/><clipPath id="o203"><circle r="3.50"/></clipPath><circle r="3.50" fill="#f6c98f"/><g clip-path="url(#o203)"><ellipse cx="-1.47" cy="0" rx="0.42" ry="2.97" fill="none" stroke="#fbe6c5" stroke-width="0.35"/><ellipse cx="0.00" cy="0" rx="0.42" ry="2.97" fill="none" stroke="#fbe6c5" stroke-width="0.35"/><ellipse cx="1.47" cy="0" rx="0.42" ry="2.97" fill="none" stroke="#fbe6c5" stroke-width="0.35"/></g></g><g transform="translate(551.2 130.6) rotate(0)"><rect x="-0.62" y="-3.58" width="1.23" height="1.17" rx="0.22" fill="#8fc0d2"/><clipPath id="o204"><circle r="2.80"/></clipPath><circle r="2.80" fill="#a9d3e2"/><g clip-path="url(#o204)"><path d="M-3.52 -2.80Q-2.13 0 -3.52 2.80" fill="none" stroke="#e6f3f6" stroke-width="0.31"/><path d="M-2.35 -2.80Q-0.95 0 -2.35 2.80" fill="none" stroke="#e6f3f6" stroke-width="0.31"/><path d="M-1.17 -2.80Q0.22 0 -1.17 2.80" fill="none" stroke="#e6f3f6" stroke-width="0.31"/><path d="M0.00 -2.80Q1.40 0 0.00 2.80" fill="none" stroke="#e6f3f6" stroke-width="0.31"/><path d="M1.17 -2.80Q2.57 0 1.17 2.80" fill="none" stroke="#e6f3f6" stroke-width="0.31"/><path d="M2.35 -2.80Q3.75 0 2.35 2.80" fill="none" stroke="#e6f3f6" stroke-width="0.31"/><path d="M3.52 -2.80Q4.92 0 3.52 2.80" fill="none" stroke="#e6f3f6" stroke-width="0.31"/></g></g><g transform="translate(557.1 136.4) rotate(0)"><rect x="-1.03" y="-5.97" width="2.05" height="1.96" rx="0.37" fill="#c9bfb6"/><clipPath id="o205"><circle r="4.66"/></clipPath><circle r="4.66" fill="#efe8e0"/><g clip-path="url(#o205)"><circle cx="-1.86" cy="-1.63" r="0.79" fill="#c4b9b0"/><circle cx="1.86" cy="-1.63" r="0.79" fill="#c4b9b0"/><circle cx="0.00" cy="0.47" r="0.79" fill="#c4b9b0"/><circle cx="-1.86" cy="2.33" r="0.79" fill="#c4b9b0"/><circle cx="1.86" cy="2.33" r="0.79" fill="#c4b9b0"/></g></g><g transform="translate(565.3 132.0) rotate(0)"><rect x="-0.92" y="-5.37" width="1.85" height="1.76" rx="0.34" fill="#86ad84"/><clipPath id="o206"><circle r="4.19"/></clipPath><circle r="4.19" fill="#a9cba6"/><g clip-path="url(#o206)"><circle r="2.10" fill="none" stroke="#d4e6cc" stroke-width="0.92"/></g></g><g transform="translate(575.5 130.1) rotate(20)"><rect x="-1.33" y="-7.75" width="2.67" height="2.54" rx="0.48" fill="#e58d68"/><clipPath id="o207"><circle r="6.06"/></clipPath><circle r="6.06" fill="#f1a07c"/><g clip-path="url(#o207)"><path d="M-4.04 -6.06V6.06" stroke="#fbe3cc" stroke-width="0.97" stroke-dasharray="1.33 0.73"/><path d="M-1.35 -6.06V6.06" stroke="#fbe3cc" stroke-width="0.97" stroke-dasharray="1.33 0.73"/><path d="M1.35 -6.06V6.06" stroke="#fbe3cc" stroke-width="0.97" stroke-dasharray="1.33 0.73"/><path d="M4.04 -6.06V6.06" stroke="#fbe3cc" stroke-width="0.97" stroke-dasharray="1.33 0.73"/></g></g><g transform="translate(541.5 141.2) rotate(0)"><rect x="-1.03" y="-5.97" width="2.05" height="1.96" rx="0.37" fill="#eaa58c"/><clipPath id="o208"><circle r="4.66"/></clipPath><circle r="4.66" fill="#f3c0a8"/><g clip-path="url(#o208)"><circle cx="-1.17" cy="-0.93" r="2.33" fill="#f8d5c4" opacity=".6"/></g></g><g transform="translate(548.3 136.4) rotate(0)"><rect x="-0.54" y="-3.13" width="1.08" height="1.03" rx="0.20" fill="#7d3a25"/><clipPath id="o209"><circle r="2.45"/></clipPath><circle r="2.45" fill="#98492f"/><g clip-path="url(#o209)"><path d="M-2.45 -0.93 L-1.63 -0.29 L-0.82 -0.93 L0.00 -0.29 L0.82 -0.93 L1.63 -0.29 L2.45 -0.93" fill="none" stroke="#f7e6d8" stroke-width="0.34" stroke-linejoin="round"/><path d="M-2.45 0.22 L-1.63 0.86 L-0.82 0.22 L0.00 0.86 L0.82 0.22 L1.63 0.86 L2.45 0.22" fill="none" stroke="#f7e6d8" stroke-width="0.34" stroke-linejoin="round"/></g></g><g transform="translate(565.3 141.2) rotate(0)"><rect x="-0.97" y="-5.67" width="1.95" height="1.86" rx="0.35" fill="#b97b45"/><clipPath id="o210"><circle r="4.43"/></clipPath><circle r="4.43" fill="#f7e7cf"/><g clip-path="url(#o210)"><rect x="-4.43" y="-4.43" width="8.85" height="2.43" fill="#c98f58"/><rect x="-4.43" y="2.21" width="8.85" height="2.21" fill="#c98f58" opacity=".8"/></g></g><g transform="translate(550.3 147.5) rotate(0)"><rect x="-1.20" y="-7.01" width="2.41" height="2.30" rx="0.44" fill="#e0957a"/><clipPath id="o211"><circle r="5.48"/></clipPath><circle r="5.48" fill="#f2b094"/><g clip-path="url(#o211)"><circle cx="-1.10" cy="-1.10" r="2.46" fill="#f8d0bc" opacity=".5"/></g></g><g transform="translate(559.0 146.6) rotate(0)"><rect x="-0.85" y="-4.92" width="1.69" height="1.61" rx="0.31" fill="#8fc0d2"/><clipPath id="o212"><circle r="3.84"/></clipPath><circle r="3.84" fill="#a9d3e2"/><g clip-path="url(#o212)"><path d="M-4.84 -3.84Q-2.92 0 -4.84 3.84" fill="none" stroke="#e6f3f6" stroke-width="0.42"/><path d="M-3.23 -3.84Q-1.31 0 -3.23 3.84" fill="none" stroke="#e6f3f6" stroke-width="0.42"/><path d="M-1.61 -3.84Q0.31 0 -1.61 3.84" fill="none" stroke="#e6f3f6" stroke-width="0.42"/><path d="M0.00 -3.84Q1.92 0 0.00 3.84" fill="none" stroke="#e6f3f6" stroke-width="0.42"/><path d="M1.61 -3.84Q3.54 0 1.61 3.84" fill="none" stroke="#e6f3f6" stroke-width="0.42"/><path d="M3.23 -3.84Q5.15 0 3.23 3.84" fill="none" stroke="#e6f3f6" stroke-width="0.42"/><path d="M4.84 -3.84Q6.77 0 4.84 3.84" fill="none" stroke="#e6f3f6" stroke-width="0.42"/></g></g><g transform="translate(573.6 144.2) rotate(0)"><rect x="-0.85" y="-4.92" width="1.69" height="1.61" rx="0.31" fill="#86ad84"/><clipPath id="o213"><circle r="3.84"/></clipPath><circle r="3.84" fill="#a9cba6"/><g clip-path="url(#o213)"><circle r="1.92" fill="none" stroke="#d4e6cc" stroke-width="0.85"/></g></g><g transform="translate(566.8 149.5) rotate(0)"><rect x="-0.67" y="-3.88" width="1.33" height="1.27" rx="0.24" fill="#e9b070"/><clipPath id="o214"><circle r="3.03"/></clipPath><circle r="3.03" fill="#f6c98f"/><g clip-path="url(#o214)"><ellipse cx="-1.27" cy="0" rx="0.36" ry="2.57" fill="none" stroke="#fbe6c5" stroke-width="0.30"/><ellipse cx="0.00" cy="0" rx="0.36" ry="2.57" fill="none" stroke="#fbe6c5" stroke-width="0.30"/><ellipse cx="1.27" cy="0" rx="0.36" ry="2.57" fill="none" stroke="#fbe6c5" stroke-width="0.30"/></g></g><g transform="translate(540.1 153.9) rotate(0)"><rect x="-0.97" y="-5.67" width="1.95" height="1.86" rx="0.35" fill="#86ad84"/><clipPath id="o215"><circle r="4.43"/></clipPath><circle r="4.43" fill="#a9cba6"/><g clip-path="url(#o215)"><circle r="2.21" fill="none" stroke="#d4e6cc" stroke-width="0.97"/></g></g><g transform="translate(549.3 156.8) rotate(0)"><rect x="-0.69" y="-4.03" width="1.38" height="1.32" rx="0.25" fill="#c9bfb6"/><clipPath id="o216"><circle r="3.15"/></clipPath><circle r="3.15" fill="#efe8e0"/><g clip-path="url(#o216)"><circle cx="-1.26" cy="-1.10" r="0.53" fill="#c4b9b0"/><circle cx="1.26" cy="-1.10" r="0.53" fill="#c4b9b0"/><circle cx="0.00" cy="0.31" r="0.53" fill="#c4b9b0"/><circle cx="-1.26" cy="1.57" r="0.53" fill="#c4b9b0"/><circle cx="1.26" cy="1.57" r="0.53" fill="#c4b9b0"/></g></g><g transform="translate(557.1 153.4) rotate(0)"><rect x="-0.67" y="-3.88" width="1.33" height="1.27" rx="0.24" fill="#86ad84"/><clipPath id="o217"><circle r="3.03"/></clipPath><circle r="3.03" fill="#a9cba6"/><g clip-path="url(#o217)"><circle r="1.51" fill="none" stroke="#d4e6cc" stroke-width="0.67"/></g></g><g transform="translate(574.5 151.9) rotate(0)"><rect x="-0.74" y="-4.32" width="1.49" height="1.42" rx="0.27" fill="#c9bfb6"/><clipPath id="o218"><circle r="3.38"/></clipPath><circle r="3.38" fill="#efe8e0"/><g clip-path="url(#o218)"><circle cx="-1.35" cy="-1.18" r="0.57" fill="#c4b9b0"/><circle cx="1.35" cy="-1.18" r="0.57" fill="#c4b9b0"/><circle cx="0.00" cy="0.34" r="0.57" fill="#c4b9b0"/><circle cx="-1.35" cy="1.69" r="0.57" fill="#c4b9b0"/><circle cx="1.35" cy="1.69" r="0.57" fill="#c4b9b0"/></g></g><g transform="translate(566.3 157.7) rotate(25)"><rect x="-1.10" y="-6.41" width="2.20" height="2.10" rx="0.40" fill="#7d3a25"/><clipPath id="o219"><circle r="5.01"/></clipPath><circle r="5.01" fill="#98492f"/><g clip-path="url(#o219)"><path d="M-5.01 -1.90 L-3.34 -0.60 L-1.67 -1.90 L0.00 -0.60 L1.67 -1.90 L3.34 -0.60 L5.01 -1.90" fill="none" stroke="#f7e6d8" stroke-width="0.70" stroke-linejoin="round"/><path d="M-5.01 0.45 L-3.34 1.75 L-1.67 0.45 L0.00 1.75 L1.67 0.45 L3.34 1.75 L5.01 0.45" fill="none" stroke="#f7e6d8" stroke-width="0.70" stroke-linejoin="round"/></g></g><g transform="translate(557.5 160.2) rotate(0)"><rect x="-0.92" y="-5.37" width="1.85" height="1.76" rx="0.34" fill="#eaa58c"/><clipPath id="o220"><circle r="4.19"/></clipPath><circle r="4.19" fill="#f3c0a8"/><g clip-path="url(#o220)"><circle cx="-1.05" cy="-0.84" r="2.10" fill="#f8d5c4" opacity=".6"/></g></g><g transform="translate(576.5 162.1) rotate(0)"><rect x="-0.97" y="-5.67" width="1.95" height="1.86" rx="0.35" fill="#8fc0d2"/><clipPath id="o221"><circle r="4.43"/></clipPath><circle r="4.43" fill="#a9d3e2"/><g clip-path="url(#o221)"><path d="M-5.58 -4.43Q-3.36 0 -5.58 4.43" fill="none" stroke="#e6f3f6" stroke-width="0.49"/><path d="M-3.72 -4.43Q-1.51 0 -3.72 4.43" fill="none" stroke="#e6f3f6" stroke-width="0.49"/><path d="M-1.86 -4.43Q0.35 0 -1.86 4.43" fill="none" stroke="#e6f3f6" stroke-width="0.49"/><path d="M0.00 -4.43Q2.21 0 0.00 4.43" fill="none" stroke="#e6f3f6" stroke-width="0.49"/><path d="M1.86 -4.43Q4.07 0 1.86 4.43" fill="none" stroke="#e6f3f6" stroke-width="0.49"/><path d="M3.72 -4.43Q5.93 0 3.72 4.43" fill="none" stroke="#e6f3f6" stroke-width="0.49"/><path d="M5.58 -4.43Q7.79 0 5.58 4.43" fill="none" stroke="#e6f3f6" stroke-width="0.49"/></g></g><g transform="translate(544.9 164.5) rotate(0)"><rect x="-1.10" y="-6.41" width="2.20" height="2.10" rx="0.40" fill="#b97b45"/><clipPath id="o222"><circle r="5.01"/></clipPath><circle r="5.01" fill="#f7e7cf"/><g clip-path="url(#o222)"><rect x="-5.01" y="-5.01" width="10.02" height="2.76" fill="#c98f58"/><rect x="-5.01" y="2.50" width="10.02" height="2.50" fill="#c98f58" opacity=".8"/></g></g><g transform="translate(536.7 162.1) rotate(0)"><rect x="-0.49" y="-2.83" width="0.97" height="0.93" rx="0.18" fill="#8fc0d2"/><clipPath id="o223"><circle r="2.21"/></clipPath><circle r="2.21" fill="#a9d3e2"/><g clip-path="url(#o223)"><path d="M-2.79 -2.21Q-1.68 0 -2.79 2.21" fill="none" stroke="#e6f3f6" stroke-width="0.24"/><path d="M-1.86 -2.21Q-0.75 0 -1.86 2.21" fill="none" stroke="#e6f3f6" stroke-width="0.24"/><path d="M-0.93 -2.21Q0.18 0 -0.93 2.21" fill="none" stroke="#e6f3f6" stroke-width="0.24"/><path d="M0.00 -2.21Q1.11 0 0.00 2.21" fill="none" stroke="#e6f3f6" stroke-width="0.24"/><path d="M0.93 -2.21Q2.04 0 0.93 2.21" fill="none" stroke="#e6f3f6" stroke-width="0.24"/><path d="M1.86 -2.21Q2.97 0 1.86 2.21" fill="none" stroke="#e6f3f6" stroke-width="0.24"/><path d="M2.79 -2.21Q3.90 0 2.79 2.21" fill="none" stroke="#e6f3f6" stroke-width="0.24"/></g></g><g transform="translate(567.7 166.0) rotate(0)"><rect x="-0.72" y="-4.18" width="1.44" height="1.37" rx="0.26" fill="#eaa58c"/><clipPath id="o224"><circle r="3.26"/></clipPath><circle r="3.26" fill="#f3c0a8"/><g clip-path="url(#o224)"><circle cx="-0.82" cy="-0.65" r="1.63" fill="#f8d5c4" opacity=".6"/></g></g><g transform="translate(586.4 132.5) rotate(0)"><rect x="-0.77" y="-4.47" width="1.54" height="1.47" rx="0.28" fill="#e9b070"/><clipPath id="o225"><circle r="3.50"/></clipPath><circle r="3.50" fill="#f6c98f"/><g clip-path="url(#o225)"><ellipse cx="-1.47" cy="0" rx="0.42" ry="2.97" fill="none" stroke="#fbe6c5" stroke-width="0.35"/><ellipse cx="0.00" cy="0" rx="0.42" ry="2.97" fill="none" stroke="#fbe6c5" stroke-width="0.35"/><ellipse cx="1.47" cy="0" rx="0.42" ry="2.97" fill="none" stroke="#fbe6c5" stroke-width="0.35"/></g></g><g transform="translate(594.1 130.6) rotate(0)"><rect x="-0.62" y="-3.58" width="1.23" height="1.17" rx="0.22" fill="#8fc0d2"/><clipPath id="o226"><circle r="2.80"/></clipPath><circle r="2.80" fill="#a9d3e2"/><g clip-path="url(#o226)"><path d="M-3.52 -2.80Q-2.13 0 -3.52 2.80" fill="none" stroke="#e6f3f6" stroke-width="0.31"/><path d="M-2.35 -2.80Q-0.95 0 -2.35 2.80" fill="none" stroke="#e6f3f6" stroke-width="0.31"/><path d="M-1.17 -2.80Q0.22 0 -1.17 2.80" fill="none" stroke="#e6f3f6" stroke-width="0.31"/><path d="M0.00 -2.80Q1.40 0 0.00 2.80" fill="none" stroke="#e6f3f6" stroke-width="0.31"/><path d="M1.17 -2.80Q2.57 0 1.17 2.80" fill="none" stroke="#e6f3f6" stroke-width="0.31"/><path d="M2.35 -2.80Q3.75 0 2.35 2.80" fill="none" stroke="#e6f3f6" stroke-width="0.31"/><path d="M3.52 -2.80Q4.92 0 3.52 2.80" fill="none" stroke="#e6f3f6" stroke-width="0.31"/></g></g><g transform="translate(600.0 136.4) rotate(0)"><rect x="-1.03" y="-5.97" width="2.05" height="1.96" rx="0.37" fill="#c9bfb6"/><clipPath id="o227"><circle r="4.66"/></clipPath><circle r="4.66" fill="#efe8e0"/><g clip-path="url(#o227)"><circle cx="-1.86" cy="-1.63" r="0.79" fill="#c4b9b0"/><circle cx="1.86" cy="-1.63" r="0.79" fill="#c4b9b0"/><circle cx="0.00" cy="0.47" r="0.79" fill="#c4b9b0"/><circle cx="-1.86" cy="2.33" r="0.79" fill="#c4b9b0"/><circle cx="1.86" cy="2.33" r="0.79" fill="#c4b9b0"/></g></g><g transform="translate(608.2 132.0) rotate(0)"><rect x="-0.92" y="-5.37" width="1.85" height="1.76" rx="0.34" fill="#86ad84"/><clipPath id="o228"><circle r="4.19"/></clipPath><circle r="4.19" fill="#a9cba6"/><g clip-path="url(#o228)"><circle r="2.10" fill="none" stroke="#d4e6cc" stroke-width="0.92"/></g></g><g transform="translate(618.4 130.1) rotate(20)"><rect x="-1.33" y="-7.75" width="2.67" height="2.54" rx="0.48" fill="#e58d68"/><clipPath id="o229"><circle r="6.06"/></clipPath><circle r="6.06" fill="#f1a07c"/><g clip-path="url(#o229)"><path d="M-4.04 -6.06V6.06" stroke="#fbe3cc" stroke-width="0.97" stroke-dasharray="1.33 0.73"/><path d="M-1.35 -6.06V6.06" stroke="#fbe3cc" stroke-width="0.97" stroke-dasharray="1.33 0.73"/><path d="M1.35 -6.06V6.06" stroke="#fbe3cc" stroke-width="0.97" stroke-dasharray="1.33 0.73"/><path d="M4.04 -6.06V6.06" stroke="#fbe3cc" stroke-width="0.97" stroke-dasharray="1.33 0.73"/></g></g><g transform="translate(584.4 141.2) rotate(0)"><rect x="-1.03" y="-5.97" width="2.05" height="1.96" rx="0.37" fill="#eaa58c"/><clipPath id="o230"><circle r="4.66"/></clipPath><circle r="4.66" fill="#f3c0a8"/><g clip-path="url(#o230)"><circle cx="-1.17" cy="-0.93" r="2.33" fill="#f8d5c4" opacity=".6"/></g></g><g transform="translate(591.2 136.4) rotate(0)"><rect x="-0.54" y="-3.13" width="1.08" height="1.03" rx="0.20" fill="#7d3a25"/><clipPath id="o231"><circle r="2.45"/></clipPath><circle r="2.45" fill="#98492f"/><g clip-path="url(#o231)"><path d="M-2.45 -0.93 L-1.63 -0.29 L-0.82 -0.93 L0.00 -0.29 L0.82 -0.93 L1.63 -0.29 L2.45 -0.93" fill="none" stroke="#f7e6d8" stroke-width="0.34" stroke-linejoin="round"/><path d="M-2.45 0.22 L-1.63 0.86 L-0.82 0.22 L0.00 0.86 L0.82 0.22 L1.63 0.86 L2.45 0.22" fill="none" stroke="#f7e6d8" stroke-width="0.34" stroke-linejoin="round"/></g></g><g transform="translate(608.2 141.2) rotate(0)"><rect x="-0.97" y="-5.67" width="1.95" height="1.86" rx="0.35" fill="#b97b45"/><clipPath id="o232"><circle r="4.43"/></clipPath><circle r="4.43" fill="#f7e7cf"/><g clip-path="url(#o232)"><rect x="-4.43" y="-4.43" width="8.85" height="2.43" fill="#c98f58"/><rect x="-4.43" y="2.21" width="8.85" height="2.21" fill="#c98f58" opacity=".8"/></g></g><g transform="translate(593.2 147.5) rotate(0)"><rect x="-1.20" y="-7.01" width="2.41" height="2.30" rx="0.44" fill="#e0957a"/><clipPath id="o233"><circle r="5.48"/></clipPath><circle r="5.48" fill="#f2b094"/><g clip-path="url(#o233)"><circle cx="-1.10" cy="-1.10" r="2.46" fill="#f8d0bc" opacity=".5"/></g></g><g transform="translate(601.9 146.6) rotate(0)"><rect x="-0.85" y="-4.92" width="1.69" height="1.61" rx="0.31" fill="#8fc0d2"/><clipPath id="o234"><circle r="3.84"/></clipPath><circle r="3.84" fill="#a9d3e2"/><g clip-path="url(#o234)"><path d="M-4.84 -3.84Q-2.92 0 -4.84 3.84" fill="none" stroke="#e6f3f6" stroke-width="0.42"/><path d="M-3.23 -3.84Q-1.31 0 -3.23 3.84" fill="none" stroke="#e6f3f6" stroke-width="0.42"/><path d="M-1.61 -3.84Q0.31 0 -1.61 3.84" fill="none" stroke="#e6f3f6" stroke-width="0.42"/><path d="M0.00 -3.84Q1.92 0 0.00 3.84" fill="none" stroke="#e6f3f6" stroke-width="0.42"/><path d="M1.61 -3.84Q3.54 0 1.61 3.84" fill="none" stroke="#e6f3f6" stroke-width="0.42"/><path d="M3.23 -3.84Q5.15 0 3.23 3.84" fill="none" stroke="#e6f3f6" stroke-width="0.42"/><path d="M4.84 -3.84Q6.77 0 4.84 3.84" fill="none" stroke="#e6f3f6" stroke-width="0.42"/></g></g><g transform="translate(616.5 144.2) rotate(0)"><rect x="-0.85" y="-4.92" width="1.69" height="1.61" rx="0.31" fill="#86ad84"/><clipPath id="o235"><circle r="3.84"/></clipPath><circle r="3.84" fill="#a9cba6"/><g clip-path="url(#o235)"><circle r="1.92" fill="none" stroke="#d4e6cc" stroke-width="0.85"/></g></g><g transform="translate(609.7 149.5) rotate(0)"><rect x="-0.67" y="-3.88" width="1.33" height="1.27" rx="0.24" fill="#e9b070"/><clipPath id="o236"><circle r="3.03"/></clipPath><circle r="3.03" fill="#f6c98f"/><g clip-path="url(#o236)"><ellipse cx="-1.27" cy="0" rx="0.36" ry="2.57" fill="none" stroke="#fbe6c5" stroke-width="0.30"/><ellipse cx="0.00" cy="0" rx="0.36" ry="2.57" fill="none" stroke="#fbe6c5" stroke-width="0.30"/><ellipse cx="1.27" cy="0" rx="0.36" ry="2.57" fill="none" stroke="#fbe6c5" stroke-width="0.30"/></g></g><g transform="translate(583.0 153.9) rotate(0)"><rect x="-0.97" y="-5.67" width="1.95" height="1.86" rx="0.35" fill="#86ad84"/><clipPath id="o237"><circle r="4.43"/></clipPath><circle r="4.43" fill="#a9cba6"/><g clip-path="url(#o237)"><circle r="2.21" fill="none" stroke="#d4e6cc" stroke-width="0.97"/></g></g><g transform="translate(592.2 156.8) rotate(0)"><rect x="-0.69" y="-4.03" width="1.38" height="1.32" rx="0.25" fill="#c9bfb6"/><clipPath id="o238"><circle r="3.15"/></clipPath><circle r="3.15" fill="#efe8e0"/><g clip-path="url(#o238)"><circle cx="-1.26" cy="-1.10" r="0.53" fill="#c4b9b0"/><circle cx="1.26" cy="-1.10" r="0.53" fill="#c4b9b0"/><circle cx="0.00" cy="0.31" r="0.53" fill="#c4b9b0"/><circle cx="-1.26" cy="1.57" r="0.53" fill="#c4b9b0"/><circle cx="1.26" cy="1.57" r="0.53" fill="#c4b9b0"/></g></g><g transform="translate(600.0 153.4) rotate(0)"><rect x="-0.67" y="-3.88" width="1.33" height="1.27" rx="0.24" fill="#86ad84"/><clipPath id="o239"><circle r="3.03"/></clipPath><circle r="3.03" fill="#a9cba6"/><g clip-path="url(#o239)"><circle r="1.51" fill="none" stroke="#d4e6cc" stroke-width="0.67"/></g></g><g transform="translate(617.4 151.9) rotate(0)"><rect x="-0.74" y="-4.32" width="1.49" height="1.42" rx="0.27" fill="#c9bfb6"/><clipPath id="o240"><circle r="3.38"/></clipPath><circle r="3.38" fill="#efe8e0"/><g clip-path="url(#o240)"><circle cx="-1.35" cy="-1.18" r="0.57" fill="#c4b9b0"/><circle cx="1.35" cy="-1.18" r="0.57" fill="#c4b9b0"/><circle cx="0.00" cy="0.34" r="0.57" fill="#c4b9b0"/><circle cx="-1.35" cy="1.69" r="0.57" fill="#c4b9b0"/><circle cx="1.35" cy="1.69" r="0.57" fill="#c4b9b0"/></g></g><g transform="translate(609.2 157.7) rotate(25)"><rect x="-1.10" y="-6.41" width="2.20" height="2.10" rx="0.40" fill="#7d3a25"/><clipPath id="o241"><circle r="5.01"/></clipPath><circle r="5.01" fill="#98492f"/><g clip-path="url(#o241)"><path d="M-5.01 -1.90 L-3.34 -0.60 L-1.67 -1.90 L0.00 -0.60 L1.67 -1.90 L3.34 -0.60 L5.01 -1.90" fill="none" stroke="#f7e6d8" stroke-width="0.70" stroke-linejoin="round"/><path d="M-5.01 0.45 L-3.34 1.75 L-1.67 0.45 L0.00 1.75 L1.67 0.45 L3.34 1.75 L5.01 0.45" fill="none" stroke="#f7e6d8" stroke-width="0.70" stroke-linejoin="round"/></g></g><g transform="translate(600.5 160.2) rotate(0)"><rect x="-0.92" y="-5.37" width="1.85" height="1.76" rx="0.34" fill="#eaa58c"/><clipPath id="o242"><circle r="4.19"/></clipPath><circle r="4.19" fill="#f3c0a8"/><g clip-path="url(#o242)"><circle cx="-1.05" cy="-0.84" r="2.10" fill="#f8d5c4" opacity=".6"/></g></g><g transform="translate(619.4 162.1) rotate(0)"><rect x="-0.97" y="-5.67" width="1.95" height="1.86" rx="0.35" fill="#8fc0d2"/><clipPath id="o243"><circle r="4.43"/></clipPath><circle r="4.43" fill="#a9d3e2"/><g clip-path="url(#o243)"><path d="M-5.58 -4.43Q-3.36 0 -5.58 4.43" fill="none" stroke="#e6f3f6" stroke-width="0.49"/><path d="M-3.72 -4.43Q-1.51 0 -3.72 4.43" fill="none" stroke="#e6f3f6" stroke-width="0.49"/><path d="M-1.86 -4.43Q0.35 0 -1.86 4.43" fill="none" stroke="#e6f3f6" stroke-width="0.49"/><path d="M0.00 -4.43Q2.21 0 0.00 4.43" fill="none" stroke="#e6f3f6" stroke-width="0.49"/><path d="M1.86 -4.43Q4.07 0 1.86 4.43" fill="none" stroke="#e6f3f6" stroke-width="0.49"/><path d="M3.72 -4.43Q5.93 0 3.72 4.43" fill="none" stroke="#e6f3f6" stroke-width="0.49"/><path d="M5.58 -4.43Q7.79 0 5.58 4.43" fill="none" stroke="#e6f3f6" stroke-width="0.49"/></g></g><g transform="translate(587.8 164.5) rotate(0)"><rect x="-1.10" y="-6.41" width="2.20" height="2.10" rx="0.40" fill="#b97b45"/><clipPath id="o244"><circle r="5.01"/></clipPath><circle r="5.01" fill="#f7e7cf"/><g clip-path="url(#o244)"><rect x="-5.01" y="-5.01" width="10.02" height="2.76" fill="#c98f58"/><rect x="-5.01" y="2.50" width="10.02" height="2.50" fill="#c98f58" opacity=".8"/></g></g><g transform="translate(579.6 162.1) rotate(0)"><rect x="-0.49" y="-2.83" width="0.97" height="0.93" rx="0.18" fill="#8fc0d2"/><clipPath id="o245"><circle r="2.21"/></clipPath><circle r="2.21" fill="#a9d3e2"/><g clip-path="url(#o245)"><path d="M-2.79 -2.21Q-1.68 0 -2.79 2.21" fill="none" stroke="#e6f3f6" stroke-width="0.24"/><path d="M-1.86 -2.21Q-0.75 0 -1.86 2.21" fill="none" stroke="#e6f3f6" stroke-width="0.24"/><path d="M-0.93 -2.21Q0.18 0 -0.93 2.21" fill="none" stroke="#e6f3f6" stroke-width="0.24"/><path d="M0.00 -2.21Q1.11 0 0.00 2.21" fill="none" stroke="#e6f3f6" stroke-width="0.24"/><path d="M0.93 -2.21Q2.04 0 0.93 2.21" fill="none" stroke="#e6f3f6" stroke-width="0.24"/><path d="M1.86 -2.21Q2.97 0 1.86 2.21" fill="none" stroke="#e6f3f6" stroke-width="0.24"/><path d="M2.79 -2.21Q3.90 0 2.79 2.21" fill="none" stroke="#e6f3f6" stroke-width="0.24"/></g></g><g transform="translate(610.7 166.0) rotate(0)"><rect x="-0.72" y="-4.18" width="1.44" height="1.37" rx="0.26" fill="#eaa58c"/><clipPath id="o246"><circle r="3.26"/></clipPath><circle r="3.26" fill="#f3c0a8"/><g clip-path="url(#o246)"><circle cx="-0.82" cy="-0.65" r="1.63" fill="#f8d5c4" opacity=".6"/></g></g><g transform="translate(622.5 162.1) rotate(0)"><rect x="-0.49" y="-2.83" width="0.97" height="0.93" rx="0.18" fill="#8fc0d2"/><clipPath id="o247"><circle r="2.21"/></clipPath><circle r="2.21" fill="#a9d3e2"/><g clip-path="url(#o247)"><path d="M-2.79 -2.21Q-1.68 0 -2.79 2.21" fill="none" stroke="#e6f3f6" stroke-width="0.24"/><path d="M-1.86 -2.21Q-0.75 0 -1.86 2.21" fill="none" stroke="#e6f3f6" stroke-width="0.24"/><path d="M-0.93 -2.21Q0.18 0 -0.93 2.21" fill="none" stroke="#e6f3f6" stroke-width="0.24"/><path d="M0.00 -2.21Q1.11 0 0.00 2.21" fill="none" stroke="#e6f3f6" stroke-width="0.24"/><path d="M0.93 -2.21Q2.04 0 0.93 2.21" fill="none" stroke="#e6f3f6" stroke-width="0.24"/><path d="M1.86 -2.21Q2.97 0 1.86 2.21" fill="none" stroke="#e6f3f6" stroke-width="0.24"/><path d="M2.79 -2.21Q3.90 0 2.79 2.21" fill="none" stroke="#e6f3f6" stroke-width="0.24"/></g></g><g transform="translate(532.6 173.0) rotate(20)"><rect x="-1.33" y="-7.75" width="2.67" height="2.54" rx="0.48" fill="#e58d68"/><clipPath id="o248"><circle r="6.06"/></clipPath><circle r="6.06" fill="#f1a07c"/><g clip-path="url(#o248)"><path d="M-4.04 -6.06V6.06" stroke="#fbe3cc" stroke-width="0.97" stroke-dasharray="1.33 0.73"/><path d="M-1.35 -6.06V6.06" stroke="#fbe3cc" stroke-width="0.97" stroke-dasharray="1.33 0.73"/><path d="M1.35 -6.06V6.06" stroke="#fbe3cc" stroke-width="0.97" stroke-dasharray="1.33 0.73"/><path d="M4.04 -6.06V6.06" stroke="#fbe3cc" stroke-width="0.97" stroke-dasharray="1.33 0.73"/></g></g><g transform="translate(531.6 194.8) rotate(0)"><rect x="-0.74" y="-4.32" width="1.49" height="1.42" rx="0.27" fill="#c9bfb6"/><clipPath id="o249"><circle r="3.38"/></clipPath><circle r="3.38" fill="#efe8e0"/><g clip-path="url(#o249)"><circle cx="-1.35" cy="-1.18" r="0.57" fill="#c4b9b0"/><circle cx="1.35" cy="-1.18" r="0.57" fill="#c4b9b0"/><circle cx="0.00" cy="0.34" r="0.57" fill="#c4b9b0"/><circle cx="-1.35" cy="1.69" r="0.57" fill="#c4b9b0"/><circle cx="1.35" cy="1.69" r="0.57" fill="#c4b9b0"/></g></g><g transform="translate(533.6 205.0) rotate(0)"><rect x="-0.97" y="-5.67" width="1.95" height="1.86" rx="0.35" fill="#8fc0d2"/><clipPath id="o250"><circle r="4.43"/></clipPath><circle r="4.43" fill="#a9d3e2"/><g clip-path="url(#o250)"><path d="M-5.58 -4.43Q-3.36 0 -5.58 4.43" fill="none" stroke="#e6f3f6" stroke-width="0.49"/><path d="M-3.72 -4.43Q-1.51 0 -3.72 4.43" fill="none" stroke="#e6f3f6" stroke-width="0.49"/><path d="M-1.86 -4.43Q0.35 0 -1.86 4.43" fill="none" stroke="#e6f3f6" stroke-width="0.49"/><path d="M0.00 -4.43Q2.21 0 0.00 4.43" fill="none" stroke="#e6f3f6" stroke-width="0.49"/><path d="M1.86 -4.43Q4.07 0 1.86 4.43" fill="none" stroke="#e6f3f6" stroke-width="0.49"/><path d="M3.72 -4.43Q5.93 0 3.72 4.43" fill="none" stroke="#e6f3f6" stroke-width="0.49"/><path d="M5.58 -4.43Q7.79 0 5.58 4.43" fill="none" stroke="#e6f3f6" stroke-width="0.49"/></g></g><g transform="translate(543.5 175.4) rotate(0)"><rect x="-0.77" y="-4.47" width="1.54" height="1.47" rx="0.28" fill="#e9b070"/><clipPath id="o251"><circle r="3.50"/></clipPath><circle r="3.50" fill="#f6c98f"/><g clip-path="url(#o251)"><ellipse cx="-1.47" cy="0" rx="0.42" ry="2.97" fill="none" stroke="#fbe6c5" stroke-width="0.35"/><ellipse cx="0.00" cy="0" rx="0.42" ry="2.97" fill="none" stroke="#fbe6c5" stroke-width="0.35"/><ellipse cx="1.47" cy="0" rx="0.42" ry="2.97" fill="none" stroke="#fbe6c5" stroke-width="0.35"/></g></g><g transform="translate(551.2 173.5) rotate(0)"><rect x="-0.62" y="-3.58" width="1.23" height="1.17" rx="0.22" fill="#8fc0d2"/><clipPath id="o252"><circle r="2.80"/></clipPath><circle r="2.80" fill="#a9d3e2"/><g clip-path="url(#o252)"><path d="M-3.52 -2.80Q-2.13 0 -3.52 2.80" fill="none" stroke="#e6f3f6" stroke-width="0.31"/><path d="M-2.35 -2.80Q-0.95 0 -2.35 2.80" fill="none" stroke="#e6f3f6" stroke-width="0.31"/><path d="M-1.17 -2.80Q0.22 0 -1.17 2.80" fill="none" stroke="#e6f3f6" stroke-width="0.31"/><path d="M0.00 -2.80Q1.40 0 0.00 2.80" fill="none" stroke="#e6f3f6" stroke-width="0.31"/><path d="M1.17 -2.80Q2.57 0 1.17 2.80" fill="none" stroke="#e6f3f6" stroke-width="0.31"/><path d="M2.35 -2.80Q3.75 0 2.35 2.80" fill="none" stroke="#e6f3f6" stroke-width="0.31"/><path d="M3.52 -2.80Q4.92 0 3.52 2.80" fill="none" stroke="#e6f3f6" stroke-width="0.31"/></g></g><g transform="translate(557.1 179.3) rotate(0)"><rect x="-1.03" y="-5.97" width="2.05" height="1.96" rx="0.37" fill="#c9bfb6"/><clipPath id="o253"><circle r="4.66"/></clipPath><circle r="4.66" fill="#efe8e0"/><g clip-path="url(#o253)"><circle cx="-1.86" cy="-1.63" r="0.79" fill="#c4b9b0"/><circle cx="1.86" cy="-1.63" r="0.79" fill="#c4b9b0"/><circle cx="0.00" cy="0.47" r="0.79" fill="#c4b9b0"/><circle cx="-1.86" cy="2.33" r="0.79" fill="#c4b9b0"/><circle cx="1.86" cy="2.33" r="0.79" fill="#c4b9b0"/></g></g><g transform="translate(565.3 174.9) rotate(0)"><rect x="-0.92" y="-5.37" width="1.85" height="1.76" rx="0.34" fill="#86ad84"/><clipPath id="o254"><circle r="4.19"/></clipPath><circle r="4.19" fill="#a9cba6"/><g clip-path="url(#o254)"><circle r="2.10" fill="none" stroke="#d4e6cc" stroke-width="0.92"/></g></g><g transform="translate(575.5 173.0) rotate(20)"><rect x="-1.33" y="-7.75" width="2.67" height="2.54" rx="0.48" fill="#e58d68"/><clipPath id="o255"><circle r="6.06"/></clipPath><circle r="6.06" fill="#f1a07c"/><g clip-path="url(#o255)"><path d="M-4.04 -6.06V6.06" stroke="#fbe3cc" stroke-width="0.97" stroke-dasharray="1.33 0.73"/><path d="M-1.35 -6.06V6.06" stroke="#fbe3cc" stroke-width="0.97" stroke-dasharray="1.33 0.73"/><path d="M1.35 -6.06V6.06" stroke="#fbe3cc" stroke-width="0.97" stroke-dasharray="1.33 0.73"/><path d="M4.04 -6.06V6.06" stroke="#fbe3cc" stroke-width="0.97" stroke-dasharray="1.33 0.73"/></g></g><g transform="translate(541.5 184.2) rotate(0)"><rect x="-1.03" y="-5.97" width="2.05" height="1.96" rx="0.37" fill="#eaa58c"/><clipPath id="o256"><circle r="4.66"/></clipPath><circle r="4.66" fill="#f3c0a8"/><g clip-path="url(#o256)"><circle cx="-1.17" cy="-0.93" r="2.33" fill="#f8d5c4" opacity=".6"/></g></g><g transform="translate(548.3 179.3) rotate(0)"><rect x="-0.54" y="-3.13" width="1.08" height="1.03" rx="0.20" fill="#7d3a25"/><clipPath id="o257"><circle r="2.45"/></clipPath><circle r="2.45" fill="#98492f"/><g clip-path="url(#o257)"><path d="M-2.45 -0.93 L-1.63 -0.29 L-0.82 -0.93 L0.00 -0.29 L0.82 -0.93 L1.63 -0.29 L2.45 -0.93" fill="none" stroke="#f7e6d8" stroke-width="0.34" stroke-linejoin="round"/><path d="M-2.45 0.22 L-1.63 0.86 L-0.82 0.22 L0.00 0.86 L0.82 0.22 L1.63 0.86 L2.45 0.22" fill="none" stroke="#f7e6d8" stroke-width="0.34" stroke-linejoin="round"/></g></g><g transform="translate(565.3 184.2) rotate(0)"><rect x="-0.97" y="-5.67" width="1.95" height="1.86" rx="0.35" fill="#b97b45"/><clipPath id="o258"><circle r="4.43"/></clipPath><circle r="4.43" fill="#f7e7cf"/><g clip-path="url(#o258)"><rect x="-4.43" y="-4.43" width="8.85" height="2.43" fill="#c98f58"/><rect x="-4.43" y="2.21" width="8.85" height="2.21" fill="#c98f58" opacity=".8"/></g></g><g transform="translate(550.3 190.5) rotate(0)"><rect x="-1.20" y="-7.01" width="2.41" height="2.30" rx="0.44" fill="#e0957a"/><clipPath id="o259"><circle r="5.48"/></clipPath><circle r="5.48" fill="#f2b094"/><g clip-path="url(#o259)"><circle cx="-1.10" cy="-1.10" r="2.46" fill="#f8d0bc" opacity=".5"/></g></g><g transform="translate(559.0 189.5) rotate(0)"><rect x="-0.85" y="-4.92" width="1.69" height="1.61" rx="0.31" fill="#8fc0d2"/><clipPath id="o260"><circle r="3.84"/></clipPath><circle r="3.84" fill="#a9d3e2"/><g clip-path="url(#o260)"><path d="M-4.84 -3.84Q-2.92 0 -4.84 3.84" fill="none" stroke="#e6f3f6" stroke-width="0.42"/><path d="M-3.23 -3.84Q-1.31 0 -3.23 3.84" fill="none" stroke="#e6f3f6" stroke-width="0.42"/><path d="M-1.61 -3.84Q0.31 0 -1.61 3.84" fill="none" stroke="#e6f3f6" stroke-width="0.42"/><path d="M0.00 -3.84Q1.92 0 0.00 3.84" fill="none" stroke="#e6f3f6" stroke-width="0.42"/><path d="M1.61 -3.84Q3.54 0 1.61 3.84" fill="none" stroke="#e6f3f6" stroke-width="0.42"/><path d="M3.23 -3.84Q5.15 0 3.23 3.84" fill="none" stroke="#e6f3f6" stroke-width="0.42"/><path d="M4.84 -3.84Q6.77 0 4.84 3.84" fill="none" stroke="#e6f3f6" stroke-width="0.42"/></g></g><g transform="translate(573.6 187.1) rotate(0)"><rect x="-0.85" y="-4.92" width="1.69" height="1.61" rx="0.31" fill="#86ad84"/><clipPath id="o261"><circle r="3.84"/></clipPath><circle r="3.84" fill="#a9cba6"/><g clip-path="url(#o261)"><circle r="1.92" fill="none" stroke="#d4e6cc" stroke-width="0.85"/></g></g><g transform="translate(566.8 192.4) rotate(0)"><rect x="-0.67" y="-3.88" width="1.33" height="1.27" rx="0.24" fill="#e9b070"/><clipPath id="o262"><circle r="3.03"/></clipPath><circle r="3.03" fill="#f6c98f"/><g clip-path="url(#o262)"><ellipse cx="-1.27" cy="0" rx="0.36" ry="2.57" fill="none" stroke="#fbe6c5" stroke-width="0.30"/><ellipse cx="0.00" cy="0" rx="0.36" ry="2.57" fill="none" stroke="#fbe6c5" stroke-width="0.30"/><ellipse cx="1.27" cy="0" rx="0.36" ry="2.57" fill="none" stroke="#fbe6c5" stroke-width="0.30"/></g></g><g transform="translate(540.1 196.8) rotate(0)"><rect x="-0.97" y="-5.67" width="1.95" height="1.86" rx="0.35" fill="#86ad84"/><clipPath id="o263"><circle r="4.43"/></clipPath><circle r="4.43" fill="#a9cba6"/><g clip-path="url(#o263)"><circle r="2.21" fill="none" stroke="#d4e6cc" stroke-width="0.97"/></g></g><g transform="translate(549.3 199.7) rotate(0)"><rect x="-0.69" y="-4.03" width="1.38" height="1.32" rx="0.25" fill="#c9bfb6"/><clipPath id="o264"><circle r="3.15"/></clipPath><circle r="3.15" fill="#efe8e0"/><g clip-path="url(#o264)"><circle cx="-1.26" cy="-1.10" r="0.53" fill="#c4b9b0"/><circle cx="1.26" cy="-1.10" r="0.53" fill="#c4b9b0"/><circle cx="0.00" cy="0.31" r="0.53" fill="#c4b9b0"/><circle cx="-1.26" cy="1.57" r="0.53" fill="#c4b9b0"/><circle cx="1.26" cy="1.57" r="0.53" fill="#c4b9b0"/></g></g><g transform="translate(557.1 196.3) rotate(0)"><rect x="-0.67" y="-3.88" width="1.33" height="1.27" rx="0.24" fill="#86ad84"/><clipPath id="o265"><circle r="3.03"/></clipPath><circle r="3.03" fill="#a9cba6"/><g clip-path="url(#o265)"><circle r="1.51" fill="none" stroke="#d4e6cc" stroke-width="0.67"/></g></g><g transform="translate(574.5 194.8) rotate(0)"><rect x="-0.74" y="-4.32" width="1.49" height="1.42" rx="0.27" fill="#c9bfb6"/><clipPath id="o266"><circle r="3.38"/></clipPath><circle r="3.38" fill="#efe8e0"/><g clip-path="url(#o266)"><circle cx="-1.35" cy="-1.18" r="0.57" fill="#c4b9b0"/><circle cx="1.35" cy="-1.18" r="0.57" fill="#c4b9b0"/><circle cx="0.00" cy="0.34" r="0.57" fill="#c4b9b0"/><circle cx="-1.35" cy="1.69" r="0.57" fill="#c4b9b0"/><circle cx="1.35" cy="1.69" r="0.57" fill="#c4b9b0"/></g></g><g transform="translate(566.3 200.7) rotate(25)"><rect x="-1.10" y="-6.41" width="2.20" height="2.10" rx="0.40" fill="#7d3a25"/><clipPath id="o267"><circle r="5.01"/></clipPath><circle r="5.01" fill="#98492f"/><g clip-path="url(#o267)"><path d="M-5.01 -1.90 L-3.34 -0.60 L-1.67 -1.90 L0.00 -0.60 L1.67 -1.90 L3.34 -0.60 L5.01 -1.90" fill="none" stroke="#f7e6d8" stroke-width="0.70" stroke-linejoin="round"/><path d="M-5.01 0.45 L-3.34 1.75 L-1.67 0.45 L0.00 1.75 L1.67 0.45 L3.34 1.75 L5.01 0.45" fill="none" stroke="#f7e6d8" stroke-width="0.70" stroke-linejoin="round"/></g></g><g transform="translate(557.5 203.1) rotate(0)"><rect x="-0.92" y="-5.37" width="1.85" height="1.76" rx="0.34" fill="#eaa58c"/><clipPath id="o268"><circle r="4.19"/></clipPath><circle r="4.19" fill="#f3c0a8"/><g clip-path="url(#o268)"><circle cx="-1.05" cy="-0.84" r="2.10" fill="#f8d5c4" opacity=".6"/></g></g><g transform="translate(576.5 205.0) rotate(0)"><rect x="-0.97" y="-5.67" width="1.95" height="1.86" rx="0.35" fill="#8fc0d2"/><clipPath id="o269"><circle r="4.43"/></clipPath><circle r="4.43" fill="#a9d3e2"/><g clip-path="url(#o269)"><path d="M-5.58 -4.43Q-3.36 0 -5.58 4.43" fill="none" stroke="#e6f3f6" stroke-width="0.49"/><path d="M-3.72 -4.43Q-1.51 0 -3.72 4.43" fill="none" stroke="#e6f3f6" stroke-width="0.49"/><path d="M-1.86 -4.43Q0.35 0 -1.86 4.43" fill="none" stroke="#e6f3f6" stroke-width="0.49"/><path d="M0.00 -4.43Q2.21 0 0.00 4.43" fill="none" stroke="#e6f3f6" stroke-width="0.49"/><path d="M1.86 -4.43Q4.07 0 1.86 4.43" fill="none" stroke="#e6f3f6" stroke-width="0.49"/><path d="M3.72 -4.43Q5.93 0 3.72 4.43" fill="none" stroke="#e6f3f6" stroke-width="0.49"/><path d="M5.58 -4.43Q7.79 0 5.58 4.43" fill="none" stroke="#e6f3f6" stroke-width="0.49"/></g></g><g transform="translate(544.9 207.5) rotate(0)"><rect x="-1.10" y="-6.41" width="2.20" height="2.10" rx="0.40" fill="#b97b45"/><clipPath id="o270"><circle r="5.01"/></clipPath><circle r="5.01" fill="#f7e7cf"/><g clip-path="url(#o270)"><rect x="-5.01" y="-5.01" width="10.02" height="2.76" fill="#c98f58"/><rect x="-5.01" y="2.50" width="10.02" height="2.50" fill="#c98f58" opacity=".8"/></g></g><g transform="translate(536.7 205.0) rotate(0)"><rect x="-0.49" y="-2.83" width="0.97" height="0.93" rx="0.18" fill="#8fc0d2"/><clipPath id="o271"><circle r="2.21"/></clipPath><circle r="2.21" fill="#a9d3e2"/><g clip-path="url(#o271)"><path d="M-2.79 -2.21Q-1.68 0 -2.79 2.21" fill="none" stroke="#e6f3f6" stroke-width="0.24"/><path d="M-1.86 -2.21Q-0.75 0 -1.86 2.21" fill="none" stroke="#e6f3f6" stroke-width="0.24"/><path d="M-0.93 -2.21Q0.18 0 -0.93 2.21" fill="none" stroke="#e6f3f6" stroke-width="0.24"/><path d="M0.00 -2.21Q1.11 0 0.00 2.21" fill="none" stroke="#e6f3f6" stroke-width="0.24"/><path d="M0.93 -2.21Q2.04 0 0.93 2.21" fill="none" stroke="#e6f3f6" stroke-width="0.24"/><path d="M1.86 -2.21Q2.97 0 1.86 2.21" fill="none" stroke="#e6f3f6" stroke-width="0.24"/><path d="M2.79 -2.21Q3.90 0 2.79 2.21" fill="none" stroke="#e6f3f6" stroke-width="0.24"/></g></g><g transform="translate(567.7 208.9) rotate(0)"><rect x="-0.72" y="-4.18" width="1.44" height="1.37" rx="0.26" fill="#eaa58c"/><clipPath id="o272"><circle r="3.26"/></clipPath><circle r="3.26" fill="#f3c0a8"/><g clip-path="url(#o272)"><circle cx="-0.82" cy="-0.65" r="1.63" fill="#f8d5c4" opacity=".6"/></g></g><g transform="translate(586.4 175.4) rotate(0)"><rect x="-0.77" y="-4.47" width="1.54" height="1.47" rx="0.28" fill="#e9b070"/><clipPath id="o273"><circle r="3.50"/></clipPath><circle r="3.50" fill="#f6c98f"/><g clip-path="url(#o273)"><ellipse cx="-1.47" cy="0" rx="0.42" ry="2.97" fill="none" stroke="#fbe6c5" stroke-width="0.35"/><ellipse cx="0.00" cy="0" rx="0.42" ry="2.97" fill="none" stroke="#fbe6c5" stroke-width="0.35"/><ellipse cx="1.47" cy="0" rx="0.42" ry="2.97" fill="none" stroke="#fbe6c5" stroke-width="0.35"/></g></g><g transform="translate(594.1 173.5) rotate(0)"><rect x="-0.62" y="-3.58" width="1.23" height="1.17" rx="0.22" fill="#8fc0d2"/><clipPath id="o274"><circle r="2.80"/></clipPath><circle r="2.80" fill="#a9d3e2"/><g clip-path="url(#o274)"><path d="M-3.52 -2.80Q-2.13 0 -3.52 2.80" fill="none" stroke="#e6f3f6" stroke-width="0.31"/><path d="M-2.35 -2.80Q-0.95 0 -2.35 2.80" fill="none" stroke="#e6f3f6" stroke-width="0.31"/><path d="M-1.17 -2.80Q0.22 0 -1.17 2.80" fill="none" stroke="#e6f3f6" stroke-width="0.31"/><path d="M0.00 -2.80Q1.40 0 0.00 2.80" fill="none" stroke="#e6f3f6" stroke-width="0.31"/><path d="M1.17 -2.80Q2.57 0 1.17 2.80" fill="none" stroke="#e6f3f6" stroke-width="0.31"/><path d="M2.35 -2.80Q3.75 0 2.35 2.80" fill="none" stroke="#e6f3f6" stroke-width="0.31"/><path d="M3.52 -2.80Q4.92 0 3.52 2.80" fill="none" stroke="#e6f3f6" stroke-width="0.31"/></g></g><g transform="translate(600.0 179.3) rotate(0)"><rect x="-1.03" y="-5.97" width="2.05" height="1.96" rx="0.37" fill="#c9bfb6"/><clipPath id="o275"><circle r="4.66"/></clipPath><circle r="4.66" fill="#efe8e0"/><g clip-path="url(#o275)"><circle cx="-1.86" cy="-1.63" r="0.79" fill="#c4b9b0"/><circle cx="1.86" cy="-1.63" r="0.79" fill="#c4b9b0"/><circle cx="0.00" cy="0.47" r="0.79" fill="#c4b9b0"/><circle cx="-1.86" cy="2.33" r="0.79" fill="#c4b9b0"/><circle cx="1.86" cy="2.33" r="0.79" fill="#c4b9b0"/></g></g><g transform="translate(608.2 174.9) rotate(0)"><rect x="-0.92" y="-5.37" width="1.85" height="1.76" rx="0.34" fill="#86ad84"/><clipPath id="o276"><circle r="4.19"/></clipPath><circle r="4.19" fill="#a9cba6"/><g clip-path="url(#o276)"><circle r="2.10" fill="none" stroke="#d4e6cc" stroke-width="0.92"/></g></g><g transform="translate(618.4 173.0) rotate(20)"><rect x="-1.33" y="-7.75" width="2.67" height="2.54" rx="0.48" fill="#e58d68"/><clipPath id="o277"><circle r="6.06"/></clipPath><circle r="6.06" fill="#f1a07c"/><g clip-path="url(#o277)"><path d="M-4.04 -6.06V6.06" stroke="#fbe3cc" stroke-width="0.97" stroke-dasharray="1.33 0.73"/><path d="M-1.35 -6.06V6.06" stroke="#fbe3cc" stroke-width="0.97" stroke-dasharray="1.33 0.73"/><path d="M1.35 -6.06V6.06" stroke="#fbe3cc" stroke-width="0.97" stroke-dasharray="1.33 0.73"/><path d="M4.04 -6.06V6.06" stroke="#fbe3cc" stroke-width="0.97" stroke-dasharray="1.33 0.73"/></g></g><g transform="translate(584.4 184.2) rotate(0)"><rect x="-1.03" y="-5.97" width="2.05" height="1.96" rx="0.37" fill="#eaa58c"/><clipPath id="o278"><circle r="4.66"/></clipPath><circle r="4.66" fill="#f3c0a8"/><g clip-path="url(#o278)"><circle cx="-1.17" cy="-0.93" r="2.33" fill="#f8d5c4" opacity=".6"/></g></g><g transform="translate(591.2 179.3) rotate(0)"><rect x="-0.54" y="-3.13" width="1.08" height="1.03" rx="0.20" fill="#7d3a25"/><clipPath id="o279"><circle r="2.45"/></clipPath><circle r="2.45" fill="#98492f"/><g clip-path="url(#o279)"><path d="M-2.45 -0.93 L-1.63 -0.29 L-0.82 -0.93 L0.00 -0.29 L0.82 -0.93 L1.63 -0.29 L2.45 -0.93" fill="none" stroke="#f7e6d8" stroke-width="0.34" stroke-linejoin="round"/><path d="M-2.45 0.22 L-1.63 0.86 L-0.82 0.22 L0.00 0.86 L0.82 0.22 L1.63 0.86 L2.45 0.22" fill="none" stroke="#f7e6d8" stroke-width="0.34" stroke-linejoin="round"/></g></g><g transform="translate(608.2 184.2) rotate(0)"><rect x="-0.97" y="-5.67" width="1.95" height="1.86" rx="0.35" fill="#b97b45"/><clipPath id="o280"><circle r="4.43"/></clipPath><circle r="4.43" fill="#f7e7cf"/><g clip-path="url(#o280)"><rect x="-4.43" y="-4.43" width="8.85" height="2.43" fill="#c98f58"/><rect x="-4.43" y="2.21" width="8.85" height="2.21" fill="#c98f58" opacity=".8"/></g></g><g transform="translate(593.2 190.5) rotate(0)"><rect x="-1.20" y="-7.01" width="2.41" height="2.30" rx="0.44" fill="#e0957a"/><clipPath id="o281"><circle r="5.48"/></clipPath><circle r="5.48" fill="#f2b094"/><g clip-path="url(#o281)"><circle cx="-1.10" cy="-1.10" r="2.46" fill="#f8d0bc" opacity=".5"/></g></g><g transform="translate(601.9 189.5) rotate(0)"><rect x="-0.85" y="-4.92" width="1.69" height="1.61" rx="0.31" fill="#8fc0d2"/><clipPath id="o282"><circle r="3.84"/></clipPath><circle r="3.84" fill="#a9d3e2"/><g clip-path="url(#o282)"><path d="M-4.84 -3.84Q-2.92 0 -4.84 3.84" fill="none" stroke="#e6f3f6" stroke-width="0.42"/><path d="M-3.23 -3.84Q-1.31 0 -3.23 3.84" fill="none" stroke="#e6f3f6" stroke-width="0.42"/><path d="M-1.61 -3.84Q0.31 0 -1.61 3.84" fill="none" stroke="#e6f3f6" stroke-width="0.42"/><path d="M0.00 -3.84Q1.92 0 0.00 3.84" fill="none" stroke="#e6f3f6" stroke-width="0.42"/><path d="M1.61 -3.84Q3.54 0 1.61 3.84" fill="none" stroke="#e6f3f6" stroke-width="0.42"/><path d="M3.23 -3.84Q5.15 0 3.23 3.84" fill="none" stroke="#e6f3f6" stroke-width="0.42"/><path d="M4.84 -3.84Q6.77 0 4.84 3.84" fill="none" stroke="#e6f3f6" stroke-width="0.42"/></g></g><g transform="translate(616.5 187.1) rotate(0)"><rect x="-0.85" y="-4.92" width="1.69" height="1.61" rx="0.31" fill="#86ad84"/><clipPath id="o283"><circle r="3.84"/></clipPath><circle r="3.84" fill="#a9cba6"/><g clip-path="url(#o283)"><circle r="1.92" fill="none" stroke="#d4e6cc" stroke-width="0.85"/></g></g><g transform="translate(609.7 192.4) rotate(0)"><rect x="-0.67" y="-3.88" width="1.33" height="1.27" rx="0.24" fill="#e9b070"/><clipPath id="o284"><circle r="3.03"/></clipPath><circle r="3.03" fill="#f6c98f"/><g clip-path="url(#o284)"><ellipse cx="-1.27" cy="0" rx="0.36" ry="2.57" fill="none" stroke="#fbe6c5" stroke-width="0.30"/><ellipse cx="0.00" cy="0" rx="0.36" ry="2.57" fill="none" stroke="#fbe6c5" stroke-width="0.30"/><ellipse cx="1.27" cy="0" rx="0.36" ry="2.57" fill="none" stroke="#fbe6c5" stroke-width="0.30"/></g></g><g transform="translate(583.0 196.8) rotate(0)"><rect x="-0.97" y="-5.67" width="1.95" height="1.86" rx="0.35" fill="#86ad84"/><clipPath id="o285"><circle r="4.43"/></clipPath><circle r="4.43" fill="#a9cba6"/><g clip-path="url(#o285)"><circle r="2.21" fill="none" stroke="#d4e6cc" stroke-width="0.97"/></g></g><g transform="translate(592.2 199.7) rotate(0)"><rect x="-0.69" y="-4.03" width="1.38" height="1.32" rx="0.25" fill="#c9bfb6"/><clipPath id="o286"><circle r="3.15"/></clipPath><circle r="3.15" fill="#efe8e0"/><g clip-path="url(#o286)"><circle cx="-1.26" cy="-1.10" r="0.53" fill="#c4b9b0"/><circle cx="1.26" cy="-1.10" r="0.53" fill="#c4b9b0"/><circle cx="0.00" cy="0.31" r="0.53" fill="#c4b9b0"/><circle cx="-1.26" cy="1.57" r="0.53" fill="#c4b9b0"/><circle cx="1.26" cy="1.57" r="0.53" fill="#c4b9b0"/></g></g><g transform="translate(600.0 196.3) rotate(0)"><rect x="-0.67" y="-3.88" width="1.33" height="1.27" rx="0.24" fill="#86ad84"/><clipPath id="o287"><circle r="3.03"/></clipPath><circle r="3.03" fill="#a9cba6"/><g clip-path="url(#o287)"><circle r="1.51" fill="none" stroke="#d4e6cc" stroke-width="0.67"/></g></g><g transform="translate(617.4 194.8) rotate(0)"><rect x="-0.74" y="-4.32" width="1.49" height="1.42" rx="0.27" fill="#c9bfb6"/><clipPath id="o288"><circle r="3.38"/></clipPath><circle r="3.38" fill="#efe8e0"/><g clip-path="url(#o288)"><circle cx="-1.35" cy="-1.18" r="0.57" fill="#c4b9b0"/><circle cx="1.35" cy="-1.18" r="0.57" fill="#c4b9b0"/><circle cx="0.00" cy="0.34" r="0.57" fill="#c4b9b0"/><circle cx="-1.35" cy="1.69" r="0.57" fill="#c4b9b0"/><circle cx="1.35" cy="1.69" r="0.57" fill="#c4b9b0"/></g></g><g transform="translate(609.2 200.7) rotate(25)"><rect x="-1.10" y="-6.41" width="2.20" height="2.10" rx="0.40" fill="#7d3a25"/><clipPath id="o289"><circle r="5.01"/></clipPath><circle r="5.01" fill="#98492f"/><g clip-path="url(#o289)"><path d="M-5.01 -1.90 L-3.34 -0.60 L-1.67 -1.90 L0.00 -0.60 L1.67 -1.90 L3.34 -0.60 L5.01 -1.90" fill="none" stroke="#f7e6d8" stroke-width="0.70" stroke-linejoin="round"/><path d="M-5.01 0.45 L-3.34 1.75 L-1.67 0.45 L0.00 1.75 L1.67 0.45 L3.34 1.75 L5.01 0.45" fill="none" stroke="#f7e6d8" stroke-width="0.70" stroke-linejoin="round"/></g></g><g transform="translate(600.5 203.1) rotate(0)"><rect x="-0.92" y="-5.37" width="1.85" height="1.76" rx="0.34" fill="#eaa58c"/><clipPath id="o290"><circle r="4.19"/></clipPath><circle r="4.19" fill="#f3c0a8"/><g clip-path="url(#o290)"><circle cx="-1.05" cy="-0.84" r="2.10" fill="#f8d5c4" opacity=".6"/></g></g><g transform="translate(619.4 205.0) rotate(0)"><rect x="-0.97" y="-5.67" width="1.95" height="1.86" rx="0.35" fill="#8fc0d2"/><clipPath id="o291"><circle r="4.43"/></clipPath><circle r="4.43" fill="#a9d3e2"/><g clip-path="url(#o291)"><path d="M-5.58 -4.43Q-3.36 0 -5.58 4.43" fill="none" stroke="#e6f3f6" stroke-width="0.49"/><path d="M-3.72 -4.43Q-1.51 0 -3.72 4.43" fill="none" stroke="#e6f3f6" stroke-width="0.49"/><path d="M-1.86 -4.43Q0.35 0 -1.86 4.43" fill="none" stroke="#e6f3f6" stroke-width="0.49"/><path d="M0.00 -4.43Q2.21 0 0.00 4.43" fill="none" stroke="#e6f3f6" stroke-width="0.49"/><path d="M1.86 -4.43Q4.07 0 1.86 4.43" fill="none" stroke="#e6f3f6" stroke-width="0.49"/><path d="M3.72 -4.43Q5.93 0 3.72 4.43" fill="none" stroke="#e6f3f6" stroke-width="0.49"/><path d="M5.58 -4.43Q7.79 0 5.58 4.43" fill="none" stroke="#e6f3f6" stroke-width="0.49"/></g></g><g transform="translate(587.8 207.5) rotate(0)"><rect x="-1.10" y="-6.41" width="2.20" height="2.10" rx="0.40" fill="#b97b45"/><clipPath id="o292"><circle r="5.01"/></clipPath><circle r="5.01" fill="#f7e7cf"/><g clip-path="url(#o292)"><rect x="-5.01" y="-5.01" width="10.02" height="2.76" fill="#c98f58"/><rect x="-5.01" y="2.50" width="10.02" height="2.50" fill="#c98f58" opacity=".8"/></g></g><g transform="translate(579.6 205.0) rotate(0)"><rect x="-0.49" y="-2.83" width="0.97" height="0.93" rx="0.18" fill="#8fc0d2"/><clipPath id="o293"><circle r="2.21"/></clipPath><circle r="2.21" fill="#a9d3e2"/><g clip-path="url(#o293)"><path d="M-2.79 -2.21Q-1.68 0 -2.79 2.21" fill="none" stroke="#e6f3f6" stroke-width="0.24"/><path d="M-1.86 -2.21Q-0.75 0 -1.86 2.21" fill="none" stroke="#e6f3f6" stroke-width="0.24"/><path d="M-0.93 -2.21Q0.18 0 -0.93 2.21" fill="none" stroke="#e6f3f6" stroke-width="0.24"/><path d="M0.00 -2.21Q1.11 0 0.00 2.21" fill="none" stroke="#e6f3f6" stroke-width="0.24"/><path d="M0.93 -2.21Q2.04 0 0.93 2.21" fill="none" stroke="#e6f3f6" stroke-width="0.24"/><path d="M1.86 -2.21Q2.97 0 1.86 2.21" fill="none" stroke="#e6f3f6" stroke-width="0.24"/><path d="M2.79 -2.21Q3.90 0 2.79 2.21" fill="none" stroke="#e6f3f6" stroke-width="0.24"/></g></g><g transform="translate(610.7 208.9) rotate(0)"><rect x="-0.72" y="-4.18" width="1.44" height="1.37" rx="0.26" fill="#eaa58c"/><clipPath id="o294"><circle r="3.26"/></clipPath><circle r="3.26" fill="#f3c0a8"/><g clip-path="url(#o294)"><circle cx="-0.82" cy="-0.65" r="1.63" fill="#f8d5c4" opacity=".6"/></g></g><g transform="translate(622.5 205.0) rotate(0)"><rect x="-0.49" y="-2.83" width="0.97" height="0.93" rx="0.18" fill="#8fc0d2"/><clipPath id="o295"><circle r="2.21"/></clipPath><circle r="2.21" fill="#a9d3e2"/><g clip-path="url(#o295)"><path d="M-2.79 -2.21Q-1.68 0 -2.79 2.21" fill="none" stroke="#e6f3f6" stroke-width="0.24"/><path d="M-1.86 -2.21Q-0.75 0 -1.86 2.21" fill="none" stroke="#e6f3f6" stroke-width="0.24"/><path d="M-0.93 -2.21Q0.18 0 -0.93 2.21" fill="none" stroke="#e6f3f6" stroke-width="0.24"/><path d="M0.00 -2.21Q1.11 0 0.00 2.21" fill="none" stroke="#e6f3f6" stroke-width="0.24"/><path d="M0.93 -2.21Q2.04 0 0.93 2.21" fill="none" stroke="#e6f3f6" stroke-width="0.24"/><path d="M1.86 -2.21Q2.97 0 1.86 2.21" fill="none" stroke="#e6f3f6" stroke-width="0.24"/><path d="M2.79 -2.21Q3.90 0 2.79 2.21" fill="none" stroke="#e6f3f6" stroke-width="0.24"/></g></g><g transform="translate(532.6 215.9) rotate(20)"><rect x="-1.33" y="-7.75" width="2.67" height="2.54" rx="0.48" fill="#e58d68"/><clipPath id="o296"><circle r="6.06"/></clipPath><circle r="6.06" fill="#f1a07c"/><g clip-path="url(#o296)"><path d="M-4.04 -6.06V6.06" stroke="#fbe3cc" stroke-width="0.97" stroke-dasharray="1.33 0.73"/><path d="M-1.35 -6.06V6.06" stroke="#fbe3cc" stroke-width="0.97" stroke-dasharray="1.33 0.73"/><path d="M1.35 -6.06V6.06" stroke="#fbe3cc" stroke-width="0.97" stroke-dasharray="1.33 0.73"/><path d="M4.04 -6.06V6.06" stroke="#fbe3cc" stroke-width="0.97" stroke-dasharray="1.33 0.73"/></g></g><g transform="translate(543.5 218.3) rotate(0)"><rect x="-0.77" y="-4.47" width="1.54" height="1.47" rx="0.28" fill="#e9b070"/><clipPath id="o297"><circle r="3.50"/></clipPath><circle r="3.50" fill="#f6c98f"/><g clip-path="url(#o297)"><ellipse cx="-1.47" cy="0" rx="0.42" ry="2.97" fill="none" stroke="#fbe6c5" stroke-width="0.35"/><ellipse cx="0.00" cy="0" rx="0.42" ry="2.97" fill="none" stroke="#fbe6c5" stroke-width="0.35"/><ellipse cx="1.47" cy="0" rx="0.42" ry="2.97" fill="none" stroke="#fbe6c5" stroke-width="0.35"/></g></g><g transform="translate(551.2 216.4) rotate(0)"><rect x="-0.62" y="-3.58" width="1.23" height="1.17" rx="0.22" fill="#8fc0d2"/><clipPath id="o298"><circle r="2.80"/></clipPath><circle r="2.80" fill="#a9d3e2"/><g clip-path="url(#o298)"><path d="M-3.52 -2.80Q-2.13 0 -3.52 2.80" fill="none" stroke="#e6f3f6" stroke-width="0.31"/><path d="M-2.35 -2.80Q-0.95 0 -2.35 2.80" fill="none" stroke="#e6f3f6" stroke-width="0.31"/><path d="M-1.17 -2.80Q0.22 0 -1.17 2.80" fill="none" stroke="#e6f3f6" stroke-width="0.31"/><path d="M0.00 -2.80Q1.40 0 0.00 2.80" fill="none" stroke="#e6f3f6" stroke-width="0.31"/><path d="M1.17 -2.80Q2.57 0 1.17 2.80" fill="none" stroke="#e6f3f6" stroke-width="0.31"/><path d="M2.35 -2.80Q3.75 0 2.35 2.80" fill="none" stroke="#e6f3f6" stroke-width="0.31"/><path d="M3.52 -2.80Q4.92 0 3.52 2.80" fill="none" stroke="#e6f3f6" stroke-width="0.31"/></g></g><g transform="translate(557.1 222.2) rotate(0)"><rect x="-1.03" y="-5.97" width="2.05" height="1.96" rx="0.37" fill="#c9bfb6"/><clipPath id="o299"><circle r="4.66"/></clipPath><circle r="4.66" fill="#efe8e0"/><g clip-path="url(#o299)"><circle cx="-1.86" cy="-1.63" r="0.79" fill="#c4b9b0"/><circle cx="1.86" cy="-1.63" r="0.79" fill="#c4b9b0"/><circle cx="0.00" cy="0.47" r="0.79" fill="#c4b9b0"/><circle cx="-1.86" cy="2.33" r="0.79" fill="#c4b9b0"/><circle cx="1.86" cy="2.33" r="0.79" fill="#c4b9b0"/></g></g><g transform="translate(565.3 217.8) rotate(0)"><rect x="-0.92" y="-5.37" width="1.85" height="1.76" rx="0.34" fill="#86ad84"/><clipPath id="o300"><circle r="4.19"/></clipPath><circle r="4.19" fill="#a9cba6"/><g clip-path="url(#o300)"><circle r="2.10" fill="none" stroke="#d4e6cc" stroke-width="0.92"/></g></g><g transform="translate(575.5 215.9) rotate(20)"><rect x="-1.33" y="-7.75" width="2.67" height="2.54" rx="0.48" fill="#e58d68"/><clipPath id="o301"><circle r="6.06"/></clipPath><circle r="6.06" fill="#f1a07c"/><g clip-path="url(#o301)"><path d="M-4.04 -6.06V6.06" stroke="#fbe3cc" stroke-width="0.97" stroke-dasharray="1.33 0.73"/><path d="M-1.35 -6.06V6.06" stroke="#fbe3cc" stroke-width="0.97" stroke-dasharray="1.33 0.73"/><path d="M1.35 -6.06V6.06" stroke="#fbe3cc" stroke-width="0.97" stroke-dasharray="1.33 0.73"/><path d="M4.04 -6.06V6.06" stroke="#fbe3cc" stroke-width="0.97" stroke-dasharray="1.33 0.73"/></g></g><g transform="translate(541.5 227.1) rotate(0)"><rect x="-1.03" y="-5.97" width="2.05" height="1.96" rx="0.37" fill="#eaa58c"/><clipPath id="o302"><circle r="4.66"/></clipPath><circle r="4.66" fill="#f3c0a8"/><g clip-path="url(#o302)"><circle cx="-1.17" cy="-0.93" r="2.33" fill="#f8d5c4" opacity=".6"/></g></g><g transform="translate(548.3 222.2) rotate(0)"><rect x="-0.54" y="-3.13" width="1.08" height="1.03" rx="0.20" fill="#7d3a25"/><clipPath id="o303"><circle r="2.45"/></clipPath><circle r="2.45" fill="#98492f"/><g clip-path="url(#o303)"><path d="M-2.45 -0.93 L-1.63 -0.29 L-0.82 -0.93 L0.00 -0.29 L0.82 -0.93 L1.63 -0.29 L2.45 -0.93" fill="none" stroke="#f7e6d8" stroke-width="0.34" stroke-linejoin="round"/><path d="M-2.45 0.22 L-1.63 0.86 L-0.82 0.22 L0.00 0.86 L0.82 0.22 L1.63 0.86 L2.45 0.22" fill="none" stroke="#f7e6d8" stroke-width="0.34" stroke-linejoin="round"/></g></g><g transform="translate(565.3 227.1) rotate(0)"><rect x="-0.97" y="-5.67" width="1.95" height="1.86" rx="0.35" fill="#b97b45"/><clipPath id="o304"><circle r="4.43"/></clipPath><circle r="4.43" fill="#f7e7cf"/><g clip-path="url(#o304)"><rect x="-4.43" y="-4.43" width="8.85" height="2.43" fill="#c98f58"/><rect x="-4.43" y="2.21" width="8.85" height="2.21" fill="#c98f58" opacity=".8"/></g></g><g transform="translate(550.3 233.4) rotate(0)"><rect x="-1.20" y="-7.01" width="2.41" height="2.30" rx="0.44" fill="#e0957a"/><clipPath id="o305"><circle r="5.48"/></clipPath><circle r="5.48" fill="#f2b094"/><g clip-path="url(#o305)"><circle cx="-1.10" cy="-1.10" r="2.46" fill="#f8d0bc" opacity=".5"/></g></g><g transform="translate(559.0 232.4) rotate(0)"><rect x="-0.85" y="-4.92" width="1.69" height="1.61" rx="0.31" fill="#8fc0d2"/><clipPath id="o306"><circle r="3.84"/></clipPath><circle r="3.84" fill="#a9d3e2"/><g clip-path="url(#o306)"><path d="M-4.84 -3.84Q-2.92 0 -4.84 3.84" fill="none" stroke="#e6f3f6" stroke-width="0.42"/><path d="M-3.23 -3.84Q-1.31 0 -3.23 3.84" fill="none" stroke="#e6f3f6" stroke-width="0.42"/><path d="M-1.61 -3.84Q0.31 0 -1.61 3.84" fill="none" stroke="#e6f3f6" stroke-width="0.42"/><path d="M0.00 -3.84Q1.92 0 0.00 3.84" fill="none" stroke="#e6f3f6" stroke-width="0.42"/><path d="M1.61 -3.84Q3.54 0 1.61 3.84" fill="none" stroke="#e6f3f6" stroke-width="0.42"/><path d="M3.23 -3.84Q5.15 0 3.23 3.84" fill="none" stroke="#e6f3f6" stroke-width="0.42"/><path d="M4.84 -3.84Q6.77 0 4.84 3.84" fill="none" stroke="#e6f3f6" stroke-width="0.42"/></g></g><g transform="translate(573.6 230.0) rotate(0)"><rect x="-0.85" y="-4.92" width="1.69" height="1.61" rx="0.31" fill="#86ad84"/><clipPath id="o307"><circle r="3.84"/></clipPath><circle r="3.84" fill="#a9cba6"/><g clip-path="url(#o307)"><circle r="1.92" fill="none" stroke="#d4e6cc" stroke-width="0.85"/></g></g><g transform="translate(586.4 218.3) rotate(0)"><rect x="-0.77" y="-4.47" width="1.54" height="1.47" rx="0.28" fill="#e9b070"/><clipPath id="o308"><circle r="3.50"/></clipPath><circle r="3.50" fill="#f6c98f"/><g clip-path="url(#o308)"><ellipse cx="-1.47" cy="0" rx="0.42" ry="2.97" fill="none" stroke="#fbe6c5" stroke-width="0.35"/><ellipse cx="0.00" cy="0" rx="0.42" ry="2.97" fill="none" stroke="#fbe6c5" stroke-width="0.35"/><ellipse cx="1.47" cy="0" rx="0.42" ry="2.97" fill="none" stroke="#fbe6c5" stroke-width="0.35"/></g></g><g transform="translate(594.1 216.4) rotate(0)"><rect x="-0.62" y="-3.58" width="1.23" height="1.17" rx="0.22" fill="#8fc0d2"/><clipPath id="o309"><circle r="2.80"/></clipPath><circle r="2.80" fill="#a9d3e2"/><g clip-path="url(#o309)"><path d="M-3.52 -2.80Q-2.13 0 -3.52 2.80" fill="none" stroke="#e6f3f6" stroke-width="0.31"/><path d="M-2.35 -2.80Q-0.95 0 -2.35 2.80" fill="none" stroke="#e6f3f6" stroke-width="0.31"/><path d="M-1.17 -2.80Q0.22 0 -1.17 2.80" fill="none" stroke="#e6f3f6" stroke-width="0.31"/><path d="M0.00 -2.80Q1.40 0 0.00 2.80" fill="none" stroke="#e6f3f6" stroke-width="0.31"/><path d="M1.17 -2.80Q2.57 0 1.17 2.80" fill="none" stroke="#e6f3f6" stroke-width="0.31"/><path d="M2.35 -2.80Q3.75 0 2.35 2.80" fill="none" stroke="#e6f3f6" stroke-width="0.31"/><path d="M3.52 -2.80Q4.92 0 3.52 2.80" fill="none" stroke="#e6f3f6" stroke-width="0.31"/></g></g><g transform="translate(600.0 222.2) rotate(0)"><rect x="-1.03" y="-5.97" width="2.05" height="1.96" rx="0.37" fill="#c9bfb6"/><clipPath id="o310"><circle r="4.66"/></clipPath><circle r="4.66" fill="#efe8e0"/><g clip-path="url(#o310)"><circle cx="-1.86" cy="-1.63" r="0.79" fill="#c4b9b0"/><circle cx="1.86" cy="-1.63" r="0.79" fill="#c4b9b0"/><circle cx="0.00" cy="0.47" r="0.79" fill="#c4b9b0"/><circle cx="-1.86" cy="2.33" r="0.79" fill="#c4b9b0"/><circle cx="1.86" cy="2.33" r="0.79" fill="#c4b9b0"/></g></g><g transform="translate(608.2 217.8) rotate(0)"><rect x="-0.92" y="-5.37" width="1.85" height="1.76" rx="0.34" fill="#86ad84"/><clipPath id="o311"><circle r="4.19"/></clipPath><circle r="4.19" fill="#a9cba6"/><g clip-path="url(#o311)"><circle r="2.10" fill="none" stroke="#d4e6cc" stroke-width="0.92"/></g></g><g transform="translate(618.4 215.9) rotate(20)"><rect x="-1.33" y="-7.75" width="2.67" height="2.54" rx="0.48" fill="#e58d68"/><clipPath id="o312"><circle r="6.06"/></clipPath><circle r="6.06" fill="#f1a07c"/><g clip-path="url(#o312)"><path d="M-4.04 -6.06V6.06" stroke="#fbe3cc" stroke-width="0.97" stroke-dasharray="1.33 0.73"/><path d="M-1.35 -6.06V6.06" stroke="#fbe3cc" stroke-width="0.97" stroke-dasharray="1.33 0.73"/><path d="M1.35 -6.06V6.06" stroke="#fbe3cc" stroke-width="0.97" stroke-dasharray="1.33 0.73"/><path d="M4.04 -6.06V6.06" stroke="#fbe3cc" stroke-width="0.97" stroke-dasharray="1.33 0.73"/></g></g><g transform="translate(584.4 227.1) rotate(0)"><rect x="-1.03" y="-5.97" width="2.05" height="1.96" rx="0.37" fill="#eaa58c"/><clipPath id="o313"><circle r="4.66"/></clipPath><circle r="4.66" fill="#f3c0a8"/><g clip-path="url(#o313)"><circle cx="-1.17" cy="-0.93" r="2.33" fill="#f8d5c4" opacity=".6"/></g></g><g transform="translate(591.2 222.2) rotate(0)"><rect x="-0.54" y="-3.13" width="1.08" height="1.03" rx="0.20" fill="#7d3a25"/><clipPath id="o314"><circle r="2.45"/></clipPath><circle r="2.45" fill="#98492f"/><g clip-path="url(#o314)"><path d="M-2.45 -0.93 L-1.63 -0.29 L-0.82 -0.93 L0.00 -0.29 L0.82 -0.93 L1.63 -0.29 L2.45 -0.93" fill="none" stroke="#f7e6d8" stroke-width="0.34" stroke-linejoin="round"/><path d="M-2.45 0.22 L-1.63 0.86 L-0.82 0.22 L0.00 0.86 L0.82 0.22 L1.63 0.86 L2.45 0.22" fill="none" stroke="#f7e6d8" stroke-width="0.34" stroke-linejoin="round"/></g></g><g transform="translate(608.2 227.1) rotate(0)"><rect x="-0.97" y="-5.67" width="1.95" height="1.86" rx="0.35" fill="#b97b45"/><clipPath id="o315"><circle r="4.43"/></clipPath><circle r="4.43" fill="#f7e7cf"/><g clip-path="url(#o315)"><rect x="-4.43" y="-4.43" width="8.85" height="2.43" fill="#c98f58"/><rect x="-4.43" y="2.21" width="8.85" height="2.21" fill="#c98f58" opacity=".8"/></g></g><g transform="translate(593.2 233.4) rotate(0)"><rect x="-1.20" y="-7.01" width="2.41" height="2.30" rx="0.44" fill="#e0957a"/><clipPath id="o316"><circle r="5.48"/></clipPath><circle r="5.48" fill="#f2b094"/><g clip-path="url(#o316)"><circle cx="-1.10" cy="-1.10" r="2.46" fill="#f8d0bc" opacity=".5"/></g></g><g transform="translate(601.9 232.4) rotate(0)"><rect x="-0.85" y="-4.92" width="1.69" height="1.61" rx="0.31" fill="#8fc0d2"/><clipPath id="o317"><circle r="3.84"/></clipPath><circle r="3.84" fill="#a9d3e2"/><g clip-path="url(#o317)"><path d="M-4.84 -3.84Q-2.92 0 -4.84 3.84" fill="none" stroke="#e6f3f6" stroke-width="0.42"/><path d="M-3.23 -3.84Q-1.31 0 -3.23 3.84" fill="none" stroke="#e6f3f6" stroke-width="0.42"/><path d="M-1.61 -3.84Q0.31 0 -1.61 3.84" fill="none" stroke="#e6f3f6" stroke-width="0.42"/><path d="M0.00 -3.84Q1.92 0 0.00 3.84" fill="none" stroke="#e6f3f6" stroke-width="0.42"/><path d="M1.61 -3.84Q3.54 0 1.61 3.84" fill="none" stroke="#e6f3f6" stroke-width="0.42"/><path d="M3.23 -3.84Q5.15 0 3.23 3.84" fill="none" stroke="#e6f3f6" stroke-width="0.42"/><path d="M4.84 -3.84Q6.77 0 4.84 3.84" fill="none" stroke="#e6f3f6" stroke-width="0.42"/></g></g><g transform="translate(616.5 230.0) rotate(0)"><rect x="-0.85" y="-4.92" width="1.69" height="1.61" rx="0.31" fill="#86ad84"/><clipPath id="o318"><circle r="3.84"/></clipPath><circle r="3.84" fill="#a9cba6"/><g clip-path="url(#o318)"><circle r="1.92" fill="none" stroke="#d4e6cc" stroke-width="0.85"/></g></g></g>
<clipPath id="d2"><rect x="624.6" y="122.5" width="84.2" height="106.5" rx="0"/></clipPath><g clip-path="url(#d2)"><rect x="624.6" y="122.5" width="84.2" height="106.5" fill="#b5dce6"/><g fill="#3f6c78"><circle cx="633.7" cy="131.1" r="3.3"/><circle cx="650.1" cy="131.1" r="3.3"/><circle cx="666.6" cy="131.1" r="3.3"/><circle cx="683.0" cy="131.1" r="3.3"/><circle cx="699.5" cy="131.1" r="3.3"/><circle cx="633.7" cy="147.6" r="3.3"/><circle cx="650.1" cy="147.6" r="3.3"/><circle cx="666.6" cy="147.6" r="3.3"/><circle cx="683.0" cy="147.6" r="3.3"/><circle cx="699.5" cy="147.6" r="3.3"/><circle cx="633.7" cy="164.0" r="3.3"/><circle cx="650.1" cy="164.0" r="3.3"/><circle cx="666.6" cy="164.0" r="3.3"/><circle cx="683.0" cy="164.0" r="3.3"/><circle cx="699.5" cy="164.0" r="3.3"/><circle cx="633.7" cy="180.4" r="3.3"/><circle cx="650.1" cy="180.4" r="3.3"/><circle cx="666.6" cy="180.4" r="3.3"/><circle cx="683.0" cy="180.4" r="3.3"/><circle cx="699.5" cy="180.4" r="3.3"/><circle cx="633.7" cy="196.9" r="3.3"/><circle cx="650.1" cy="196.9" r="3.3"/><circle cx="666.6" cy="196.9" r="3.3"/><circle cx="683.0" cy="196.9" r="3.3"/><circle cx="699.5" cy="196.9" r="3.3"/><circle cx="633.7" cy="213.4" r="3.3"/><circle cx="650.1" cy="213.4" r="3.3"/><circle cx="666.6" cy="213.4" r="3.3"/><circle cx="683.0" cy="213.4" r="3.3"/><circle cx="699.5" cy="213.4" r="3.3"/><circle cx="633.7" cy="229.8" r="3.3"/><circle cx="650.1" cy="229.8" r="3.3"/><circle cx="666.6" cy="229.8" r="3.3"/><circle cx="683.0" cy="229.8" r="3.3"/><circle cx="699.5" cy="229.8" r="3.3"/><circle cx="625.5" cy="122.9" r="3.3"/><circle cx="642.0" cy="122.9" r="3.3"/><circle cx="658.4" cy="122.9" r="3.3"/><circle cx="674.9" cy="122.9" r="3.3"/><circle cx="691.3" cy="122.9" r="3.3"/><circle cx="707.8" cy="122.9" r="3.3"/><circle cx="625.5" cy="139.3" r="3.3"/><circle cx="642.0" cy="139.3" r="3.3"/><circle cx="658.4" cy="139.3" r="3.3"/><circle cx="674.9" cy="139.3" r="3.3"/><circle cx="691.3" cy="139.3" r="3.3"/><circle cx="707.8" cy="139.3" r="3.3"/><circle cx="625.5" cy="155.8" r="3.3"/><circle cx="642.0" cy="155.8" r="3.3"/><circle cx="658.4" cy="155.8" r="3.3"/><circle cx="674.9" cy="155.8" r="3.3"/><circle cx="691.3" cy="155.8" r="3.3"/><circle cx="707.8" cy="155.8" r="3.3"/><circle cx="625.5" cy="172.2" r="3.3"/><circle cx="642.0" cy="172.2" r="3.3"/><circle cx="658.4" cy="172.2" r="3.3"/><circle cx="674.9" cy="172.2" r="3.3"/><circle cx="691.3" cy="172.2" r="3.3"/><circle cx="707.8" cy="172.2" r="3.3"/><circle cx="625.5" cy="188.7" r="3.3"/><circle cx="642.0" cy="188.7" r="3.3"/><circle cx="658.4" cy="188.7" r="3.3"/><circle cx="674.9" cy="188.7" r="3.3"/><circle cx="691.3" cy="188.7" r="3.3"/><circle cx="707.8" cy="188.7" r="3.3"/><circle cx="625.5" cy="205.2" r="3.3"/><circle cx="642.0" cy="205.2" r="3.3"/><circle cx="658.4" cy="205.2" r="3.3"/><circle cx="674.9" cy="205.2" r="3.3"/><circle cx="691.3" cy="205.2" r="3.3"/><circle cx="707.8" cy="205.2" r="3.3"/><circle cx="625.5" cy="221.6" r="3.3"/><circle cx="642.0" cy="221.6" r="3.3"/><circle cx="658.4" cy="221.6" r="3.3"/><circle cx="674.9" cy="221.6" r="3.3"/><circle cx="691.3" cy="221.6" r="3.3"/><circle cx="707.8" cy="221.6" r="3.3"/></g></g>
<clipPath id="d3"><rect x="713.9" y="122.5" width="84.2" height="106.5" rx="0"/></clipPath><g clip-path="url(#d3)"><rect x="713.9" y="122.5" width="84.2" height="106.5" fill="#2f5d69"/><circle cx="733.9" cy="180.5" r="0.90" fill="#f6d9b0"/><circle cx="791.0" cy="173.0" r="0.90" fill="#8fb787"/><circle cx="719.4" cy="123.9" r="0.90" fill="#f6d9b0"/><circle cx="735.7" cy="147.5" r="0.90" fill="#8fb787"/><circle cx="753.5" cy="211.6" r="0.90" fill="#f6d9b0"/><circle cx="747.3" cy="214.2" r="0.90" fill="#e58d68"/><circle cx="767.4" cy="214.9" r="0.90" fill="#8fb787"/><circle cx="746.7" cy="124.1" r="0.90" fill="#e58d68"/><circle cx="727.3" cy="224.5" r="0.90" fill="#e58d68"/><circle cx="739.3" cy="125.8" r="0.90" fill="#f6d9b0"/><circle cx="753.7" cy="199.1" r="0.90" fill="#f6d9b0"/><circle cx="774.0" cy="220.6" r="0.90" fill="#f6d9b0"/><circle cx="775.2" cy="183.9" r="0.90" fill="#e58d68"/><circle cx="787.9" cy="132.9" r="0.90" fill="#e58d68"/><circle cx="755.6" cy="150.0" r="0.90" fill="#8fb787"/><circle cx="750.6" cy="189.2" r="0.90" fill="#f6d9b0"/><circle cx="749.4" cy="211.3" r="0.90" fill="#8fb787"/><circle cx="743.4" cy="184.8" r="0.90" fill="#8fb787"/><g transform="translate(721.8 127.0) rotate(-30)"><rect x="-1.58" y="-9.22" width="3.17" height="3.02" rx="0.58" fill="#a59b92"/><clipPath id="o319"><circle r="7.20"/></clipPath><circle r="7.20" fill="#bdb3aa"/><g clip-path="url(#o319)"><circle cx="-3.24" cy="-2.52" r="1.73" fill="#f1ece6"/><circle cx="2.16" cy="-3.24" r="1.73" fill="#f1ece6"/><circle cx="0.00" cy="0.36" r="1.73" fill="#f1ece6"/><circle cx="-3.60" cy="2.88" r="1.73" fill="#f1ece6"/><circle cx="3.60" cy="2.52" r="1.73" fill="#f1ece6"/></g></g><g transform="translate(744.5 124.8) rotate(10)"><rect x="-1.85" y="-10.75" width="3.70" height="3.53" rx="0.67" fill="#7fa878"/><clipPath id="o320"><circle r="8.40"/></clipPath><circle r="8.40" fill="#a9c79c"/><g clip-path="url(#o320)"><circle r="5.71" fill="none" stroke="#5f8a5c" stroke-width="1.68"/><circle r="3.02" fill="#e9efd9"/><circle r="1.43" fill="#5f8a5c"/></g></g><g transform="translate(785.2 131.6) rotate(20)"><rect x="-2.64" y="-15.36" width="5.28" height="5.04" rx="0.96" fill="#7d3a25"/><clipPath id="o321"><circle r="12.00"/></clipPath><circle r="12.00" fill="#98492f"/><g clip-path="url(#o321)"><path d="M-12.00 -4.56 L-8.00 -1.44 L-4.00 -4.56 L0.00 -1.44 L4.00 -4.56 L8.00 -1.44 L12.00 -4.56" fill="none" stroke="#f7e6d8" stroke-width="1.68" stroke-linejoin="round"/><path d="M-12.00 1.08 L-8.00 4.20 L-4.00 1.08 L0.00 4.20 L4.00 1.08 L8.00 4.20 L12.00 1.08" fill="none" stroke="#f7e6d8" stroke-width="1.68" stroke-linejoin="round"/></g></g><g transform="translate(732.0 147.4) rotate(0)"><rect x="-2.90" y="-16.90" width="5.81" height="5.54" rx="1.06" fill="#a87440"/><clipPath id="o322"><circle r="13.20"/></clipPath><circle r="13.20" fill="#c48c50"/><g clip-path="url(#o322)"><rect x="-13.20" y="-5.54" width="26.40" height="11.09" fill="#f8ecd2"/><circle cx="-11.00" cy="-2.64" r="0.92" fill="#c48c50"/><circle cx="-11.00" cy="2.64" r="0.92" fill="#c48c50"/><circle cx="-6.60" cy="-2.64" r="0.92" fill="#c48c50"/><circle cx="-6.60" cy="2.64" r="0.92" fill="#c48c50"/><circle cx="-2.20" cy="-2.64" r="0.92" fill="#c48c50"/><circle cx="-2.20" cy="2.64" r="0.92" fill="#c48c50"/><circle cx="2.20" cy="-2.64" r="0.92" fill="#c48c50"/><circle cx="2.20" cy="2.64" r="0.92" fill="#c48c50"/><circle cx="6.60" cy="-2.64" r="0.92" fill="#c48c50"/><circle cx="6.60" cy="2.64" r="0.92" fill="#c48c50"/><circle cx="11.00" cy="-2.64" r="0.92" fill="#c48c50"/><circle cx="11.00" cy="2.64" r="0.92" fill="#c48c50"/></g></g><g transform="translate(761.5 141.7) rotate(60)"><rect x="-2.53" y="-14.75" width="5.07" height="4.84" rx="0.92" fill="#8fc0d2"/><clipPath id="o323"><circle r="11.52"/></clipPath><circle r="11.52" fill="#a9d3e2"/><g clip-path="url(#o323)"><path d="M-14.52 -11.52Q-8.76 0 -14.52 11.52" fill="none" stroke="#e6f3f6" stroke-width="1.27"/><path d="M-9.68 -11.52Q-3.92 0 -9.68 11.52" fill="none" stroke="#e6f3f6" stroke-width="1.27"/><path d="M-4.84 -11.52Q0.92 0 -4.84 11.52" fill="none" stroke="#e6f3f6" stroke-width="1.27"/><path d="M0.00 -11.52Q5.76 0 0.00 11.52" fill="none" stroke="#e6f3f6" stroke-width="1.27"/><path d="M4.84 -11.52Q10.60 0 4.84 11.52" fill="none" stroke="#e6f3f6" stroke-width="1.27"/><path d="M9.68 -11.52Q15.44 0 9.68 11.52" fill="none" stroke="#e6f3f6" stroke-width="1.27"/><path d="M14.52 -11.52Q20.28 0 14.52 11.52" fill="none" stroke="#e6f3f6" stroke-width="1.27"/></g></g><g transform="translate(780.7 150.8) rotate(0)"><rect x="-2.01" y="-11.68" width="4.01" height="3.83" rx="0.73" fill="#eaa58c"/><clipPath id="o324"><circle r="9.12"/></clipPath><circle r="9.12" fill="#f3c0a8"/><g clip-path="url(#o324)"><circle cx="-2.28" cy="-1.82" r="4.56" fill="#f8d5c4" opacity=".6"/></g></g><g transform="translate(794.3 157.6) rotate(-60)"><rect x="-1.06" y="-6.14" width="2.11" height="2.02" rx="0.38" fill="#e9b070"/><clipPath id="o325"><circle r="4.80"/></clipPath><circle r="4.80" fill="#f6c98f"/><g clip-path="url(#o325)"><ellipse cx="-2.02" cy="0" rx="0.58" ry="4.08" fill="none" stroke="#fbe6c5" stroke-width="0.48"/><ellipse cx="0.00" cy="0" rx="0.58" ry="4.08" fill="none" stroke="#fbe6c5" stroke-width="0.48"/><ellipse cx="2.02" cy="0" rx="0.58" ry="4.08" fill="none" stroke="#fbe6c5" stroke-width="0.48"/></g></g><g transform="translate(717.3 166.7) rotate(0)"><rect x="-1.48" y="-8.60" width="2.96" height="2.82" rx="0.54" fill="#8fc0d2"/><clipPath id="o326"><circle r="6.72"/></clipPath><circle r="6.72" fill="#a9d3e2"/><g clip-path="url(#o326)"><path d="M-8.47 -6.72Q-5.11 0 -8.47 6.72" fill="none" stroke="#e6f3f6" stroke-width="0.74"/><path d="M-5.65 -6.72Q-2.29 0 -5.65 6.72" fill="none" stroke="#e6f3f6" stroke-width="0.74"/><path d="M-2.82 -6.72Q0.54 0 -2.82 6.72" fill="none" stroke="#e6f3f6" stroke-width="0.74"/><path d="M0.00 -6.72Q3.36 0 0.00 6.72" fill="none" stroke="#e6f3f6" stroke-width="0.74"/><path d="M2.82 -6.72Q6.18 0 2.82 6.72" fill="none" stroke="#e6f3f6" stroke-width="0.74"/><path d="M5.65 -6.72Q9.01 0 5.65 6.72" fill="none" stroke="#e6f3f6" stroke-width="0.74"/><path d="M8.47 -6.72Q11.83 0 8.47 6.72" fill="none" stroke="#e6f3f6" stroke-width="0.74"/></g></g><g transform="translate(761.5 169.4) rotate(75)"><rect x="-3.06" y="-17.82" width="6.13" height="5.85" rx="1.11" fill="#e58d68"/><clipPath id="o327"><circle r="13.92"/></clipPath><circle r="13.92" fill="#f1a07c"/><g clip-path="url(#o327)"><path d="M-9.28 -13.92V13.92" stroke="#fbe3cc" stroke-width="2.23" stroke-dasharray="3.06 1.67"/><path d="M-3.09 -13.92V13.92" stroke="#fbe3cc" stroke-width="2.23" stroke-dasharray="3.06 1.67"/><path d="M3.09 -13.92V13.92" stroke="#fbe3cc" stroke-width="2.23" stroke-dasharray="3.06 1.67"/><path d="M9.28 -13.92V13.92" stroke="#fbe3cc" stroke-width="2.23" stroke-dasharray="3.06 1.67"/></g></g><g transform="translate(736.5 172.3) rotate(30)"><rect x="-2.01" y="-11.68" width="4.01" height="3.83" rx="0.73" fill="#e9b070"/><clipPath id="o328"><circle r="9.12"/></clipPath><circle r="9.12" fill="#f6c98f"/><g clip-path="url(#o328)"><ellipse cx="-3.83" cy="0" rx="1.09" ry="7.75" fill="none" stroke="#fbe6c5" stroke-width="0.91"/><ellipse cx="0.00" cy="0" rx="1.09" ry="7.75" fill="none" stroke="#fbe6c5" stroke-width="0.91"/><ellipse cx="3.83" cy="0" rx="1.09" ry="7.75" fill="none" stroke="#fbe6c5" stroke-width="0.91"/></g></g><g transform="translate(787.5 171.2) rotate(70)"><rect x="-1.85" y="-10.75" width="3.70" height="3.53" rx="0.67" fill="#b8cfae"/><clipPath id="o329"><circle r="8.40"/></clipPath><circle r="8.40" fill="#eef2e4"/><g clip-path="url(#o329)"><circle cx="-3.78" cy="-2.94" r="1.68" fill="#8fb787"/><circle cx="2.52" cy="-3.78" r="1.68" fill="#8fb787"/><circle cx="0.00" cy="0.42" r="1.68" fill="#8fb787"/><circle cx="-4.20" cy="3.36" r="1.68" fill="#8fb787"/><circle cx="4.20" cy="2.94" r="1.68" fill="#8fb787"/><circle cx="0.00" cy="-5.88" r="1.68" fill="#8fb787"/><circle cx="0.00" cy="5.88" r="1.68" fill="#8fb787"/></g></g><g transform="translate(723.0 185.9) rotate(-40)"><rect x="-1.85" y="-10.75" width="3.70" height="3.53" rx="0.67" fill="#7d3a25"/><clipPath id="o330"><circle r="8.40"/></clipPath><circle r="8.40" fill="#98492f"/><g clip-path="url(#o330)"><path d="M-8.40 -3.19 L-5.60 -1.01 L-2.80 -3.19 L0.00 -1.01 L2.80 -3.19 L5.60 -1.01 L8.40 -3.19" fill="none" stroke="#f7e6d8" stroke-width="1.18" stroke-linejoin="round"/><path d="M-8.40 0.76 L-5.60 2.94 L-2.80 0.76 L0.00 2.94 L2.80 0.76 L5.60 2.94 L8.40 0.76" fill="none" stroke="#f7e6d8" stroke-width="1.18" stroke-linejoin="round"/></g></g><g transform="translate(741.1 195.0) rotate(0)"><rect x="-2.22" y="-12.90" width="4.44" height="4.23" rx="0.81" fill="#eaa58c"/><clipPath id="o331"><circle r="10.08"/></clipPath><circle r="10.08" fill="#f3c0a8"/><g clip-path="url(#o331)"><circle cx="-2.52" cy="-2.02" r="5.04" fill="#f8d5c4" opacity=".6"/></g></g><g transform="translate(787.5 193.8) rotate(0)"><rect x="-2.22" y="-12.90" width="4.44" height="4.23" rx="0.81" fill="#a87440"/><clipPath id="o332"><circle r="10.08"/></clipPath><circle r="10.08" fill="#c48c50"/><g clip-path="url(#o332)"><rect x="-10.08" y="-4.23" width="20.16" height="8.47" fill="#f8ecd2"/><circle cx="-8.40" cy="-2.02" r="0.71" fill="#c48c50"/><circle cx="-8.40" cy="2.02" r="0.71" fill="#c48c50"/><circle cx="-5.04" cy="-2.02" r="0.71" fill="#c48c50"/><circle cx="-5.04" cy="2.02" r="0.71" fill="#c48c50"/><circle cx="-1.68" cy="-2.02" r="0.71" fill="#c48c50"/><circle cx="-1.68" cy="2.02" r="0.71" fill="#c48c50"/><circle cx="1.68" cy="-2.02" r="0.71" fill="#c48c50"/><circle cx="1.68" cy="2.02" r="0.71" fill="#c48c50"/><circle cx="5.04" cy="-2.02" r="0.71" fill="#c48c50"/><circle cx="5.04" cy="2.02" r="0.71" fill="#c48c50"/><circle cx="8.40" cy="-2.02" r="0.71" fill="#c48c50"/><circle cx="8.40" cy="2.02" r="0.71" fill="#c48c50"/></g></g><g transform="translate(767.1 200.6) rotate(20)"><rect x="-2.01" y="-11.68" width="4.01" height="3.83" rx="0.73" fill="#7fa878"/><clipPath id="o333"><circle r="9.12"/></clipPath><circle r="9.12" fill="#a9c79c"/><g clip-path="url(#o333)"><circle r="6.20" fill="none" stroke="#5f8a5c" stroke-width="1.82"/><circle r="3.28" fill="#e9efd9"/><circle r="1.55" fill="#5f8a5c"/></g></g><g transform="translate(720.7 209.7) rotate(10)"><rect x="-2.38" y="-13.83" width="4.75" height="4.54" rx="0.86" fill="#e58d68"/><clipPath id="o334"><circle r="10.80"/></clipPath><circle r="10.80" fill="#f1a07c"/><g clip-path="url(#o334)"><path d="M-7.20 -10.80V10.80" stroke="#fbe3cc" stroke-width="1.73" stroke-dasharray="2.38 1.30"/><path d="M-2.40 -10.80V10.80" stroke="#fbe3cc" stroke-width="1.73" stroke-dasharray="2.38 1.30"/><path d="M2.40 -10.80V10.80" stroke="#fbe3cc" stroke-width="1.73" stroke-dasharray="2.38 1.30"/><path d="M7.20 -10.80V10.80" stroke="#fbe3cc" stroke-width="1.73" stroke-dasharray="2.38 1.30"/></g></g><g transform="translate(744.5 224.4) rotate(-20)"><rect x="-2.11" y="-12.29" width="4.22" height="4.03" rx="0.77" fill="#7fa878"/><clipPath id="o335"><circle r="9.60"/></clipPath><circle r="9.60" fill="#a9c79c"/><g clip-path="url(#o335)"><circle r="6.53" fill="none" stroke="#5f8a5c" stroke-width="1.92"/><circle r="3.46" fill="#e9efd9"/><circle r="1.63" fill="#5f8a5c"/></g></g><g transform="translate(764.9 222.1) rotate(-40)"><rect x="-1.85" y="-10.75" width="3.70" height="3.53" rx="0.67" fill="#a59b92"/><clipPath id="o336"><circle r="8.40"/></clipPath><circle r="8.40" fill="#bdb3aa"/><g clip-path="url(#o336)"><circle cx="-3.78" cy="-2.94" r="2.02" fill="#f1ece6"/><circle cx="2.52" cy="-3.78" r="2.02" fill="#f1ece6"/><circle cx="0.00" cy="0.42" r="2.02" fill="#f1ece6"/><circle cx="-4.20" cy="3.36" r="2.02" fill="#f1ece6"/><circle cx="4.20" cy="2.94" r="2.02" fill="#f1ece6"/></g></g><g transform="translate(784.1 216.5) rotate(60)"><rect x="-1.58" y="-9.22" width="3.17" height="3.02" rx="0.58" fill="#e9b070"/><clipPath id="o337"><circle r="7.20"/></clipPath><circle r="7.20" fill="#f6c98f"/><g clip-path="url(#o337)"><ellipse cx="-3.02" cy="0" rx="0.86" ry="6.12" fill="none" stroke="#fbe6c5" stroke-width="0.72"/><ellipse cx="0.00" cy="0" rx="0.86" ry="6.12" fill="none" stroke="#fbe6c5" stroke-width="0.72"/><ellipse cx="3.02" cy="0" rx="0.86" ry="6.12" fill="none" stroke="#fbe6c5" stroke-width="0.72"/></g></g><g transform="translate(798.8 209.7) rotate(0)"><rect x="-0.84" y="-4.92" width="1.69" height="1.61" rx="0.31" fill="#8fc0d2"/><clipPath id="o338"><circle r="3.84"/></clipPath><circle r="3.84" fill="#a9d3e2"/><g clip-path="url(#o338)"><path d="M-4.84 -3.84Q-2.92 0 -4.84 3.84" fill="none" stroke="#e6f3f6" stroke-width="0.42"/><path d="M-3.23 -3.84Q-1.31 0 -3.23 3.84" fill="none" stroke="#e6f3f6" stroke-width="0.42"/><path d="M-1.61 -3.84Q0.31 0 -1.61 3.84" fill="none" stroke="#e6f3f6" stroke-width="0.42"/><path d="M0.00 -3.84Q1.92 0 0.00 3.84" fill="none" stroke="#e6f3f6" stroke-width="0.42"/><path d="M1.61 -3.84Q3.53 0 1.61 3.84" fill="none" stroke="#e6f3f6" stroke-width="0.42"/><path d="M3.23 -3.84Q5.15 0 3.23 3.84" fill="none" stroke="#e6f3f6" stroke-width="0.42"/><path d="M4.84 -3.84Q6.76 0 4.84 3.84" fill="none" stroke="#e6f3f6" stroke-width="0.42"/></g></g><g transform="translate(721.8 230.1) rotate(0)"><rect x="-0.95" y="-5.53" width="1.90" height="1.81" rx="0.35" fill="#a59b92"/><clipPath id="o339"><circle r="4.32"/></clipPath><circle r="4.32" fill="#bdb3aa"/><g clip-path="url(#o339)"><circle cx="-1.94" cy="-1.51" r="1.04" fill="#f1ece6"/><circle cx="1.30" cy="-1.94" r="1.04" fill="#f1ece6"/><circle cx="0.00" cy="0.22" r="1.04" fill="#f1ece6"/><circle cx="-2.16" cy="1.73" r="1.04" fill="#f1ece6"/><circle cx="2.16" cy="1.51" r="1.04" fill="#f1ece6"/></g></g><g transform="translate(800.0 123.6) rotate(0)"><rect x="-0.74" y="-4.30" width="1.48" height="1.41" rx="0.27" fill="#eaa58c"/><clipPath id="o340"><circle r="3.36"/></clipPath><circle r="3.36" fill="#f3c0a8"/><g clip-path="url(#o340)"><circle cx="-0.84" cy="-0.67" r="1.68" fill="#f8d5c4" opacity=".6"/></g></g></g>
<clipPath id="d4"><rect x="803.0" y="122.5" width="84.2" height="106.5" rx="0"/></clipPath><g clip-path="url(#d4)"><rect x="803.0" y="122.5" width="84.2" height="106.5" fill="#6b8159"/><circle cx="819.3" cy="124.8" r="2.1" fill="#b9d1a6"/><circle cx="819.3" cy="124.8" r=".75" fill="#7f9a6c"/><circle cx="851.7" cy="125.9" r="2.1" fill="#b9d1a6"/><circle cx="851.7" cy="125.9" r=".75" fill="#7f9a6c"/><circle cx="881.6" cy="128.2" r="2.1" fill="#b9d1a6"/><circle cx="881.6" cy="128.2" r=".75" fill="#7f9a6c"/><circle cx="841.9" cy="134.5" r="2.1" fill="#b9d1a6"/><circle cx="841.9" cy="134.5" r=".75" fill="#7f9a6c"/><circle cx="862.3" cy="131.6" r="2.1" fill="#b9d1a6"/><circle cx="862.3" cy="131.6" r=".75" fill="#7f9a6c"/><circle cx="875.9" cy="139.0" r="2.1" fill="#b9d1a6"/><circle cx="875.9" cy="139.0" r=".75" fill="#7f9a6c"/><circle cx="818.9" cy="144.0" r="2.1" fill="#b9d1a6"/><circle cx="818.9" cy="144.0" r=".75" fill="#7f9a6c"/><circle cx="843.5" cy="154.2" r="2.1" fill="#b9d1a6"/><circle cx="843.5" cy="154.2" r=".75" fill="#7f9a6c"/><circle cx="858.3" cy="152.6" r="2.1" fill="#b9d1a6"/><circle cx="858.3" cy="152.6" r=".75" fill="#7f9a6c"/><circle cx="880.4" cy="159.9" r="2.1" fill="#b9d1a6"/><circle cx="880.4" cy="159.9" r=".75" fill="#7f9a6c"/><circle cx="813.6" cy="164.8" r="2.1" fill="#b9d1a6"/><circle cx="813.6" cy="164.8" r=".75" fill="#7f9a6c"/><circle cx="864.6" cy="163.7" r="2.1" fill="#b9d1a6"/><circle cx="864.6" cy="163.7" r=".75" fill="#7f9a6c"/><circle cx="830.6" cy="170.1" r="2.1" fill="#b9d1a6"/><circle cx="830.6" cy="170.1" r=".75" fill="#7f9a6c"/><circle cx="846.0" cy="176.8" r="2.1" fill="#b9d1a6"/><circle cx="846.0" cy="176.8" r=".75" fill="#7f9a6c"/><circle cx="808.0" cy="180.9" r="2.1" fill="#b9d1a6"/><circle cx="808.0" cy="180.9" r=".75" fill="#7f9a6c"/><circle cx="868.0" cy="186.6" r="2.1" fill="#b9d1a6"/><circle cx="868.0" cy="186.6" r=".75" fill="#7f9a6c"/><circle cx="821.1" cy="193.2" r="2.1" fill="#b9d1a6"/><circle cx="821.1" cy="193.2" r=".75" fill="#7f9a6c"/><circle cx="845.8" cy="194.3" r="2.1" fill="#b9d1a6"/><circle cx="845.8" cy="194.3" r=".75" fill="#7f9a6c"/><circle cx="834.0" cy="202.4" r="2.1" fill="#b9d1a6"/><circle cx="834.0" cy="202.4" r=".75" fill="#7f9a6c"/><circle cx="859.6" cy="201.8" r="2.1" fill="#b9d1a6"/><circle cx="859.6" cy="201.8" r=".75" fill="#7f9a6c"/><circle cx="879.8" cy="202.4" r="2.1" fill="#b9d1a6"/><circle cx="879.8" cy="202.4" r=".75" fill="#7f9a6c"/><circle cx="819.3" cy="210.4" r="2.1" fill="#b9d1a6"/><circle cx="819.3" cy="210.4" r=".75" fill="#7f9a6c"/><circle cx="851.7" cy="211.9" r="2.1" fill="#b9d1a6"/><circle cx="851.7" cy="211.9" r=".75" fill="#7f9a6c"/><circle cx="862.3" cy="216.9" r="2.1" fill="#b9d1a6"/><circle cx="862.3" cy="216.9" r=".75" fill="#7f9a6c"/><circle cx="881.6" cy="213.8" r="2.1" fill="#b9d1a6"/><circle cx="881.6" cy="213.8" r=".75" fill="#7f9a6c"/><circle cx="841.9" cy="220.6" r="2.1" fill="#b9d1a6"/><circle cx="841.9" cy="220.6" r=".75" fill="#7f9a6c"/><circle cx="875.9" cy="225.5" r="2.1" fill="#b9d1a6"/><circle cx="875.9" cy="225.5" r=".75" fill="#7f9a6c"/><circle cx="818.9" cy="229.6" r="2.1" fill="#b9d1a6"/><circle cx="818.9" cy="229.6" r=".75" fill="#7f9a6c"/></g>
<rect x="535.7" y="233.4" width="84.2" height="106.9" rx="0" fill="#6f9270"/><rect x="538.7" y="236.4" width="78.2" height="100.9" rx="0" fill="#fff"/>
<rect x="624.6" y="233.4" width="84.2" height="106.9" rx="0" fill="#1d585d"/><rect x="627.6" y="236.4" width="78.2" height="100.9" rx="0" fill="#fff"/>
<rect x="713.9" y="233.4" width="84.2" height="106.9" rx="0" fill="#fdebcf"/><rect x="716.9" y="236.4" width="78.2" height="100.9" rx="0" fill="#fff"/>
<rect x="803.0" y="233.4" width="84.2" height="106.9" rx="0" fill="#dcf2f1"/><rect x="806.0" y="236.4" width="78.2" height="100.9" rx="0" fill="#fff"/>
<rect x="535.7" y="345.4" width="84.2" height="53.3" rx="5.6" fill="#484848"/>
<rect x="624.6" y="345.4" width="84.2" height="53.3" rx="5.6" fill="#484848"/>
<rect x="713.9" y="345.4" width="84.2" height="53.3" rx="0" fill="#484848"/>
<rect x="803.0" y="345.4" width="84.2" height="53.3" rx="0" fill="#484848"/>
<rect x="535.7" y="403.6" width="84.2" height="53.8" rx="5.6" fill="#484848"/>
<rect x="624.6" y="403.6" width="84.2" height="53.8" rx="5.6" fill="#484848"/>
<rect x="713.9" y="403.6" width="84.2" height="53.8" rx="0" fill="#484848"/>
<rect x="803.0" y="403.6" width="84.2" height="53.8" rx="0" fill="#484848"/>
<rect x="535.1" y="403.40000000000003" width="85.4" height="54.4" fill="none" stroke="#8f8f8f" stroke-width="1.1"/>
<rect x="531.5" y="400.6" width="6.2" height="6.2" fill="#fff" stroke="#a8a8a8" stroke-width=".9"/>
<rect x="616.5" y="400.6" width="6.2" height="6.2" fill="#fff" stroke="#a8a8a8" stroke-width=".9"/>
<rect x="531.5" y="454.4" width="6.2" height="6.2" fill="#fff" stroke="#a8a8a8" stroke-width=".9"/>
<rect x="616.5" y="454.4" width="6.2" height="6.2" fill="#fff" stroke="#a8a8a8" stroke-width=".9"/>
<path d="M561.3 430.8H594.3M577.8 414.8V446.8" stroke="#7c7c7c" stroke-width=".9"/>
<circle cx="600.9" cy="436.4" r="18.6" fill="#b6b663" fill-opacity=".95"/>
<path d="M600.6 436.8v10.6l2.5-2.2 1.9 4.2 1.9-.8-1.9-4.1h3.6z" fill="#fff" stroke="#222" stroke-width=".8" stroke-linejoin="round"/>
<rect x="543.1" y="380.2" width="68.4" height="13.8" rx="2.5" fill="#2b3033"/>
<text x="577.3" y="389.9" text-anchor="middle" font-size="7.4" fill="#fff" stroke="#fff" stroke-width=".15" word-spacing="1.2">1.5 in x 0.95 in</text>
<rect x="41" y="61" width="959" height="15" fill="#f5f5f5"/>
<rect x="41" y="61" width="16" height="547" fill="#f5f5f5"/>
<path d="M57.00 62V76M64.03 72.5V76M71.07 72.5V76M78.11 72.5V76M85.14 70.5V76M92.17 72.5V76M99.21 72.5V76M106.25 72.5V76M113.28 62V76M120.31 72.5V76M127.35 72.5V76M134.38 72.5V76M141.42 70.5V76M148.45 72.5V76M155.49 72.5V76M162.53 72.5V76M169.56 62V76M176.59 72.5V76M183.63 72.5V76M190.66 72.5V76M197.70 70.5V76M204.74 72.5V76M211.77 72.5V76M218.81 72.5V76M225.84 62V76M232.88 72.5V76M239.91 72.5V76M246.94 72.5V76M253.98 70.5V76M261.01 72.5V76M268.05 72.5V76M275.09 72.5V76M282.12 62V76M289.15 72.5V76M296.19 72.5V76M303.23 72.5V76M310.26 70.5V76M317.30 72.5V76M324.33 72.5V76M331.37 72.5V76M338.40 62V76M345.44 72.5V76M352.47 72.5V76M359.50 72.5V76M366.54 70.5V76M373.57 72.5V76M380.61 72.5V76M387.64 72.5V76M394.68 62V76M401.72 72.5V76M408.75 72.5V76M415.79 72.5V76M422.82 70.5V76M429.86 72.5V76M436.89 72.5V76M443.93 72.5V76M450.96 62V76M458.00 72.5V76M465.03 72.5V76M472.06 72.5V76M479.10 70.5V76M486.13 72.5V76M493.17 72.5V76M500.20 72.5V76M507.24 62V76M514.28 72.5V76M521.31 72.5V76M528.35 72.5V76M535.38 70.5V76M542.41 72.5V76M549.45 72.5V76M556.49 72.5V76M563.52 62V76M570.56 72.5V76M577.59 72.5V76M584.62 72.5V76M591.66 70.5V76M598.70 72.5V76M605.73 72.5V76M612.76 72.5V76M619.80 62V76M626.84 72.5V76M633.87 72.5V76M640.90 72.5V76M647.94 70.5V76M654.98 72.5V76M662.01 72.5V76M669.04 72.5V76M676.08 62V76M683.12 72.5V76M690.15 72.5V76M697.19 72.5V76M704.22 70.5V76M711.25 72.5V76M718.29 72.5V76M725.33 72.5V76M732.36 62V76M739.39 72.5V76M746.43 72.5V76M753.47 72.5V76M760.50 70.5V76M767.53 72.5V76M774.57 72.5V76M781.61 72.5V76M788.64 62V76M795.68 72.5V76M802.71 72.5V76M809.75 72.5V76M816.78 70.5V76M823.82 72.5V76M830.85 72.5V76M837.88 72.5V76M844.92 62V76M851.96 72.5V76M858.99 72.5V76M866.02 72.5V76M873.06 70.5V76M880.10 72.5V76M887.13 72.5V76M894.16 72.5V76M901.20 62V76M908.24 72.5V76M915.27 72.5V76M922.31 72.5V76M929.34 70.5V76M936.38 72.5V76M943.41 72.5V76M950.45 72.5V76M957.48 62V76M964.51 72.5V76M971.55 72.5V76M978.59 72.5V76M985.62 70.5V76M992.65 72.5V76M999.69 72.5V76M41 76.30H57M53.5 83.33H57M53.5 90.37H57M53.5 97.41H57M51.5 104.44H57M53.5 111.47H57M53.5 118.51H57M53.5 125.55H57M41 132.58H57M53.5 139.62H57M53.5 146.65H57M53.5 153.69H57M51.5 160.72H57M53.5 167.75H57M53.5 174.79H57M53.5 181.82H57M41 188.86H57M53.5 195.89H57M53.5 202.93H57M53.5 209.96H57M51.5 217.00H57M53.5 224.04H57M53.5 231.07H57M53.5 238.11H57M41 245.14H57M53.5 252.18H57M53.5 259.21H57M53.5 266.25H57M51.5 273.28H57M53.5 280.31H57M53.5 287.35H57M53.5 294.38H57M41 301.42H57M53.5 308.45H57M53.5 315.49H57M53.5 322.52H57M51.5 329.56H57M53.5 336.60H57M53.5 343.63H57M53.5 350.67H57M41 357.70H57M53.5 364.74H57M53.5 371.77H57M53.5 378.81H57M51.5 385.84H57M53.5 392.88H57M53.5 399.91H57M53.5 406.94H57M41 413.98H57M53.5 421.02H57M53.5 428.05H57M53.5 435.09H57M51.5 442.12H57M53.5 449.16H57M53.5 456.19H57M53.5 463.23H57M41 470.26H57M53.5 477.30H57M53.5 484.33H57M53.5 491.37H57M51.5 498.40H57M53.5 505.44H57M53.5 512.47H57M53.5 519.50H57M41 526.54H57M53.5 533.58H57M53.5 540.61H57M53.5 547.64H57M51.5 554.68H57M53.5 561.72H57M53.5 568.75H57M53.5 575.78H57M41 582.82H57M53.5 589.86H57M53.5 596.89H57M53.5 603.92H57" stroke="#c2c2c2" stroke-width="1" fill="none"/>
<text x="59.4" y="69.9" font-size="7.4" fill="#4a4a4a">0</text>
<text x="115.7" y="69.9" font-size="7.4" fill="#4a4a4a">1</text>
<text x="172.0" y="69.9" font-size="7.4" fill="#4a4a4a">2</text>
<text x="228.2" y="69.9" font-size="7.4" fill="#4a4a4a">3</text>
<text x="284.5" y="69.9" font-size="7.4" fill="#4a4a4a">4</text>
<text x="340.8" y="69.9" font-size="7.4" fill="#4a4a4a">5</text>
<text x="397.1" y="69.9" font-size="7.4" fill="#4a4a4a">6</text>
<text x="453.4" y="69.9" font-size="7.4" fill="#4a4a4a">7</text>
<text x="509.6" y="69.9" font-size="7.4" fill="#4a4a4a">8</text>
<text x="565.9" y="69.9" font-size="7.4" fill="#4a4a4a">9</text>
<text x="622.2" y="69.9" font-size="7.4" fill="#4a4a4a">10</text>
<text x="678.5" y="69.9" font-size="7.4" fill="#4a4a4a">11</text>
<text x="734.8" y="69.9" font-size="7.4" fill="#4a4a4a">12</text>
<text x="791.0" y="69.9" font-size="7.4" fill="#4a4a4a">13</text>
<text x="847.3" y="69.9" font-size="7.4" fill="#4a4a4a">14</text>
<text x="903.6" y="69.9" font-size="7.4" fill="#4a4a4a">15</text>
<text x="959.9" y="69.9" font-size="7.4" fill="#4a4a4a">16</text>
<text transform="translate(49.3,78.9) rotate(-90)" text-anchor="end" font-size="7.2" fill="#606060">0</text>
<text transform="translate(49.3,135.2) rotate(-90)" text-anchor="end" font-size="7.2" fill="#606060">1</text>
<text transform="translate(49.3,191.5) rotate(-90)" text-anchor="end" font-size="7.2" fill="#606060">2</text>
<text transform="translate(49.3,247.7) rotate(-90)" text-anchor="end" font-size="7.2" fill="#606060">3</text>
<text transform="translate(49.3,304.0) rotate(-90)" text-anchor="end" font-size="7.2" fill="#606060">4</text>
<text transform="translate(49.3,360.3) rotate(-90)" text-anchor="end" font-size="7.2" fill="#606060">5</text>
<text transform="translate(49.3,416.6) rotate(-90)" text-anchor="end" font-size="7.2" fill="#606060">6</text>
<text transform="translate(49.3,472.9) rotate(-90)" text-anchor="end" font-size="7.2" fill="#606060">7</text>
<text transform="translate(49.3,529.1) rotate(-90)" text-anchor="end" font-size="7.2" fill="#606060">8</text>
<text transform="translate(49.3,585.4) rotate(-90)" text-anchor="end" font-size="7.2" fill="#606060">9</text>
<!-- scrollbars -->
<rect x="999.5" y="61" width="12.5" height="547" fill="#f6f6f6"/>
<rect x="1000" y="72" width="8.8" height="20" fill="#bdbdbd"/>
<path d="M1002 68.300l2.400-2.800 2.400 2.800z" fill="#444"/>
<path d="M1002 600l2.400 2.800 2.400-2.800z" fill="#444"/>
<rect x="41" y="608" width="971" height="10" fill="#f1f1f1"/>
<rect x="1000" y="606" width="12" height="12" fill="#dcdcdc"/>
<rect x="53" y="609" width="62" height="9" fill="#c1c1c1"/>
<path d="M48 610.500l-2.500 2.500 2.500 2.500z" fill="#444"/>
<path d="M995 610.500l2.500 2.500-2.500 2.500z" fill="#444"/>
<!-- zoom control -->
<rect x="68" y="581" width="66" height="18" rx="2" fill="#ededed" fill-opacity=".7"/>
<circle cx="75" cy="592" r="5.500" fill="none" stroke="#bcbcbc" stroke-width="1"/><path d="M72.500 592h5" stroke="#bcbcbc" stroke-width="1"/>
<circle cx="124" cy="592" r="5.500" fill="none" stroke="#bcbcbc" stroke-width="1"/><path d="M121.500 592h5M124 589.500v5" stroke="#bcbcbc" stroke-width="1"/>
<text x="83.5" y="596.6" font-size="12.4" fill="#bdbdbd">125%</text>

</svg>
<div id="hdr" class="abs">
<svg class="abs" style="left:12px;top:9px" width="16" height="12" viewBox="0 0 16 12"><path d="M0 1.6H15.2M0 5.8H15.2M0 10H15.2" stroke="#fff" stroke-width="1.3"/></svg>
<span style="left:41.5px;font-size:10.3px">Canvas</span>
<span style="left:373.5px;font-size:10.45px;top:.8px">Mim-Jenkinson-Craft-with-Sarah-Christmas-Stickers*</span>
<svg class="abs" style="left:918px;top:0px" width="20" height="24" viewBox="0 0 20 24"><path d="M9.500 9.200c-2.700 .3-3.800 2.200-3.800 4.600 0 2.300-.8 3.300-2 4.400h11.600c-1.200-1.100-2-2.100-2-4.400 0-2.400-1.100-4.300-3.800-4.600z" fill="none" stroke="#fff" stroke-width="1.150" stroke-linejoin="round"/><path d="M8.100 19.600a1.500 1.500 0 0 0 2.800 0z" fill="#fff"/><circle cx="9.500" cy="7.200" r="5.500" fill="#d9531e"/><text x="9.500" y="9.300" font-size="5.800" font-weight="bold" fill="#fff" text-anchor="middle" font-family="Liberation Sans, sans-serif">14</text></svg>
<span style="left:942.3px;font-size:10.4px">My Stuff</span>
<span style="left:988.2px;font-size:10.1px">Save</span>
<span style="left:1025.5px;font-size:9px;color:#c9ccce">|</span>
<span style="left:1043.2px;font-size:10.3px">Maker</span>
<svg class="abs" style="left:1078px;top:12px" width="9" height="6" viewBox="0 0 9 6"><path d="M.7.800l3.800 3.900L8.300.800" fill="none" stroke="#fff" stroke-width="1.100"/></svg>
<div class="abs" style="left:1110px;top:5px;width:82px;height:20px;border-radius:10px;background:#0c7a5e;text-align:center;font-size:7.7px;font-weight:bold;line-height:20px;color:#fff">Make It</div>
</div>
<div id="side" class="abs"></div>
<div class="sb" style="top:38px"><svg width="14" height="14" viewBox="0 0 14 14"><circle cx="7" cy="7" r="6" fill="none" stroke="#3c4146" stroke-width="1.15"/><path d="M7 3.800v6.400M3.800 7h6.400" stroke="#3c4146" stroke-width="1.15"/></svg><div style="margin-top:4px">New</div></div>
<div class="sb" style="top:82px"><svg width="14" height="13" viewBox="0 0 14 13"><path d="M4.500 1.200L1 3.200l1.300 2.400 1.400-.6v6.800h6.600V5l1.400.6L13 3.200 9.500 1.200c-.4 1.300-1.400 1.900-2.500 1.900s-2.100-.6-2.500-1.900z" fill="none" stroke="#3c4146" stroke-width="1.15" stroke-linejoin="round"/><path d="M5.800 5.500h2.400v2.200H5.800z" fill="none" stroke="#3c4146" stroke-width=".7"/></svg><div style="margin-top:6px">Templates</div></div>
<div class="sb" style="top:126px"><svg width="12" height="14" viewBox="0 0 12 14"><rect x="1.500" y="1.500" width="9" height="11.500" rx="1.500" fill="none" stroke="#3c4146" stroke-width="1.15"/><path d="M4 1.500v-1h4v1" fill="none" stroke="#3c4146" stroke-width="1.05"/><circle cx="6" cy="7.500" r="1.900" fill="none" stroke="#3c4146" stroke-width="1.05"/></svg><div style="margin-top:3.800px">Projects</div></div>
<div class="sb" style="top:169px"><svg width="14" height="14" viewBox="0 0 14 14"><path d="M5.500 1.500L10 8.500H1z" fill="none" stroke="#3c4146" stroke-width="1.15" stroke-linejoin="round"/><circle cx="9" cy="9" r="3.600" fill="none" stroke="#3c4146" stroke-width="1.15"/></svg><div style="margin-top:4.300px">Shapes</div></div>
<div class="sb" style="top:212px"><svg width="12" height="15" viewBox="0 0 12 15"><path d="M6 1C3.300 1 1.500 3 1.500 5.300 1.500 7.800 3.500 9 4.300 10.800h3.400C8.500 9 10.500 7.800 10.500 5.300 10.500 3 8.700 1 6 1z" fill="none" stroke="#3c4146" stroke-width="1.15"/><path d="M4.300 12.200h3.400M4.800 13.800h2.400M6 10.500V6M4.600 5.200L6 6.500l1.400-1.300" fill="none" stroke="#3c4146" stroke-width="1.05"/></svg><div style="margin-top:4.300px">Images</div></div>
<div class="sb" style="top:257px"><svg width="12" height="13" viewBox="0 0 12 13"><path d="M1.500 3.500v-2h9v2M6 1.500v10M4 11.500h4" fill="none" stroke="#3c4146" stroke-width="1.100"/></svg><div style="margin-top:4.800px">Text</div></div>
<div class="sb" style="top:301px"><svg width="14" height="14" viewBox="0 0 14 14"><path d="M7 1.500c3.300 0 5.500 2 5.500 4.700S10.300 11 7 11c-.6 0-1.100-.1-1.600-.2L2.800 12.500l.5-2.600C2.100 9 1.500 7.700 1.500 6.200 1.500 3.500 3.700 1.500 7 1.500z" fill="none" stroke="#3c4146" stroke-width="1.15" stroke-linejoin="round"/><path d="M4.300 5.200h5.400M4.300 7.400h4" stroke="#3c4146" stroke-width="1.05"/></svg><div style="margin-top:3.800px">Phrases</div></div>
<div class="sb" style="top:340px"><svg width="15" height="15" viewBox="0 0 15 15"><path d="M4.200 6v6.200M5 13h6.500M12.300 12.200V5.800M11.500 5H7.500" fill="none" stroke="#3c4146" stroke-width="1.100"/><rect x="3" y="11.800" width="2.400" height="2.400" fill="#cbcbcb" stroke="#3c4146" stroke-width=".9"/><rect x="11.100" y="11.800" width="2.400" height="2.400" fill="#cbcbcb" stroke="#3c4146" stroke-width=".9"/><rect x="11.100" y="3.800" width="2.400" height="2.400" fill="#cbcbcb" stroke="#3c4146" stroke-width=".9"/><path d="M4.200 .600l.9 2.300 2.300.900-2.300.900-.900 2.300-.900-2.300L1 3.800l2.300-.900z" fill="#3c4146"/></svg><div style="margin-top:5px;line-height:9.300px">Editable<br>Images</div></div>
<div class="sb" style="top:390px"><svg width="12" height="13" viewBox="0 0 12 13"><path d="M1.500 1.500h9M6 12V4.500M2.800 7.500L6 4.300l3.200 3.200" fill="none" stroke="#3c4146" stroke-width="1.100"/></svg><div style="margin-top:3.500px">Upload</div></div>
<div class="sb" style="top:434px"><svg width="14" height="15" viewBox="0 0 14 15"><path d="M1.500 2h11M2.500 2v11M2.500 4l3 4 3-4M8.500 2v11M5.500 5v8M12.500 5.500c-1-.8-3.500-.8-3.500 2.500s2.500 3.800 3.500 2.800V8.500H11" fill="none" stroke="#3c4146" stroke-width="1.05"/></svg><div style="margin-top:1.600px">Monogram</div></div>
<svg class="abs" style="left:0;top:530px" width="90" height="88" viewBox="0 530 90 88">
<defs><clipPath id="hc"><path transform="translate(36.5 566) rotate(-37) scale(.95)" d="M0 57C-13 45-35 25-35 0A18 18 0 0 1 0-5 18 18 0 0 1 35 0C35 25 13 45 0 57Z"/></clipPath></defs>
<path transform="translate(36.5 566) rotate(-37) scale(.95)" d="M0 57C-13 45-35 25-35 0A18 18 0 0 1 0-5 18 18 0 0 1 35 0C35 25 13 45 0 57Z" fill="#fce5e2"/>
<g clip-path="url(#hc)">
<path d="M49 553.500l5-1.500 4 6-5 3z" fill="#f3a9ab"/>
<path d="M21 599l6-8 8 4-10 8z" fill="#f3a9ab"/>
<path d="M51 556l16-5 10 26-7 36-50-12 13-9 15-19 8-7z" fill="#e58a5e"/>
<path d="M22 601l12-9 20-12 20-6-2 40z" fill="#e06d3d" fill-opacity=".85"/>
<path d="M53 559l5 4-3 6-6 6 8-4 6-12z" fill="#e79a7a" fill-opacity=".6"/>
</g></svg>
<div id="tool" class="abs"></div>
<svg class="abs" style="left:53px;top:41.700px" width="13" height="11" viewBox="0 0 13 11"><path d="M3.6 .8L.9 3.5l2.700 2.700M1.200 3.500h6.300c2.100 0 3.300 1.200 3.300 2.800s-1.200 2.800-3.300 2.800H4.600" fill="none" stroke="#33383c" stroke-width="1.250"/></svg><svg class="abs" style="left:76.500px;top:41.700px" width="13" height="11" viewBox="0 0 13 11"><path transform="translate(12.200 0) scale(-1 1)" d="M3.600 .800L.900 3.500l2.700 2.700M1.200 3.500h6.300c2.100 0 3.300 1.200 3.300 2.800s-1.200 2.800-3.300 2.800H4.600" fill="none" stroke="#d5d7d9" stroke-width="1.250"/></svg>
<div class="sep" style="left:98px"></div>
<div class="tl" style="left:109px">Operation</div>
<div class="inp" style="left:109px;width:54px;font-size:6.600px;padding-left:3px;color:#3c4146;top:44.500px">Print Then Cut<span style="font-size:5px;position:relative;top:-.5px;left:.3px;color:#222">&#9660;</span></div>
<div class="abs" style="left:166px;top:45px;width:11px;height:11px;background:#454545;border-radius:1px"></div>
<div class="sep" style="left:186px"></div>
<div class="tl" style="left:196.500px">Select All</div>
<svg class="abs" style="left:203px;top:45px" width="12" height="12" viewBox="0 0 12 12"><circle cx="6" cy="6" r="5" fill="none" stroke="#33383c" stroke-width="1.300" stroke-dasharray="1.700 1.200"/><path d="M4 4.500h1.300M6.700 4.500H8M4 6.800h1.300M6.700 6.800H8M6 3.300v1M6 7.800v1" stroke="#33383c" stroke-width="1"/></svg>
<div class="tl" style="left:236px">Edit</div>
<svg class="abs" style="left:233px;top:44px" width="20" height="13" viewBox="0 0 20 13"><path d="M2 11l.8-3L9 1.800l2.200 2.200L5 10.200z" fill="none" stroke="#33383c" stroke-width="1"/><path d="M13.500 6.200h3.400l-1.700 2.300z" fill="#222"/></svg>
<div class="sep" style="left:259px"></div>
<div class="tl dim" style="left:270px">Align</div>
<svg class="abs" style="left:271px;top:46px" width="18" height="10" viewBox="0 0 18 10"><path d="M1 0v10" stroke="#d3d5d7" stroke-width="1"/><rect x="3" y="2.500" width="6" height="4.500" fill="none" stroke="#d3d5d7" stroke-width="1"/><path d="M12.500 4h3.400l-1.700 2.300z" fill="#d3d5d7"/></svg>
<div class="tl" style="left:295px">Arrange</div>
<svg class="abs" style="left:296px;top:45px" width="20" height="12" viewBox="0 0 20 12"><rect x="1" y="1" width="5.500" height="5.500" rx="1" fill="#fff" stroke="#33383c" stroke-width="1"/><rect x="4" y="4.500" width="5.500" height="5.500" rx="1" fill="#fff" stroke="#33383c" stroke-width="1"/><path d="M12.500 5h3.400l-1.700 2.300z" fill="#222"/></svg>
<div class="tl" style="left:331px">Flip</div>
<svg class="abs" style="left:329px;top:45px" width="20" height="12" viewBox="0 0 20 12"><path d="M4.200 1.500L1 10.500h3.200zM7.300 1.500l3.200 9H7.300z" fill="none" stroke="#33383c" stroke-width="1" stroke-linejoin="round"/><path d="M5.750 0v12" stroke="#33383c" stroke-width=".8"/><path d="M12.500 5h3.400l-1.700 2.300z" fill="#222"/></svg>
<div class="sep" style="left:355px"></div>
<div class="tl" style="left:364px">Offset</div>
<svg class="abs" style="left:364px;top:44px" width="22" height="14" viewBox="0 0 22 14"><path d="M6.500 1l1.600 2 2.500-.2-.2 2.500 2 1.700-2 1.600.2 2.400-2.500-.1-1.600 2-1.600-2-2.500.1.200-2.400-2-1.600 2-1.700L2.400 2.800l2.500.2z" fill="none" stroke="#33383c" stroke-width=".8" stroke-dasharray="1.400 .9"/><circle cx="6.500" cy="7" r="2.300" fill="none" stroke="#33383c" stroke-width="1"/><path d="M14.500 6h3.400l-1.700 2.300z" fill="#222"/></svg>
<div class="sep" style="left:391px"></div>
<div class="tl dim" style="left:402px">Warp</div>
<svg class="abs" style="left:401px;top:46px" width="22" height="10" viewBox="0 0 22 10"><path d="M1 1.500c3 1 7 1 10 0M1 8.500c3-1 7-1 10 0M1 1v8M4.500 2v6M7.800 2v6M11 1v8" fill="none" stroke="#d3d5d7" stroke-width="1"/><path d="M14.500 4h3.400l-1.700 2.300z" fill="#d3d5d7"/></svg>
<div class="sep" style="left:429px"></div>
<div class="tl" style="left:440px">Size</div>
<div class="lbl" style="left:440px">W</div>
<div class="inp" style="left:448px;width:36px">1.5</div>
<svg class="abs" style="left:488.200px;top:36.600px" width="11" height="9" viewBox="0 0 11 9"><rect x="3" y="3.600" width="5" height="4.400" rx=".8" fill="#fff" stroke="#33383c" stroke-width="1"/><path d="M4 3.600V2.300a1.500 1.500 0 0 1 3 0v1.300" fill="none" stroke="#33383c" stroke-width=".9"/></svg>
<div class="abs" style="left:484.500px;top:41px;width:4px;height:3px;border-left:1px solid #ccc;border-top:1px solid #ccc;border-radius:2px 0 0 0"></div>
<div class="abs" style="left:500px;top:41px;width:4px;height:3px;border-right:1px solid #ccc;border-top:1px solid #ccc;border-radius:0 2px 0 0"></div>
<div class="lbl" style="left:493.500px">H</div>
<div class="inp" style="left:501px;width:36px">0.95</div>
<div class="sep" style="left:545px"></div>
<div class="tl" style="left:556px">Rotate</div>
<svg class="abs" style="left:555px;top:44px" width="13" height="13" viewBox="0 0 13 13"><path d="M2 5.500A4.700 4.700 0 0 1 10.800 4M11 7.500A4.700 4.700 0 0 1 2.200 9" fill="none" stroke="#33383c" stroke-width="1.200"/><path d="M11.300 1.300v3.200H8.100M1.700 11.700V8.500h3.200" fill="none" stroke="#33383c" stroke-width="1.100"/></svg>
<div class="inp" style="left:571px;width:36px">0</div>
<div class="sep" style="left:615px"></div>
<div class="tl" style="left:626px">Position</div>
<div class="lbl" style="left:626px">X</div>
<div class="inp" style="left:632.500px;width:36px">8.506</div>
<div class="lbl" style="left:675.500px">Y</div>
<div class="inp" style="left:681.500px;width:36px">5.814</div>
<svg class="abs" style="left:478px;top:45.500px" width="5" height="9" viewBox="0 0 5 9"><path d="M.3 3.600L2.500.6l2.200 3zM.3 5.400l2.200 3 2.200-3z" fill="#222"/></svg><svg class="abs" style="left:531px;top:45.500px" width="5" height="9" viewBox="0 0 5 9"><path d="M.3 3.600L2.500.6l2.200 3zM.3 5.400l2.200 3 2.200-3z" fill="#222"/></svg><svg class="abs" style="left:601px;top:45.500px" width="5" height="9" viewBox="0 0 5 9"><path d="M.3 3.600L2.500.6l2.200 3zM.3 5.400l2.200 3 2.200-3z" fill="#222"/></svg><svg class="abs" style="left:663px;top:45.500px" width="5" height="9" viewBox="0 0 5 9"><path d="M.3 3.600L2.500.6l2.200 3zM.3 5.400l2.200 3 2.200-3z" fill="#222"/></svg><svg class="abs" style="left:712px;top:45.500px" width="5" height="9" viewBox="0 0 5 9"><path d="M.3 3.600L2.500.6l2.200 3zM.3 5.400l2.200 3 2.200-3z" fill="#222"/></svg>

<div id="panel" class="abs"></div>
<div class="abs" style="left:1022px;top:39.2px;font-size:9.2px;color:#0c7a5e;line-height:12px;-webkit-text-stroke:.25px #0c7a5e">Layers</div>
<div class="abs" style="left:1069.3px;top:39.2px;font-size:9.3px;color:#4a4f54;line-height:12px">Color Sync</div>
<div class="abs" style="left:1013px;top:60px;width:187px;height:1px;background:#e4e4e4"></div>
<div class="abs" style="left:1013px;top:59px;width:46px;height:2px;background:#0c7a5e"></div>
<svg class="abs" style="left:1023px;top:68px" width="14" height="14" viewBox="0 0 14 14"><path d="M1.500 4V1.500H4M10 1.500h2.500V4M12.500 10v2.500H10M4 12.500H1.500V10" fill="none" stroke="#d9dbdd" stroke-width="1"/><rect x="4" y="4" width="4" height="4" rx="1" fill="none" stroke="#d9dbdd" stroke-width="1"/><rect x="6" y="6" width="4" height="4" rx="1" fill="none" stroke="#d9dbdd" stroke-width="1"/></svg>
<svg class="abs" style="left:1048px;top:68px" width="14" height="14" viewBox="0 0 14 14"><path d="M3.500 9.500h-2v-8h8v2" fill="none" stroke="#33383c" stroke-width="1.100"/><rect x="4" y="4" width="8.500" height="8.500" rx="1" fill="none" stroke="#33383c" stroke-width="1.100"/><path d="M8.250 6v4.500M6 8.250h4.500" stroke="#33383c" stroke-width="1.100"/></svg>
<svg class="abs" style="left:1073px;top:68px" width="14" height="14" viewBox="0 0 14 14"><path d="M1.500 3.500h11M5 3.500V1.800h4v1.700M2.800 3.500l.7 9h7l.7-9M5.600 5.800v4.500M8.400 5.800v4.500" fill="none" stroke="#33383c" stroke-width="1.100"/></svg>
<div class="abs" style="left:1013px;top:91px;width:187px;height:1px;background:#e9e9e9"></div>
<div class="abs" style="left:1015px;top:273px;width:172px;height:34.500px;background:#b4e8da;border-radius:3px"></div>
<div class="sw" style="top:104.3px"></div>
<div class="ly" style="left:1055px;top:95.6px"><b>Square</b><i>Print Then Cut</i></div>
<div class="sw" style="top:140.6px"></div>
<div class="ly" style="left:1055px;top:131.9px"><b>Square</b><i>Print Then Cut</i></div>
<div class="sw" style="top:177.0px"></div>
<div class="ly" style="left:1055px;top:168.3px"><b>Square</b><i>Print Then Cut</i></div>
<div class="sw" style="top:213.4px"></div>
<div class="ly" style="left:1055px;top:204.7px"><b>Square</b><i>Print Then Cut</i></div>
<div class="sw" style="top:249.7px"></div>
<div class="ly" style="left:1055px;top:241.0px"><b>Rectangle</b><i>Print Then Cut</i></div>
<div class="sw" style="top:286.1px"></div>
<div class="ly" style="left:1055px;top:277.4px"><b style="-webkit-text-stroke:.3px #2e3338;color:#2e3338">Rectangle</b><i>Print Then Cut</i></div>
<div class="sw" style="top:322.4px"></div>
<div class="ly" style="left:1055px;top:313.7px"><b>Rectangle</b><i>Print Then Cut</i></div>
<div class="sw" style="top:358.7px"></div>
<div class="ly" style="left:1055px;top:350.1px"><b>Rectangle</b><i>Print Then Cut</i></div>
<svg class="abs" style="left:1020px;top:395px" width="9" height="7" viewBox="0 0 9 7"><path d="M1.500 1.800l3 3 3-3" fill="none" stroke="#33383c" stroke-width="1.100"/></svg>
<svg class="abs" style="left:1035px;top:391px" width="14" height="14" viewBox="0 0 14 14"><path d="M1.500 4V1.500H4M10 1.500h2.500V4M12.500 10v2.500H10M4 12.500H1.500V10" fill="none" stroke="#33383c" stroke-width="1.100"/><rect x="3.800" y="3.800" width="4.400" height="4.400" rx="1.200" fill="none" stroke="#33383c" stroke-width="1.100"/><rect x="5.800" y="5.800" width="4.400" height="4.400" rx="1.200" fill="none" stroke="#33383c" stroke-width="1.100"/></svg>
<div class="ly" style="left:1055px;top:392.600px"><b>Group</b></div>
<div class="ly" style="left:1075px;top:421.4px"><b>Square</b><i>Print Then Cut</i></div>
<div class="ly" style="left:1075px;top:456.5px"><b>Square</b><i>Print Then Cut</i></div>
<div class="ly" style="left:1075px;top:491.6px"><b>Square</b><i>Print Then Cut</i></div>
<div class="abs" style="left:1190px;top:92px;width:9px;height:433px;background:#f7f7f7"></div>
<div class="abs" style="left:1190.500px;top:102.500px;width:8px;height:94px;background:#bdbdbd"></div>
<svg class="abs" style="left:1191px;top:94px" width="7" height="5" viewBox="0 0 7 5"><path d="M.8 4L3.500 1l2.700 3z" fill="#333"/></svg>
<svg class="abs" style="left:1191px;top:517px" width="7" height="5" viewBox="0 0 7 5"><path d="M.8 1l2.700 3 2.700-3z" fill="#333"/></svg>
<div class="abs" style="left:1013px;top:525px;width:187px;height:32px;background:#f6f6f6"></div>
<div class="abs" style="left:1018.500px;top:529px;width:33px;height:23px;background:#fff;border:1px solid #8f8f8f;border-radius:1px"></div>
<div class="abs" style="left:1058px;top:537px;font-size:6.200px;color:#2e3338;line-height:7px;-webkit-text-stroke:.15px #2e3338">Blank Canvas</div>
<div class="abs" style="left:1010px;top:575px;width:40px;text-align:center;font-size:6.500px;color:#cdd0d2;line-height:7px">Slice</div>
<div class="abs" style="left:1040px;top:575px;width:40px;text-align:center;font-size:6.500px;color:#cdd0d2;line-height:7px">Combine</div>
<div class="abs" style="left:1073px;top:575px;width:40px;text-align:center;font-size:6.500px;color:#cdd0d2;line-height:7px">Attach</div>
<div class="abs" style="left:1103px;top:575px;width:40px;text-align:center;font-size:6.500px;color:#cdd0d2;line-height:7px">Flatten</div>
<div class="abs" style="left:1135px;top:575px;width:40px;text-align:center;font-size:6.500px;color:#cdd0d2;line-height:7px">Contour</div>
<svg class="abs" style="left:1023px;top:559px" width="14" height="14" viewBox="0 0 14 14"><rect x="1.500" y="1.500" width="7" height="7" rx="1.500" fill="none" stroke="#c8cbcd" stroke-width="1"/><rect x="5" y="5" width="7" height="7" rx="1.500" fill="none" stroke="#c8cbcd" stroke-width="1"/></svg>
<svg class="abs" style="left:1050px;top:559px" width="22" height="14" viewBox="0 0 22 14"><rect x="1.500" y="1.500" width="7" height="7" rx="1.500" fill="none" stroke="#c4c7ca" stroke-width="1"/><circle cx="8.500" cy="8.500" r="3.800" fill="#fff" stroke="#c4c7ca" stroke-width="1"/><path d="M15 5h3.400l-1.700 2.300z" fill="#c4c7ca"/></svg>
<svg class="abs" style="left:1085px;top:561px" width="16" height="10" viewBox="0 0 16 10"><path d="M4 6.500h6.500a2.500 2.500 0 0 0 0-5H4.500a3.500 3.500 0 0 0 0 7h7" fill="none" stroke="#c8cbcd" stroke-width="1"/></svg>
<svg class="abs" style="left:1116px;top:558px" width="14" height="15" viewBox="0 0 14 15"><path d="M7 1v6M4.500 5L7 7.500 9.500 5M1.500 8.500L7 11l5.500-2.500M1.500 11L7 13.500l5.500-2.500" fill="none" stroke="#c8cbcd" stroke-width="1"/></svg>
<svg class="abs" style="left:1148px;top:559px" width="14" height="14" viewBox="0 0 14 14"><circle cx="7" cy="7" r="5.500" fill="none" stroke="#c8cbcd" stroke-width="1" stroke-dasharray="2.200 1.600"/></svg>
<div class="abs" style="left:1012px;top:586px;width:188px;height:32px;background:#0b45c6"></div>
<svg class="abs" style="left:1021px;top:594px" width="20" height="16" viewBox="0 0 20 16"><path d="M2.500 1h17l-3.500 11H4.500L1 15z" fill="#11986b"/><text x="10" y="9.800" font-size="8.500" font-weight="bold" fill="#fff" text-anchor="middle" font-family="Liberation Sans">a</text></svg>
<div class="abs" style="left:1047px;top:596px;font-size:9.300px;color:#fff;line-height:12px;white-space:nowrap;-webkit-text-stroke:.15px #fff">Try Cricut Access for free</div>
</body></html>
